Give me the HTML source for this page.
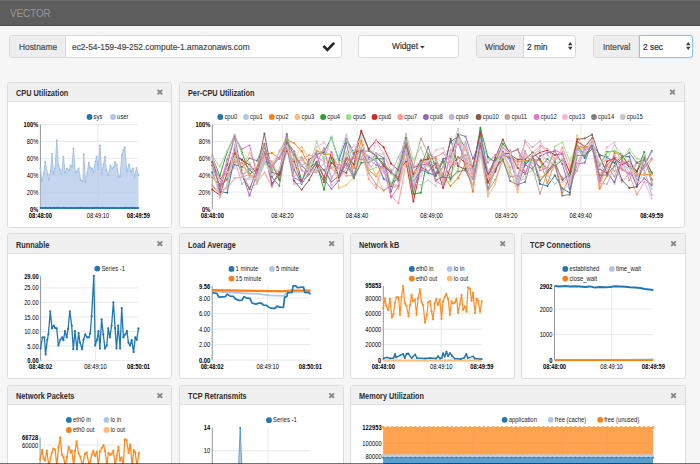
<!DOCTYPE html>
<html><head><meta charset="utf-8">
<style>
*{box-sizing:border-box;margin:0;padding:0}
html,body{width:700px;height:464px;overflow:hidden;background:#f6f6f6;font-family:"Liberation Sans",sans-serif;color:#333}
.abs{position:absolute}
#topbar{position:absolute;left:0;top:0;width:700px;height:26px;background:#5d5d5d;border-top:1px solid #6b6b6b;border-bottom:1px solid #484848}
#brand{position:absolute;left:10px;top:7px;font-size:11.4px;color:#999999;transform:scaleX(0.86);transform-origin:0 0;line-height:1}
.grp{position:absolute;top:35px;height:23px;border:1px solid #d9d9d9;border-radius:3px;background:#fff}
.addon{position:absolute;left:0;top:0;bottom:0;background:#eeeeee;border-right:1px solid #d9d9d9;border-radius:2px 0 0 2px}
.t{position:absolute;white-space:pre;font-size:9.4px;line-height:1;-webkit-text-stroke:0.2px currentColor;transform:scaleX(0.89);transform-origin:0 0}
.panel{position:absolute;border:1px solid #dcdcdc;border-radius:2.5px;background:#fff;overflow:hidden}
.ph{position:absolute;left:0;top:0;right:0;height:19px;background:#f0f0f0;border-bottom:1px solid #e2e2e2}
.pt{position:absolute;left:7.6px;top:5px;font-size:8.7px;font-weight:bold;color:#2b2b2b;white-space:pre;transform-origin:0 0;transform:scaleX(0.84)}
.px{position:absolute;top:4px;width:8px;height:8px}
svg text{font-family:"Liberation Sans",sans-serif}
</style></head><body>
<div id="topbar"><div id="brand">VECTOR</div></div>

<!-- Hostname -->
<div class="grp" style="left:9px;width:333px">
  <div class="addon" style="width:56px"></div>
  <div class="t" style="left:9px;top:5.5px;color:#4a4a4a">Hostname</div>
  <div class="t" style="left:62px;top:5.5px;color:#4a4a4a">ec2-54-159-49-252.compute-1.amazonaws.com</div>
  <svg class="abs" style="left:312px;top:4.3px;overflow:visible" width="14" height="12" viewBox="0 0 14 12"><path d="M1.4 5.9 L5.4 9.9 L12.2 2.9" fill="none" stroke="#262626" stroke-width="2.7"/></svg>
</div>

<!-- Widget -->
<div class="grp" style="left:358px;width:101px;top:34.5px;border-color:#dcdcdc">
  <div class="t" style="left:33px;top:5.5px;color:#333">Widget</div>
  <svg class="abs" style="left:61px;top:10px" width="5" height="3"><path d="M0 0 L4.8 0 L2.4 2.6Z" fill="#333"/></svg>
</div>

<!-- Window -->
<div class="grp" style="left:476px;width:100px">
  <div class="addon" style="width:47px"></div>
  <div class="t" style="left:7.5px;top:5.5px;color:#4a4a4a">Window</div>
  <div class="t" style="left:50px;top:5.5px;color:#333">2 min</div>
  <svg class="abs" style="left:91px;top:5.6px" width="5" height="9"><path d="M0 3.3 L2.25 0 L4.5 3.3Z M0 4.7 L2.25 8 L4.5 4.7Z" fill="#3a3a3a"/></svg>
</div>

<!-- Interval -->
<div class="grp" style="left:593px;width:100px">
  <div class="addon" style="width:46px"></div>
  <div class="t" style="left:8.5px;top:5.5px;color:#4a4a4a">Interval</div>
  <div class="t" style="left:48.5px;top:5.5px;color:#333">2 sec</div>
  <div class="abs" style="left:45px;top:-1px;right:-1px;bottom:-1px;border:1px solid #92c3ee;border-radius:0 3px 3px 0;box-shadow:0 0 1.5px rgba(102,175,233,0.5)"></div>
  <svg class="abs" style="left:91.5px;top:5.6px" width="5" height="9"><path d="M0 3.3 L2.25 0 L4.5 3.3Z M0 4.7 L2.25 8 L4.5 4.7Z" fill="#3a3a3a"/></svg>
</div>

<!-- PANELS -->
<div class="panel" style="left:7px;top:82px;width:165px;height:146px"><div class="ph"></div><div class="pt">CPU Utilization</div></div>
<div class="panel" style="left:179px;top:82px;width:506px;height:146px"><div class="ph"></div><div class="pt">Per-CPU Utilization</div></div>

<div class="panel" style="left:7px;top:233px;width:165px;height:146px"><div class="ph" style="height:20px"></div><div class="pt" style="top:6px">Runnable</div></div>
<div class="panel" style="left:179px;top:233px;width:165px;height:146px"><div class="ph" style="height:20px"></div><div class="pt" style="top:6px">Load Average</div></div>
<div class="panel" style="left:350px;top:233px;width:165px;height:146px"><div class="ph" style="height:20px"></div><div class="pt" style="top:6px">Network kB</div></div>
<div class="panel" style="left:521px;top:233px;width:165px;height:146px"><div class="ph" style="height:20px"></div><div class="pt" style="top:6px">TCP Connections</div></div>

<div class="panel" style="left:7px;top:385px;width:165px;height:100px"><div class="ph"></div><div class="pt">Network Packets</div></div>
<div class="panel" style="left:179px;top:385px;width:165px;height:100px"><div class="ph"></div><div class="pt">TCP Retransmits</div></div>
<div class="panel" style="left:350px;top:385px;width:336px;height:100px"><div class="ph"></div><div class="pt">Memory Utilization</div></div>

<svg style="position:absolute;left:0;top:0" width="700" height="464" viewBox="0 0 700 464">
<line x1="40.4" y1="124.5" x2="138.4" y2="124.5" stroke="#e6e6e6" stroke-width="0.9"/>
<line x1="40.4" y1="141.4" x2="138.4" y2="141.4" stroke="#e6e6e6" stroke-width="0.9"/>
<line x1="40.4" y1="158.3" x2="138.4" y2="158.3" stroke="#e6e6e6" stroke-width="0.9"/>
<line x1="40.4" y1="175.2" x2="138.4" y2="175.2" stroke="#e6e6e6" stroke-width="0.9"/>
<line x1="40.4" y1="192.1" x2="138.4" y2="192.1" stroke="#e6e6e6" stroke-width="0.9"/>
<line x1="40.4" y1="209" x2="138.4" y2="209" stroke="#e6e6e6" stroke-width="0.9"/>
<line x1="98" y1="124.5" x2="98" y2="209" stroke="#e6e6e6" stroke-width="0.9"/>
<line x1="40.4" y1="124.5" x2="40.4" y2="209" stroke="#8a8a8a" stroke-width="0.9"/>
<text transform="translate(38.4 124.5) scale(0.89 1)" text-anchor="end" font-size="6.5" font-weight="bold" fill="#000" dominant-baseline="central">100%</text>
<text transform="translate(38.4 141.4) scale(0.89 1)" text-anchor="end" font-size="6.5" fill="#000" dominant-baseline="central">80%</text>
<text transform="translate(38.4 158.3) scale(0.89 1)" text-anchor="end" font-size="6.5" fill="#000" dominant-baseline="central">60%</text>
<text transform="translate(38.4 175.2) scale(0.89 1)" text-anchor="end" font-size="6.5" fill="#000" dominant-baseline="central">40%</text>
<text transform="translate(38.4 192.1) scale(0.89 1)" text-anchor="end" font-size="6.5" fill="#000" dominant-baseline="central">20%</text>
<text transform="translate(38.4 209) scale(0.89 1)" text-anchor="end" font-size="6.5" font-weight="bold" fill="#000" dominant-baseline="central">0%</text>
<text transform="translate(40.4 215.2) scale(0.89 1)" text-anchor="middle" font-size="6.5" font-weight="bold" fill="#000" dominant-baseline="central">08:48:00</text>
<text transform="translate(98 215.2) scale(0.89 1)" text-anchor="middle" font-size="6.5" fill="#000" dominant-baseline="central">08:49:10</text>
<text transform="translate(138.4 215.2) scale(0.89 1)" text-anchor="middle" font-size="6.5" font-weight="bold" fill="#000" dominant-baseline="central">08:49:59</text>
<polygon points="40.4,168 41.9,181 43.8,173.4 45.2,162 47.7,174 48.7,179.6 50.6,171.4 52,154 53.5,173.4 55,168.5 56.8,140.4 58.3,165.6 59.9,169.5 61.6,174.3 63.4,156.9 65.1,172.4 67,168.5 69,170.4 70.5,165.6 71.9,166.6 73.5,148.6 75.2,172.8 76.8,171.4 78.7,168.5 80.6,180 83,181 83.7,154.4 85.5,182 87.4,172.4 88.8,162.7 89.9,167.5 91.9,168.5 93.4,172.4 95.4,161.7 96.7,156.9 98,169.5 100,145.6 101.6,173.4 103.5,164.6 105,156.9 106.4,170.4 108.3,175.3 110.3,165.6 112.2,168.5 113.6,167 115.1,162.3 116.7,165 118.6,177.2 120,176.3 121.9,154.9 123.5,150.1 124.8,147.2 126.8,171.4 129.1,164.6 131,171.4 133,168.5 134.5,177.2 136.4,168.1 138.4,175.3 138.4,207.9 40.4,207.9" fill="#aec7e8" opacity="0.72"/>
<polyline points="40.4,168 41.9,181 43.8,173.4 45.2,162 47.7,174 48.7,179.6 50.6,171.4 52,154 53.5,173.4 55,168.5 56.8,140.4 58.3,165.6 59.9,169.5 61.6,174.3 63.4,156.9 65.1,172.4 67,168.5 69,170.4 70.5,165.6 71.9,166.6 73.5,148.6 75.2,172.8 76.8,171.4 78.7,168.5 80.6,180 83,181 83.7,154.4 85.5,182 87.4,172.4 88.8,162.7 89.9,167.5 91.9,168.5 93.4,172.4 95.4,161.7 96.7,156.9 98,169.5 100,145.6 101.6,173.4 103.5,164.6 105,156.9 106.4,170.4 108.3,175.3 110.3,165.6 112.2,168.5 113.6,167 115.1,162.3 116.7,165 118.6,177.2 120,176.3 121.9,154.9 123.5,150.1 124.8,147.2 126.8,171.4 129.1,164.6 131,171.4 133,168.5 134.5,177.2 136.4,168.1 138.4,175.3" fill="none" stroke="#a3bfe3" stroke-width="0.9" stroke-linejoin="round" opacity="1"/>
<circle cx="40.4" cy="168" r="1.05" fill="#a3bfe3" opacity="1"/>
<circle cx="41.9" cy="181" r="1.05" fill="#a3bfe3" opacity="1"/>
<circle cx="43.8" cy="173.4" r="1.05" fill="#a3bfe3" opacity="1"/>
<circle cx="45.2" cy="162" r="1.05" fill="#a3bfe3" opacity="1"/>
<circle cx="47.7" cy="174" r="1.05" fill="#a3bfe3" opacity="1"/>
<circle cx="48.7" cy="179.6" r="1.05" fill="#a3bfe3" opacity="1"/>
<circle cx="50.6" cy="171.4" r="1.05" fill="#a3bfe3" opacity="1"/>
<circle cx="52" cy="154" r="1.05" fill="#a3bfe3" opacity="1"/>
<circle cx="53.5" cy="173.4" r="1.05" fill="#a3bfe3" opacity="1"/>
<circle cx="55" cy="168.5" r="1.05" fill="#a3bfe3" opacity="1"/>
<circle cx="56.8" cy="140.4" r="1.05" fill="#a3bfe3" opacity="1"/>
<circle cx="58.3" cy="165.6" r="1.05" fill="#a3bfe3" opacity="1"/>
<circle cx="59.9" cy="169.5" r="1.05" fill="#a3bfe3" opacity="1"/>
<circle cx="61.6" cy="174.3" r="1.05" fill="#a3bfe3" opacity="1"/>
<circle cx="63.4" cy="156.9" r="1.05" fill="#a3bfe3" opacity="1"/>
<circle cx="65.1" cy="172.4" r="1.05" fill="#a3bfe3" opacity="1"/>
<circle cx="67" cy="168.5" r="1.05" fill="#a3bfe3" opacity="1"/>
<circle cx="69" cy="170.4" r="1.05" fill="#a3bfe3" opacity="1"/>
<circle cx="70.5" cy="165.6" r="1.05" fill="#a3bfe3" opacity="1"/>
<circle cx="71.9" cy="166.6" r="1.05" fill="#a3bfe3" opacity="1"/>
<circle cx="73.5" cy="148.6" r="1.05" fill="#a3bfe3" opacity="1"/>
<circle cx="75.2" cy="172.8" r="1.05" fill="#a3bfe3" opacity="1"/>
<circle cx="76.8" cy="171.4" r="1.05" fill="#a3bfe3" opacity="1"/>
<circle cx="78.7" cy="168.5" r="1.05" fill="#a3bfe3" opacity="1"/>
<circle cx="80.6" cy="180" r="1.05" fill="#a3bfe3" opacity="1"/>
<circle cx="83" cy="181" r="1.05" fill="#a3bfe3" opacity="1"/>
<circle cx="83.7" cy="154.4" r="1.05" fill="#a3bfe3" opacity="1"/>
<circle cx="85.5" cy="182" r="1.05" fill="#a3bfe3" opacity="1"/>
<circle cx="87.4" cy="172.4" r="1.05" fill="#a3bfe3" opacity="1"/>
<circle cx="88.8" cy="162.7" r="1.05" fill="#a3bfe3" opacity="1"/>
<circle cx="89.9" cy="167.5" r="1.05" fill="#a3bfe3" opacity="1"/>
<circle cx="91.9" cy="168.5" r="1.05" fill="#a3bfe3" opacity="1"/>
<circle cx="93.4" cy="172.4" r="1.05" fill="#a3bfe3" opacity="1"/>
<circle cx="95.4" cy="161.7" r="1.05" fill="#a3bfe3" opacity="1"/>
<circle cx="96.7" cy="156.9" r="1.05" fill="#a3bfe3" opacity="1"/>
<circle cx="98" cy="169.5" r="1.05" fill="#a3bfe3" opacity="1"/>
<circle cx="100" cy="145.6" r="1.05" fill="#a3bfe3" opacity="1"/>
<circle cx="101.6" cy="173.4" r="1.05" fill="#a3bfe3" opacity="1"/>
<circle cx="103.5" cy="164.6" r="1.05" fill="#a3bfe3" opacity="1"/>
<circle cx="105" cy="156.9" r="1.05" fill="#a3bfe3" opacity="1"/>
<circle cx="106.4" cy="170.4" r="1.05" fill="#a3bfe3" opacity="1"/>
<circle cx="108.3" cy="175.3" r="1.05" fill="#a3bfe3" opacity="1"/>
<circle cx="110.3" cy="165.6" r="1.05" fill="#a3bfe3" opacity="1"/>
<circle cx="112.2" cy="168.5" r="1.05" fill="#a3bfe3" opacity="1"/>
<circle cx="113.6" cy="167" r="1.05" fill="#a3bfe3" opacity="1"/>
<circle cx="115.1" cy="162.3" r="1.05" fill="#a3bfe3" opacity="1"/>
<circle cx="116.7" cy="165" r="1.05" fill="#a3bfe3" opacity="1"/>
<circle cx="118.6" cy="177.2" r="1.05" fill="#a3bfe3" opacity="1"/>
<circle cx="120" cy="176.3" r="1.05" fill="#a3bfe3" opacity="1"/>
<circle cx="121.9" cy="154.9" r="1.05" fill="#a3bfe3" opacity="1"/>
<circle cx="123.5" cy="150.1" r="1.05" fill="#a3bfe3" opacity="1"/>
<circle cx="124.8" cy="147.2" r="1.05" fill="#a3bfe3" opacity="1"/>
<circle cx="126.8" cy="171.4" r="1.05" fill="#a3bfe3" opacity="1"/>
<circle cx="129.1" cy="164.6" r="1.05" fill="#a3bfe3" opacity="1"/>
<circle cx="131" cy="171.4" r="1.05" fill="#a3bfe3" opacity="1"/>
<circle cx="133" cy="168.5" r="1.05" fill="#a3bfe3" opacity="1"/>
<circle cx="134.5" cy="177.2" r="1.05" fill="#a3bfe3" opacity="1"/>
<circle cx="136.4" cy="168.1" r="1.05" fill="#a3bfe3" opacity="1"/>
<circle cx="138.4" cy="175.3" r="1.05" fill="#a3bfe3" opacity="1"/>
<rect x="40.4" y="207.9" width="98" height="1.1" fill="#1f77b4" opacity="0.7"/>
<polyline points="40.4,207.81 42.06,207.73 43.72,207.98 45.38,207.69 47.04,207.92 48.7,207.83 50.37,207.68 52.03,207.9 53.69,207.67 55.35,207.87 57.01,207.68 58.67,207.7 60.33,207.86 61.99,208.06 63.65,207.71 65.31,207.76 66.98,207.96 68.64,208.12 70.3,207.94 71.96,207.85 73.62,208.14 75.28,207.67 76.94,208.08 78.6,207.79 80.26,207.72 81.92,207.71 83.59,207.8 85.25,208.06 86.91,207.74 88.57,207.94 90.23,207.97 91.89,207.84 93.55,207.92 95.21,207.68 96.87,207.68 98.53,207.75 100.2,207.99 101.86,207.86 103.52,207.81 105.18,207.94 106.84,207.88 108.5,207.8 110.16,208.05 111.82,208 113.48,207.77 115.15,207.94 116.81,207.91 118.47,208.09 120.13,208.01 121.79,207.79 123.45,208.14 125.11,207.71 126.77,207.86 128.43,208.03 130.09,207.73 131.75,207.89 133.42,207.67 135.08,207.98 136.74,208.03 138.4,207.94" fill="none" stroke="#1f77b4" stroke-width="1.5" stroke-linejoin="round" opacity="1"/>
<circle cx="40.4" cy="207.81" r="0.85" fill="#1f77b4" opacity="1"/>
<circle cx="42.06" cy="207.73" r="0.85" fill="#1f77b4" opacity="1"/>
<circle cx="43.72" cy="207.98" r="0.85" fill="#1f77b4" opacity="1"/>
<circle cx="45.38" cy="207.69" r="0.85" fill="#1f77b4" opacity="1"/>
<circle cx="47.04" cy="207.92" r="0.85" fill="#1f77b4" opacity="1"/>
<circle cx="48.7" cy="207.83" r="0.85" fill="#1f77b4" opacity="1"/>
<circle cx="50.37" cy="207.68" r="0.85" fill="#1f77b4" opacity="1"/>
<circle cx="52.03" cy="207.9" r="0.85" fill="#1f77b4" opacity="1"/>
<circle cx="53.69" cy="207.67" r="0.85" fill="#1f77b4" opacity="1"/>
<circle cx="55.35" cy="207.87" r="0.85" fill="#1f77b4" opacity="1"/>
<circle cx="57.01" cy="207.68" r="0.85" fill="#1f77b4" opacity="1"/>
<circle cx="58.67" cy="207.7" r="0.85" fill="#1f77b4" opacity="1"/>
<circle cx="60.33" cy="207.86" r="0.85" fill="#1f77b4" opacity="1"/>
<circle cx="61.99" cy="208.06" r="0.85" fill="#1f77b4" opacity="1"/>
<circle cx="63.65" cy="207.71" r="0.85" fill="#1f77b4" opacity="1"/>
<circle cx="65.31" cy="207.76" r="0.85" fill="#1f77b4" opacity="1"/>
<circle cx="66.98" cy="207.96" r="0.85" fill="#1f77b4" opacity="1"/>
<circle cx="68.64" cy="208.12" r="0.85" fill="#1f77b4" opacity="1"/>
<circle cx="70.3" cy="207.94" r="0.85" fill="#1f77b4" opacity="1"/>
<circle cx="71.96" cy="207.85" r="0.85" fill="#1f77b4" opacity="1"/>
<circle cx="73.62" cy="208.14" r="0.85" fill="#1f77b4" opacity="1"/>
<circle cx="75.28" cy="207.67" r="0.85" fill="#1f77b4" opacity="1"/>
<circle cx="76.94" cy="208.08" r="0.85" fill="#1f77b4" opacity="1"/>
<circle cx="78.6" cy="207.79" r="0.85" fill="#1f77b4" opacity="1"/>
<circle cx="80.26" cy="207.72" r="0.85" fill="#1f77b4" opacity="1"/>
<circle cx="81.92" cy="207.71" r="0.85" fill="#1f77b4" opacity="1"/>
<circle cx="83.59" cy="207.8" r="0.85" fill="#1f77b4" opacity="1"/>
<circle cx="85.25" cy="208.06" r="0.85" fill="#1f77b4" opacity="1"/>
<circle cx="86.91" cy="207.74" r="0.85" fill="#1f77b4" opacity="1"/>
<circle cx="88.57" cy="207.94" r="0.85" fill="#1f77b4" opacity="1"/>
<circle cx="90.23" cy="207.97" r="0.85" fill="#1f77b4" opacity="1"/>
<circle cx="91.89" cy="207.84" r="0.85" fill="#1f77b4" opacity="1"/>
<circle cx="93.55" cy="207.92" r="0.85" fill="#1f77b4" opacity="1"/>
<circle cx="95.21" cy="207.68" r="0.85" fill="#1f77b4" opacity="1"/>
<circle cx="96.87" cy="207.68" r="0.85" fill="#1f77b4" opacity="1"/>
<circle cx="98.53" cy="207.75" r="0.85" fill="#1f77b4" opacity="1"/>
<circle cx="100.2" cy="207.99" r="0.85" fill="#1f77b4" opacity="1"/>
<circle cx="101.86" cy="207.86" r="0.85" fill="#1f77b4" opacity="1"/>
<circle cx="103.52" cy="207.81" r="0.85" fill="#1f77b4" opacity="1"/>
<circle cx="105.18" cy="207.94" r="0.85" fill="#1f77b4" opacity="1"/>
<circle cx="106.84" cy="207.88" r="0.85" fill="#1f77b4" opacity="1"/>
<circle cx="108.5" cy="207.8" r="0.85" fill="#1f77b4" opacity="1"/>
<circle cx="110.16" cy="208.05" r="0.85" fill="#1f77b4" opacity="1"/>
<circle cx="111.82" cy="208" r="0.85" fill="#1f77b4" opacity="1"/>
<circle cx="113.48" cy="207.77" r="0.85" fill="#1f77b4" opacity="1"/>
<circle cx="115.15" cy="207.94" r="0.85" fill="#1f77b4" opacity="1"/>
<circle cx="116.81" cy="207.91" r="0.85" fill="#1f77b4" opacity="1"/>
<circle cx="118.47" cy="208.09" r="0.85" fill="#1f77b4" opacity="1"/>
<circle cx="120.13" cy="208.01" r="0.85" fill="#1f77b4" opacity="1"/>
<circle cx="121.79" cy="207.79" r="0.85" fill="#1f77b4" opacity="1"/>
<circle cx="123.45" cy="208.14" r="0.85" fill="#1f77b4" opacity="1"/>
<circle cx="125.11" cy="207.71" r="0.85" fill="#1f77b4" opacity="1"/>
<circle cx="126.77" cy="207.86" r="0.85" fill="#1f77b4" opacity="1"/>
<circle cx="128.43" cy="208.03" r="0.85" fill="#1f77b4" opacity="1"/>
<circle cx="130.09" cy="207.73" r="0.85" fill="#1f77b4" opacity="1"/>
<circle cx="131.75" cy="207.89" r="0.85" fill="#1f77b4" opacity="1"/>
<circle cx="133.42" cy="207.67" r="0.85" fill="#1f77b4" opacity="1"/>
<circle cx="135.08" cy="207.98" r="0.85" fill="#1f77b4" opacity="1"/>
<circle cx="136.74" cy="208.03" r="0.85" fill="#1f77b4" opacity="1"/>
<circle cx="138.4" cy="207.94" r="0.85" fill="#1f77b4" opacity="1"/>
<circle cx="89.5" cy="117" r="2.9" fill="#1f77b4"/>
<text transform="translate(93.6 116.6) scale(0.91 1)" text-anchor="start" font-size="6.5" fill="#222" dominant-baseline="central">sys</text>
<circle cx="113" cy="117" r="2.9" fill="#aec7e8"/>
<text transform="translate(117.1 116.6) scale(0.91 1)" text-anchor="start" font-size="6.5" fill="#222" dominant-baseline="central">user</text>
<line x1="212.3" y1="124.5" x2="651.7" y2="124.5" stroke="#e6e6e6" stroke-width="0.9"/>
<line x1="212.3" y1="141.4" x2="651.7" y2="141.4" stroke="#e6e6e6" stroke-width="0.9"/>
<line x1="212.3" y1="158.3" x2="651.7" y2="158.3" stroke="#e6e6e6" stroke-width="0.9"/>
<line x1="212.3" y1="175.2" x2="651.7" y2="175.2" stroke="#e6e6e6" stroke-width="0.9"/>
<line x1="212.3" y1="192.1" x2="651.7" y2="192.1" stroke="#e6e6e6" stroke-width="0.9"/>
<line x1="212.3" y1="209" x2="651.7" y2="209" stroke="#e6e6e6" stroke-width="0.9"/>
<line x1="282.4" y1="124.5" x2="282.4" y2="209" stroke="#e6e6e6" stroke-width="0.9"/>
<line x1="357" y1="124.5" x2="357" y2="209" stroke="#e6e6e6" stroke-width="0.9"/>
<line x1="431.6" y1="124.5" x2="431.6" y2="209" stroke="#e6e6e6" stroke-width="0.9"/>
<line x1="506.2" y1="124.5" x2="506.2" y2="209" stroke="#e6e6e6" stroke-width="0.9"/>
<line x1="580.8" y1="124.5" x2="580.8" y2="209" stroke="#e6e6e6" stroke-width="0.9"/>
<line x1="212.3" y1="124.5" x2="212.3" y2="209" stroke="#8a8a8a" stroke-width="0.9"/>
<text transform="translate(210.3 124.5) scale(0.89 1)" text-anchor="end" font-size="6.5" font-weight="bold" fill="#000" dominant-baseline="central">100%</text>
<text transform="translate(210.3 141.4) scale(0.89 1)" text-anchor="end" font-size="6.5" fill="#000" dominant-baseline="central">80%</text>
<text transform="translate(210.3 158.3) scale(0.89 1)" text-anchor="end" font-size="6.5" fill="#000" dominant-baseline="central">60%</text>
<text transform="translate(210.3 175.2) scale(0.89 1)" text-anchor="end" font-size="6.5" fill="#000" dominant-baseline="central">40%</text>
<text transform="translate(210.3 192.1) scale(0.89 1)" text-anchor="end" font-size="6.5" fill="#000" dominant-baseline="central">20%</text>
<text transform="translate(210.3 209) scale(0.89 1)" text-anchor="end" font-size="6.5" font-weight="bold" fill="#000" dominant-baseline="central">0%</text>
<text transform="translate(212.3 215.2) scale(0.89 1)" text-anchor="middle" font-size="6.5" font-weight="bold" fill="#000" dominant-baseline="central">08:48:00</text>
<text transform="translate(282.4 215.2) scale(0.89 1)" text-anchor="middle" font-size="6.5" fill="#000" dominant-baseline="central">08:48:20</text>
<text transform="translate(357 215.2) scale(0.89 1)" text-anchor="middle" font-size="6.5" fill="#000" dominant-baseline="central">08:48:40</text>
<text transform="translate(431.6 215.2) scale(0.89 1)" text-anchor="middle" font-size="6.5" fill="#000" dominant-baseline="central">08:49:00</text>
<text transform="translate(506.2 215.2) scale(0.89 1)" text-anchor="middle" font-size="6.5" fill="#000" dominant-baseline="central">08:49:20</text>
<text transform="translate(580.8 215.2) scale(0.89 1)" text-anchor="middle" font-size="6.5" fill="#000" dominant-baseline="central">08:49:40</text>
<text transform="translate(651.7 215.2) scale(0.89 1)" text-anchor="middle" font-size="6.5" font-weight="bold" fill="#000" dominant-baseline="central">08:49:59</text>
<polyline points="212.3,172.3 219.75,191.69 227.19,192.69 234.64,156.96 242.09,159.59 249.54,169.42 256.98,177.72 264.43,161.09 271.88,164.57 279.33,157.52 286.77,145.78 294.22,169.79 301.67,183.83 309.12,172.04 316.56,154.36 324.01,152.29 331.46,137.76 338.91,160.52 346.35,138.69 353.8,152.62 361.25,150.32 368.7,157 376.14,160.92 383.59,178.76 391.04,183.61 398.49,178.56 405.93,140.32 413.38,182.41 420.83,169.57 428.28,172.93 435.72,175.63 443.17,166.96 450.62,141.67 458.07,136.88 465.51,168.48 472.96,168.23 480.41,130.06 487.86,173.52 495.3,171.33 502.75,151.61 510.2,160.73 517.65,181.18 525.09,165.13 532.54,157.62 539.99,183.89 547.44,185.93 554.88,175.33 562.33,188.55 569.78,192.87 577.23,147.35 584.67,157.99 592.12,143.72 599.57,154.92 607.02,157.27 614.46,163.1 621.91,156.28 629.36,156.62 636.81,180.85 644.25,165.39 651.7,151.03" fill="none" stroke="#1f77b4" stroke-width="0.95" stroke-linejoin="round" opacity="1"/>
<circle cx="212.3" cy="172.3" r="1.05" fill="#1f77b4" opacity="1"/>
<circle cx="219.75" cy="191.69" r="1.05" fill="#1f77b4" opacity="1"/>
<circle cx="227.19" cy="192.69" r="1.05" fill="#1f77b4" opacity="1"/>
<circle cx="234.64" cy="156.96" r="1.05" fill="#1f77b4" opacity="1"/>
<circle cx="242.09" cy="159.59" r="1.05" fill="#1f77b4" opacity="1"/>
<circle cx="249.54" cy="169.42" r="1.05" fill="#1f77b4" opacity="1"/>
<circle cx="256.98" cy="177.72" r="1.05" fill="#1f77b4" opacity="1"/>
<circle cx="264.43" cy="161.09" r="1.05" fill="#1f77b4" opacity="1"/>
<circle cx="271.88" cy="164.57" r="1.05" fill="#1f77b4" opacity="1"/>
<circle cx="279.33" cy="157.52" r="1.05" fill="#1f77b4" opacity="1"/>
<circle cx="286.77" cy="145.78" r="1.05" fill="#1f77b4" opacity="1"/>
<circle cx="294.22" cy="169.79" r="1.05" fill="#1f77b4" opacity="1"/>
<circle cx="301.67" cy="183.83" r="1.05" fill="#1f77b4" opacity="1"/>
<circle cx="309.12" cy="172.04" r="1.05" fill="#1f77b4" opacity="1"/>
<circle cx="316.56" cy="154.36" r="1.05" fill="#1f77b4" opacity="1"/>
<circle cx="324.01" cy="152.29" r="1.05" fill="#1f77b4" opacity="1"/>
<circle cx="331.46" cy="137.76" r="1.05" fill="#1f77b4" opacity="1"/>
<circle cx="338.91" cy="160.52" r="1.05" fill="#1f77b4" opacity="1"/>
<circle cx="346.35" cy="138.69" r="1.05" fill="#1f77b4" opacity="1"/>
<circle cx="353.8" cy="152.62" r="1.05" fill="#1f77b4" opacity="1"/>
<circle cx="361.25" cy="150.32" r="1.05" fill="#1f77b4" opacity="1"/>
<circle cx="368.7" cy="157" r="1.05" fill="#1f77b4" opacity="1"/>
<circle cx="376.14" cy="160.92" r="1.05" fill="#1f77b4" opacity="1"/>
<circle cx="383.59" cy="178.76" r="1.05" fill="#1f77b4" opacity="1"/>
<circle cx="391.04" cy="183.61" r="1.05" fill="#1f77b4" opacity="1"/>
<circle cx="398.49" cy="178.56" r="1.05" fill="#1f77b4" opacity="1"/>
<circle cx="405.93" cy="140.32" r="1.05" fill="#1f77b4" opacity="1"/>
<circle cx="413.38" cy="182.41" r="1.05" fill="#1f77b4" opacity="1"/>
<circle cx="420.83" cy="169.57" r="1.05" fill="#1f77b4" opacity="1"/>
<circle cx="428.28" cy="172.93" r="1.05" fill="#1f77b4" opacity="1"/>
<circle cx="435.72" cy="175.63" r="1.05" fill="#1f77b4" opacity="1"/>
<circle cx="443.17" cy="166.96" r="1.05" fill="#1f77b4" opacity="1"/>
<circle cx="450.62" cy="141.67" r="1.05" fill="#1f77b4" opacity="1"/>
<circle cx="458.07" cy="136.88" r="1.05" fill="#1f77b4" opacity="1"/>
<circle cx="465.51" cy="168.48" r="1.05" fill="#1f77b4" opacity="1"/>
<circle cx="472.96" cy="168.23" r="1.05" fill="#1f77b4" opacity="1"/>
<circle cx="480.41" cy="130.06" r="1.05" fill="#1f77b4" opacity="1"/>
<circle cx="487.86" cy="173.52" r="1.05" fill="#1f77b4" opacity="1"/>
<circle cx="495.3" cy="171.33" r="1.05" fill="#1f77b4" opacity="1"/>
<circle cx="502.75" cy="151.61" r="1.05" fill="#1f77b4" opacity="1"/>
<circle cx="510.2" cy="160.73" r="1.05" fill="#1f77b4" opacity="1"/>
<circle cx="517.65" cy="181.18" r="1.05" fill="#1f77b4" opacity="1"/>
<circle cx="525.09" cy="165.13" r="1.05" fill="#1f77b4" opacity="1"/>
<circle cx="532.54" cy="157.62" r="1.05" fill="#1f77b4" opacity="1"/>
<circle cx="539.99" cy="183.89" r="1.05" fill="#1f77b4" opacity="1"/>
<circle cx="547.44" cy="185.93" r="1.05" fill="#1f77b4" opacity="1"/>
<circle cx="554.88" cy="175.33" r="1.05" fill="#1f77b4" opacity="1"/>
<circle cx="562.33" cy="188.55" r="1.05" fill="#1f77b4" opacity="1"/>
<circle cx="569.78" cy="192.87" r="1.05" fill="#1f77b4" opacity="1"/>
<circle cx="577.23" cy="147.35" r="1.05" fill="#1f77b4" opacity="1"/>
<circle cx="584.67" cy="157.99" r="1.05" fill="#1f77b4" opacity="1"/>
<circle cx="592.12" cy="143.72" r="1.05" fill="#1f77b4" opacity="1"/>
<circle cx="599.57" cy="154.92" r="1.05" fill="#1f77b4" opacity="1"/>
<circle cx="607.02" cy="157.27" r="1.05" fill="#1f77b4" opacity="1"/>
<circle cx="614.46" cy="163.1" r="1.05" fill="#1f77b4" opacity="1"/>
<circle cx="621.91" cy="156.28" r="1.05" fill="#1f77b4" opacity="1"/>
<circle cx="629.36" cy="156.62" r="1.05" fill="#1f77b4" opacity="1"/>
<circle cx="636.81" cy="180.85" r="1.05" fill="#1f77b4" opacity="1"/>
<circle cx="644.25" cy="165.39" r="1.05" fill="#1f77b4" opacity="1"/>
<circle cx="651.7" cy="151.03" r="1.05" fill="#1f77b4" opacity="1"/>
<polyline points="212.3,177.15 219.75,184.09 227.19,178.49 234.64,157.55 242.09,172.96 249.54,187.17 256.98,183.99 264.43,161.86 271.88,169.76 279.33,170.2 286.77,144.83 294.22,168.14 301.67,164.95 309.12,162.23 316.56,164.9 324.01,157.16 331.46,163.26 338.91,156.86 346.35,134.64 353.8,167.81 361.25,147.35 368.7,170.2 376.14,160.37 383.59,172.38 391.04,185.8 398.49,187.01 405.93,152.92 413.38,184.58 420.83,171.69 428.28,155.08 435.72,172.76 443.17,159.5 450.62,164.76 458.07,138.19 465.51,166.21 472.96,172.32 480.41,137.22 487.86,158.9 495.3,161.96 502.75,146.55 510.2,160.12 517.65,182.09 525.09,153.85 532.54,163.55 539.99,158.73 547.44,175.78 554.88,183.99 562.33,176.75 569.78,190.1 577.23,149.8 584.67,151.96 592.12,144.48 599.57,163.22 607.02,168.23 614.46,183.99 621.91,161.09 629.36,172.29 636.81,184.35 644.25,172.51 651.7,189.06" fill="none" stroke="#aec7e8" stroke-width="0.95" stroke-linejoin="round" opacity="1"/>
<circle cx="212.3" cy="177.15" r="1.05" fill="#aec7e8" opacity="1"/>
<circle cx="219.75" cy="184.09" r="1.05" fill="#aec7e8" opacity="1"/>
<circle cx="227.19" cy="178.49" r="1.05" fill="#aec7e8" opacity="1"/>
<circle cx="234.64" cy="157.55" r="1.05" fill="#aec7e8" opacity="1"/>
<circle cx="242.09" cy="172.96" r="1.05" fill="#aec7e8" opacity="1"/>
<circle cx="249.54" cy="187.17" r="1.05" fill="#aec7e8" opacity="1"/>
<circle cx="256.98" cy="183.99" r="1.05" fill="#aec7e8" opacity="1"/>
<circle cx="264.43" cy="161.86" r="1.05" fill="#aec7e8" opacity="1"/>
<circle cx="271.88" cy="169.76" r="1.05" fill="#aec7e8" opacity="1"/>
<circle cx="279.33" cy="170.2" r="1.05" fill="#aec7e8" opacity="1"/>
<circle cx="286.77" cy="144.83" r="1.05" fill="#aec7e8" opacity="1"/>
<circle cx="294.22" cy="168.14" r="1.05" fill="#aec7e8" opacity="1"/>
<circle cx="301.67" cy="164.95" r="1.05" fill="#aec7e8" opacity="1"/>
<circle cx="309.12" cy="162.23" r="1.05" fill="#aec7e8" opacity="1"/>
<circle cx="316.56" cy="164.9" r="1.05" fill="#aec7e8" opacity="1"/>
<circle cx="324.01" cy="157.16" r="1.05" fill="#aec7e8" opacity="1"/>
<circle cx="331.46" cy="163.26" r="1.05" fill="#aec7e8" opacity="1"/>
<circle cx="338.91" cy="156.86" r="1.05" fill="#aec7e8" opacity="1"/>
<circle cx="346.35" cy="134.64" r="1.05" fill="#aec7e8" opacity="1"/>
<circle cx="353.8" cy="167.81" r="1.05" fill="#aec7e8" opacity="1"/>
<circle cx="361.25" cy="147.35" r="1.05" fill="#aec7e8" opacity="1"/>
<circle cx="368.7" cy="170.2" r="1.05" fill="#aec7e8" opacity="1"/>
<circle cx="376.14" cy="160.37" r="1.05" fill="#aec7e8" opacity="1"/>
<circle cx="383.59" cy="172.38" r="1.05" fill="#aec7e8" opacity="1"/>
<circle cx="391.04" cy="185.8" r="1.05" fill="#aec7e8" opacity="1"/>
<circle cx="398.49" cy="187.01" r="1.05" fill="#aec7e8" opacity="1"/>
<circle cx="405.93" cy="152.92" r="1.05" fill="#aec7e8" opacity="1"/>
<circle cx="413.38" cy="184.58" r="1.05" fill="#aec7e8" opacity="1"/>
<circle cx="420.83" cy="171.69" r="1.05" fill="#aec7e8" opacity="1"/>
<circle cx="428.28" cy="155.08" r="1.05" fill="#aec7e8" opacity="1"/>
<circle cx="435.72" cy="172.76" r="1.05" fill="#aec7e8" opacity="1"/>
<circle cx="443.17" cy="159.5" r="1.05" fill="#aec7e8" opacity="1"/>
<circle cx="450.62" cy="164.76" r="1.05" fill="#aec7e8" opacity="1"/>
<circle cx="458.07" cy="138.19" r="1.05" fill="#aec7e8" opacity="1"/>
<circle cx="465.51" cy="166.21" r="1.05" fill="#aec7e8" opacity="1"/>
<circle cx="472.96" cy="172.32" r="1.05" fill="#aec7e8" opacity="1"/>
<circle cx="480.41" cy="137.22" r="1.05" fill="#aec7e8" opacity="1"/>
<circle cx="487.86" cy="158.9" r="1.05" fill="#aec7e8" opacity="1"/>
<circle cx="495.3" cy="161.96" r="1.05" fill="#aec7e8" opacity="1"/>
<circle cx="502.75" cy="146.55" r="1.05" fill="#aec7e8" opacity="1"/>
<circle cx="510.2" cy="160.12" r="1.05" fill="#aec7e8" opacity="1"/>
<circle cx="517.65" cy="182.09" r="1.05" fill="#aec7e8" opacity="1"/>
<circle cx="525.09" cy="153.85" r="1.05" fill="#aec7e8" opacity="1"/>
<circle cx="532.54" cy="163.55" r="1.05" fill="#aec7e8" opacity="1"/>
<circle cx="539.99" cy="158.73" r="1.05" fill="#aec7e8" opacity="1"/>
<circle cx="547.44" cy="175.78" r="1.05" fill="#aec7e8" opacity="1"/>
<circle cx="554.88" cy="183.99" r="1.05" fill="#aec7e8" opacity="1"/>
<circle cx="562.33" cy="176.75" r="1.05" fill="#aec7e8" opacity="1"/>
<circle cx="569.78" cy="190.1" r="1.05" fill="#aec7e8" opacity="1"/>
<circle cx="577.23" cy="149.8" r="1.05" fill="#aec7e8" opacity="1"/>
<circle cx="584.67" cy="151.96" r="1.05" fill="#aec7e8" opacity="1"/>
<circle cx="592.12" cy="144.48" r="1.05" fill="#aec7e8" opacity="1"/>
<circle cx="599.57" cy="163.22" r="1.05" fill="#aec7e8" opacity="1"/>
<circle cx="607.02" cy="168.23" r="1.05" fill="#aec7e8" opacity="1"/>
<circle cx="614.46" cy="183.99" r="1.05" fill="#aec7e8" opacity="1"/>
<circle cx="621.91" cy="161.09" r="1.05" fill="#aec7e8" opacity="1"/>
<circle cx="629.36" cy="172.29" r="1.05" fill="#aec7e8" opacity="1"/>
<circle cx="636.81" cy="184.35" r="1.05" fill="#aec7e8" opacity="1"/>
<circle cx="644.25" cy="172.51" r="1.05" fill="#aec7e8" opacity="1"/>
<circle cx="651.7" cy="189.06" r="1.05" fill="#aec7e8" opacity="1"/>
<polyline points="212.3,177.57 219.75,184.67 227.19,164.55 234.64,161.58 242.09,163.18 249.54,175.51 256.98,176.88 264.43,154.39 271.88,152.98 279.33,158.91 286.77,139.59 294.22,143.34 301.67,151.13 309.12,164.88 316.56,150.69 324.01,154.28 331.46,154.38 338.91,168.23 346.35,157.36 353.8,168.36 361.25,140.44 368.7,170.02 376.14,176.33 383.59,162.49 391.04,173.18 398.49,177.14 405.93,140.96 413.38,176.87 420.83,162.79 428.28,158.36 435.72,158.75 443.17,175.7 450.62,185.93 458.07,178.16 465.51,163.52 472.96,191.76 480.41,144.13 487.86,183.23 495.3,158.64 502.75,156.51 510.2,156.49 517.65,162.03 525.09,160.84 532.54,159.7 539.99,160.14 547.44,183.43 554.88,162 562.33,192.87 569.78,176.13 577.23,148.48 584.67,147.13 592.12,145.56 599.57,188.8 607.02,176.04 614.46,152.9 621.91,155.69 629.36,165.15 636.81,174.31 644.25,174.65 651.7,174.44" fill="none" stroke="#ff7f0e" stroke-width="0.95" stroke-linejoin="round" opacity="1"/>
<circle cx="212.3" cy="177.57" r="1.05" fill="#ff7f0e" opacity="1"/>
<circle cx="219.75" cy="184.67" r="1.05" fill="#ff7f0e" opacity="1"/>
<circle cx="227.19" cy="164.55" r="1.05" fill="#ff7f0e" opacity="1"/>
<circle cx="234.64" cy="161.58" r="1.05" fill="#ff7f0e" opacity="1"/>
<circle cx="242.09" cy="163.18" r="1.05" fill="#ff7f0e" opacity="1"/>
<circle cx="249.54" cy="175.51" r="1.05" fill="#ff7f0e" opacity="1"/>
<circle cx="256.98" cy="176.88" r="1.05" fill="#ff7f0e" opacity="1"/>
<circle cx="264.43" cy="154.39" r="1.05" fill="#ff7f0e" opacity="1"/>
<circle cx="271.88" cy="152.98" r="1.05" fill="#ff7f0e" opacity="1"/>
<circle cx="279.33" cy="158.91" r="1.05" fill="#ff7f0e" opacity="1"/>
<circle cx="286.77" cy="139.59" r="1.05" fill="#ff7f0e" opacity="1"/>
<circle cx="294.22" cy="143.34" r="1.05" fill="#ff7f0e" opacity="1"/>
<circle cx="301.67" cy="151.13" r="1.05" fill="#ff7f0e" opacity="1"/>
<circle cx="309.12" cy="164.88" r="1.05" fill="#ff7f0e" opacity="1"/>
<circle cx="316.56" cy="150.69" r="1.05" fill="#ff7f0e" opacity="1"/>
<circle cx="324.01" cy="154.28" r="1.05" fill="#ff7f0e" opacity="1"/>
<circle cx="331.46" cy="154.38" r="1.05" fill="#ff7f0e" opacity="1"/>
<circle cx="338.91" cy="168.23" r="1.05" fill="#ff7f0e" opacity="1"/>
<circle cx="346.35" cy="157.36" r="1.05" fill="#ff7f0e" opacity="1"/>
<circle cx="353.8" cy="168.36" r="1.05" fill="#ff7f0e" opacity="1"/>
<circle cx="361.25" cy="140.44" r="1.05" fill="#ff7f0e" opacity="1"/>
<circle cx="368.7" cy="170.02" r="1.05" fill="#ff7f0e" opacity="1"/>
<circle cx="376.14" cy="176.33" r="1.05" fill="#ff7f0e" opacity="1"/>
<circle cx="383.59" cy="162.49" r="1.05" fill="#ff7f0e" opacity="1"/>
<circle cx="391.04" cy="173.18" r="1.05" fill="#ff7f0e" opacity="1"/>
<circle cx="398.49" cy="177.14" r="1.05" fill="#ff7f0e" opacity="1"/>
<circle cx="405.93" cy="140.96" r="1.05" fill="#ff7f0e" opacity="1"/>
<circle cx="413.38" cy="176.87" r="1.05" fill="#ff7f0e" opacity="1"/>
<circle cx="420.83" cy="162.79" r="1.05" fill="#ff7f0e" opacity="1"/>
<circle cx="428.28" cy="158.36" r="1.05" fill="#ff7f0e" opacity="1"/>
<circle cx="435.72" cy="158.75" r="1.05" fill="#ff7f0e" opacity="1"/>
<circle cx="443.17" cy="175.7" r="1.05" fill="#ff7f0e" opacity="1"/>
<circle cx="450.62" cy="185.93" r="1.05" fill="#ff7f0e" opacity="1"/>
<circle cx="458.07" cy="178.16" r="1.05" fill="#ff7f0e" opacity="1"/>
<circle cx="465.51" cy="163.52" r="1.05" fill="#ff7f0e" opacity="1"/>
<circle cx="472.96" cy="191.76" r="1.05" fill="#ff7f0e" opacity="1"/>
<circle cx="480.41" cy="144.13" r="1.05" fill="#ff7f0e" opacity="1"/>
<circle cx="487.86" cy="183.23" r="1.05" fill="#ff7f0e" opacity="1"/>
<circle cx="495.3" cy="158.64" r="1.05" fill="#ff7f0e" opacity="1"/>
<circle cx="502.75" cy="156.51" r="1.05" fill="#ff7f0e" opacity="1"/>
<circle cx="510.2" cy="156.49" r="1.05" fill="#ff7f0e" opacity="1"/>
<circle cx="517.65" cy="162.03" r="1.05" fill="#ff7f0e" opacity="1"/>
<circle cx="525.09" cy="160.84" r="1.05" fill="#ff7f0e" opacity="1"/>
<circle cx="532.54" cy="159.7" r="1.05" fill="#ff7f0e" opacity="1"/>
<circle cx="539.99" cy="160.14" r="1.05" fill="#ff7f0e" opacity="1"/>
<circle cx="547.44" cy="183.43" r="1.05" fill="#ff7f0e" opacity="1"/>
<circle cx="554.88" cy="162" r="1.05" fill="#ff7f0e" opacity="1"/>
<circle cx="562.33" cy="192.87" r="1.05" fill="#ff7f0e" opacity="1"/>
<circle cx="569.78" cy="176.13" r="1.05" fill="#ff7f0e" opacity="1"/>
<circle cx="577.23" cy="148.48" r="1.05" fill="#ff7f0e" opacity="1"/>
<circle cx="584.67" cy="147.13" r="1.05" fill="#ff7f0e" opacity="1"/>
<circle cx="592.12" cy="145.56" r="1.05" fill="#ff7f0e" opacity="1"/>
<circle cx="599.57" cy="188.8" r="1.05" fill="#ff7f0e" opacity="1"/>
<circle cx="607.02" cy="176.04" r="1.05" fill="#ff7f0e" opacity="1"/>
<circle cx="614.46" cy="152.9" r="1.05" fill="#ff7f0e" opacity="1"/>
<circle cx="621.91" cy="155.69" r="1.05" fill="#ff7f0e" opacity="1"/>
<circle cx="629.36" cy="165.15" r="1.05" fill="#ff7f0e" opacity="1"/>
<circle cx="636.81" cy="174.31" r="1.05" fill="#ff7f0e" opacity="1"/>
<circle cx="644.25" cy="174.65" r="1.05" fill="#ff7f0e" opacity="1"/>
<circle cx="651.7" cy="174.44" r="1.05" fill="#ff7f0e" opacity="1"/>
<polyline points="212.3,175.31 219.75,189.3 227.19,175.98 234.64,156.17 242.09,170.16 249.54,152.48 256.98,167.31 264.43,157.48 271.88,161 279.33,177.82 286.77,140.34 294.22,159.16 301.67,147.15 309.12,158.85 316.56,153.93 324.01,150.11 331.46,156.27 338.91,187.88 346.35,185 353.8,177.83 361.25,159.35 368.7,162.48 376.14,174.83 383.59,190.75 391.04,186.05 398.49,188.71 405.93,158.72 413.38,194.69 420.83,165.25 428.28,153.85 435.72,157.99 443.17,163.12 450.62,161.01 458.07,134.68 465.51,159.75 472.96,174.19 480.41,152.01 487.86,196.58 495.3,183.99 502.75,154.6 510.2,170.01 517.65,192.69 525.09,156.34 532.54,159.87 539.99,177.28 547.44,174.4 554.88,157.76 562.33,160.49 569.78,170.49 577.23,135.57 584.67,151.15 592.12,145.22 599.57,175.53 607.02,165.21 614.46,156.97 621.91,158.67 629.36,165.69 636.81,175.67 644.25,174.5 651.7,159.58" fill="none" stroke="#ffbb78" stroke-width="0.95" stroke-linejoin="round" opacity="1"/>
<circle cx="212.3" cy="175.31" r="1.05" fill="#ffbb78" opacity="1"/>
<circle cx="219.75" cy="189.3" r="1.05" fill="#ffbb78" opacity="1"/>
<circle cx="227.19" cy="175.98" r="1.05" fill="#ffbb78" opacity="1"/>
<circle cx="234.64" cy="156.17" r="1.05" fill="#ffbb78" opacity="1"/>
<circle cx="242.09" cy="170.16" r="1.05" fill="#ffbb78" opacity="1"/>
<circle cx="249.54" cy="152.48" r="1.05" fill="#ffbb78" opacity="1"/>
<circle cx="256.98" cy="167.31" r="1.05" fill="#ffbb78" opacity="1"/>
<circle cx="264.43" cy="157.48" r="1.05" fill="#ffbb78" opacity="1"/>
<circle cx="271.88" cy="161" r="1.05" fill="#ffbb78" opacity="1"/>
<circle cx="279.33" cy="177.82" r="1.05" fill="#ffbb78" opacity="1"/>
<circle cx="286.77" cy="140.34" r="1.05" fill="#ffbb78" opacity="1"/>
<circle cx="294.22" cy="159.16" r="1.05" fill="#ffbb78" opacity="1"/>
<circle cx="301.67" cy="147.15" r="1.05" fill="#ffbb78" opacity="1"/>
<circle cx="309.12" cy="158.85" r="1.05" fill="#ffbb78" opacity="1"/>
<circle cx="316.56" cy="153.93" r="1.05" fill="#ffbb78" opacity="1"/>
<circle cx="324.01" cy="150.11" r="1.05" fill="#ffbb78" opacity="1"/>
<circle cx="331.46" cy="156.27" r="1.05" fill="#ffbb78" opacity="1"/>
<circle cx="338.91" cy="187.88" r="1.05" fill="#ffbb78" opacity="1"/>
<circle cx="346.35" cy="185" r="1.05" fill="#ffbb78" opacity="1"/>
<circle cx="353.8" cy="177.83" r="1.05" fill="#ffbb78" opacity="1"/>
<circle cx="361.25" cy="159.35" r="1.05" fill="#ffbb78" opacity="1"/>
<circle cx="368.7" cy="162.48" r="1.05" fill="#ffbb78" opacity="1"/>
<circle cx="376.14" cy="174.83" r="1.05" fill="#ffbb78" opacity="1"/>
<circle cx="383.59" cy="190.75" r="1.05" fill="#ffbb78" opacity="1"/>
<circle cx="391.04" cy="186.05" r="1.05" fill="#ffbb78" opacity="1"/>
<circle cx="398.49" cy="188.71" r="1.05" fill="#ffbb78" opacity="1"/>
<circle cx="405.93" cy="158.72" r="1.05" fill="#ffbb78" opacity="1"/>
<circle cx="413.38" cy="194.69" r="1.05" fill="#ffbb78" opacity="1"/>
<circle cx="420.83" cy="165.25" r="1.05" fill="#ffbb78" opacity="1"/>
<circle cx="428.28" cy="153.85" r="1.05" fill="#ffbb78" opacity="1"/>
<circle cx="435.72" cy="157.99" r="1.05" fill="#ffbb78" opacity="1"/>
<circle cx="443.17" cy="163.12" r="1.05" fill="#ffbb78" opacity="1"/>
<circle cx="450.62" cy="161.01" r="1.05" fill="#ffbb78" opacity="1"/>
<circle cx="458.07" cy="134.68" r="1.05" fill="#ffbb78" opacity="1"/>
<circle cx="465.51" cy="159.75" r="1.05" fill="#ffbb78" opacity="1"/>
<circle cx="472.96" cy="174.19" r="1.05" fill="#ffbb78" opacity="1"/>
<circle cx="480.41" cy="152.01" r="1.05" fill="#ffbb78" opacity="1"/>
<circle cx="487.86" cy="196.58" r="1.05" fill="#ffbb78" opacity="1"/>
<circle cx="495.3" cy="183.99" r="1.05" fill="#ffbb78" opacity="1"/>
<circle cx="502.75" cy="154.6" r="1.05" fill="#ffbb78" opacity="1"/>
<circle cx="510.2" cy="170.01" r="1.05" fill="#ffbb78" opacity="1"/>
<circle cx="517.65" cy="192.69" r="1.05" fill="#ffbb78" opacity="1"/>
<circle cx="525.09" cy="156.34" r="1.05" fill="#ffbb78" opacity="1"/>
<circle cx="532.54" cy="159.87" r="1.05" fill="#ffbb78" opacity="1"/>
<circle cx="539.99" cy="177.28" r="1.05" fill="#ffbb78" opacity="1"/>
<circle cx="547.44" cy="174.4" r="1.05" fill="#ffbb78" opacity="1"/>
<circle cx="554.88" cy="157.76" r="1.05" fill="#ffbb78" opacity="1"/>
<circle cx="562.33" cy="160.49" r="1.05" fill="#ffbb78" opacity="1"/>
<circle cx="569.78" cy="170.49" r="1.05" fill="#ffbb78" opacity="1"/>
<circle cx="577.23" cy="135.57" r="1.05" fill="#ffbb78" opacity="1"/>
<circle cx="584.67" cy="151.15" r="1.05" fill="#ffbb78" opacity="1"/>
<circle cx="592.12" cy="145.22" r="1.05" fill="#ffbb78" opacity="1"/>
<circle cx="599.57" cy="175.53" r="1.05" fill="#ffbb78" opacity="1"/>
<circle cx="607.02" cy="165.21" r="1.05" fill="#ffbb78" opacity="1"/>
<circle cx="614.46" cy="156.97" r="1.05" fill="#ffbb78" opacity="1"/>
<circle cx="621.91" cy="158.67" r="1.05" fill="#ffbb78" opacity="1"/>
<circle cx="629.36" cy="165.69" r="1.05" fill="#ffbb78" opacity="1"/>
<circle cx="636.81" cy="175.67" r="1.05" fill="#ffbb78" opacity="1"/>
<circle cx="644.25" cy="174.5" r="1.05" fill="#ffbb78" opacity="1"/>
<circle cx="651.7" cy="159.58" r="1.05" fill="#ffbb78" opacity="1"/>
<polyline points="212.3,156.99 219.75,175.95 227.19,151.68 234.64,135.62 242.09,152.63 249.54,174.05 256.98,169.52 264.43,148.74 271.88,163.97 279.33,180.17 286.77,141.39 294.22,151.55 301.67,180.91 309.12,167.08 316.56,163.07 324.01,189.82 331.46,157.68 338.91,177.4 346.35,163.51 353.8,178.16 361.25,162.69 368.7,162.55 376.14,158.23 383.59,159.21 391.04,186.56 398.49,167.67 405.93,149.32 413.38,194.22 420.83,192.69 428.28,153.87 435.72,176.12 443.17,160.98 450.62,179.87 458.07,134.6 465.51,148.92 472.96,169.47 480.41,127.88 487.86,156.86 495.3,162.09 502.75,143.68 510.2,152.53 517.65,149.51 525.09,163.01 532.54,157.73 539.99,167.57 547.44,158.98 554.88,166.4 562.33,159.67 569.78,178.02 577.23,145.07 584.67,155.64 592.12,149.09 599.57,165.66 607.02,151.99 614.46,151.18 621.91,154.44 629.36,167.41 636.81,170.9 644.25,152.05 651.7,183.47" fill="none" stroke="#2ca02c" stroke-width="0.95" stroke-linejoin="round" opacity="1"/>
<circle cx="212.3" cy="156.99" r="1.05" fill="#2ca02c" opacity="1"/>
<circle cx="219.75" cy="175.95" r="1.05" fill="#2ca02c" opacity="1"/>
<circle cx="227.19" cy="151.68" r="1.05" fill="#2ca02c" opacity="1"/>
<circle cx="234.64" cy="135.62" r="1.05" fill="#2ca02c" opacity="1"/>
<circle cx="242.09" cy="152.63" r="1.05" fill="#2ca02c" opacity="1"/>
<circle cx="249.54" cy="174.05" r="1.05" fill="#2ca02c" opacity="1"/>
<circle cx="256.98" cy="169.52" r="1.05" fill="#2ca02c" opacity="1"/>
<circle cx="264.43" cy="148.74" r="1.05" fill="#2ca02c" opacity="1"/>
<circle cx="271.88" cy="163.97" r="1.05" fill="#2ca02c" opacity="1"/>
<circle cx="279.33" cy="180.17" r="1.05" fill="#2ca02c" opacity="1"/>
<circle cx="286.77" cy="141.39" r="1.05" fill="#2ca02c" opacity="1"/>
<circle cx="294.22" cy="151.55" r="1.05" fill="#2ca02c" opacity="1"/>
<circle cx="301.67" cy="180.91" r="1.05" fill="#2ca02c" opacity="1"/>
<circle cx="309.12" cy="167.08" r="1.05" fill="#2ca02c" opacity="1"/>
<circle cx="316.56" cy="163.07" r="1.05" fill="#2ca02c" opacity="1"/>
<circle cx="324.01" cy="189.82" r="1.05" fill="#2ca02c" opacity="1"/>
<circle cx="331.46" cy="157.68" r="1.05" fill="#2ca02c" opacity="1"/>
<circle cx="338.91" cy="177.4" r="1.05" fill="#2ca02c" opacity="1"/>
<circle cx="346.35" cy="163.51" r="1.05" fill="#2ca02c" opacity="1"/>
<circle cx="353.8" cy="178.16" r="1.05" fill="#2ca02c" opacity="1"/>
<circle cx="361.25" cy="162.69" r="1.05" fill="#2ca02c" opacity="1"/>
<circle cx="368.7" cy="162.55" r="1.05" fill="#2ca02c" opacity="1"/>
<circle cx="376.14" cy="158.23" r="1.05" fill="#2ca02c" opacity="1"/>
<circle cx="383.59" cy="159.21" r="1.05" fill="#2ca02c" opacity="1"/>
<circle cx="391.04" cy="186.56" r="1.05" fill="#2ca02c" opacity="1"/>
<circle cx="398.49" cy="167.67" r="1.05" fill="#2ca02c" opacity="1"/>
<circle cx="405.93" cy="149.32" r="1.05" fill="#2ca02c" opacity="1"/>
<circle cx="413.38" cy="194.22" r="1.05" fill="#2ca02c" opacity="1"/>
<circle cx="420.83" cy="192.69" r="1.05" fill="#2ca02c" opacity="1"/>
<circle cx="428.28" cy="153.87" r="1.05" fill="#2ca02c" opacity="1"/>
<circle cx="435.72" cy="176.12" r="1.05" fill="#2ca02c" opacity="1"/>
<circle cx="443.17" cy="160.98" r="1.05" fill="#2ca02c" opacity="1"/>
<circle cx="450.62" cy="179.87" r="1.05" fill="#2ca02c" opacity="1"/>
<circle cx="458.07" cy="134.6" r="1.05" fill="#2ca02c" opacity="1"/>
<circle cx="465.51" cy="148.92" r="1.05" fill="#2ca02c" opacity="1"/>
<circle cx="472.96" cy="169.47" r="1.05" fill="#2ca02c" opacity="1"/>
<circle cx="480.41" cy="127.88" r="1.05" fill="#2ca02c" opacity="1"/>
<circle cx="487.86" cy="156.86" r="1.05" fill="#2ca02c" opacity="1"/>
<circle cx="495.3" cy="162.09" r="1.05" fill="#2ca02c" opacity="1"/>
<circle cx="502.75" cy="143.68" r="1.05" fill="#2ca02c" opacity="1"/>
<circle cx="510.2" cy="152.53" r="1.05" fill="#2ca02c" opacity="1"/>
<circle cx="517.65" cy="149.51" r="1.05" fill="#2ca02c" opacity="1"/>
<circle cx="525.09" cy="163.01" r="1.05" fill="#2ca02c" opacity="1"/>
<circle cx="532.54" cy="157.73" r="1.05" fill="#2ca02c" opacity="1"/>
<circle cx="539.99" cy="167.57" r="1.05" fill="#2ca02c" opacity="1"/>
<circle cx="547.44" cy="158.98" r="1.05" fill="#2ca02c" opacity="1"/>
<circle cx="554.88" cy="166.4" r="1.05" fill="#2ca02c" opacity="1"/>
<circle cx="562.33" cy="159.67" r="1.05" fill="#2ca02c" opacity="1"/>
<circle cx="569.78" cy="178.02" r="1.05" fill="#2ca02c" opacity="1"/>
<circle cx="577.23" cy="145.07" r="1.05" fill="#2ca02c" opacity="1"/>
<circle cx="584.67" cy="155.64" r="1.05" fill="#2ca02c" opacity="1"/>
<circle cx="592.12" cy="149.09" r="1.05" fill="#2ca02c" opacity="1"/>
<circle cx="599.57" cy="165.66" r="1.05" fill="#2ca02c" opacity="1"/>
<circle cx="607.02" cy="151.99" r="1.05" fill="#2ca02c" opacity="1"/>
<circle cx="614.46" cy="151.18" r="1.05" fill="#2ca02c" opacity="1"/>
<circle cx="621.91" cy="154.44" r="1.05" fill="#2ca02c" opacity="1"/>
<circle cx="629.36" cy="167.41" r="1.05" fill="#2ca02c" opacity="1"/>
<circle cx="636.81" cy="170.9" r="1.05" fill="#2ca02c" opacity="1"/>
<circle cx="644.25" cy="152.05" r="1.05" fill="#2ca02c" opacity="1"/>
<circle cx="651.7" cy="183.47" r="1.05" fill="#2ca02c" opacity="1"/>
<polyline points="212.3,155.93 219.75,166.58 227.19,151.03 234.64,134.64 242.09,154.22 249.54,162.98 256.98,182.23 264.43,163.96 271.88,166.35 279.33,157.54 286.77,133.63 294.22,159.05 301.67,157.08 309.12,167.73 316.56,141.4 324.01,160.08 331.46,136.5 338.91,162.87 346.35,152.09 353.8,165.09 361.25,156.84 368.7,170.21 376.14,167.48 383.59,159.7 391.04,184.68 398.49,163.56 405.93,133.63 413.38,159.82 420.83,147.27 428.28,166.49 435.72,160.26 443.17,182.51 450.62,180.99 458.07,169.11 465.51,143.5 472.96,166.44 480.41,143.26 487.86,193.19 495.3,166.71 502.75,159.14 510.2,172.71 517.65,184.85 525.09,174.04 532.54,170.47 539.99,180.23 547.44,170.93 554.88,146.22 562.33,142.33 569.78,160.75 577.23,144.4 584.67,150.65 592.12,142.02 599.57,178.03 607.02,152.68 614.46,150.58 621.91,159.33 629.36,149.09 636.81,158.81 644.25,160.35 651.7,174.18" fill="none" stroke="#98df8a" stroke-width="0.95" stroke-linejoin="round" opacity="1"/>
<circle cx="212.3" cy="155.93" r="1.05" fill="#98df8a" opacity="1"/>
<circle cx="219.75" cy="166.58" r="1.05" fill="#98df8a" opacity="1"/>
<circle cx="227.19" cy="151.03" r="1.05" fill="#98df8a" opacity="1"/>
<circle cx="234.64" cy="134.64" r="1.05" fill="#98df8a" opacity="1"/>
<circle cx="242.09" cy="154.22" r="1.05" fill="#98df8a" opacity="1"/>
<circle cx="249.54" cy="162.98" r="1.05" fill="#98df8a" opacity="1"/>
<circle cx="256.98" cy="182.23" r="1.05" fill="#98df8a" opacity="1"/>
<circle cx="264.43" cy="163.96" r="1.05" fill="#98df8a" opacity="1"/>
<circle cx="271.88" cy="166.35" r="1.05" fill="#98df8a" opacity="1"/>
<circle cx="279.33" cy="157.54" r="1.05" fill="#98df8a" opacity="1"/>
<circle cx="286.77" cy="133.63" r="1.05" fill="#98df8a" opacity="1"/>
<circle cx="294.22" cy="159.05" r="1.05" fill="#98df8a" opacity="1"/>
<circle cx="301.67" cy="157.08" r="1.05" fill="#98df8a" opacity="1"/>
<circle cx="309.12" cy="167.73" r="1.05" fill="#98df8a" opacity="1"/>
<circle cx="316.56" cy="141.4" r="1.05" fill="#98df8a" opacity="1"/>
<circle cx="324.01" cy="160.08" r="1.05" fill="#98df8a" opacity="1"/>
<circle cx="331.46" cy="136.5" r="1.05" fill="#98df8a" opacity="1"/>
<circle cx="338.91" cy="162.87" r="1.05" fill="#98df8a" opacity="1"/>
<circle cx="346.35" cy="152.09" r="1.05" fill="#98df8a" opacity="1"/>
<circle cx="353.8" cy="165.09" r="1.05" fill="#98df8a" opacity="1"/>
<circle cx="361.25" cy="156.84" r="1.05" fill="#98df8a" opacity="1"/>
<circle cx="368.7" cy="170.21" r="1.05" fill="#98df8a" opacity="1"/>
<circle cx="376.14" cy="167.48" r="1.05" fill="#98df8a" opacity="1"/>
<circle cx="383.59" cy="159.7" r="1.05" fill="#98df8a" opacity="1"/>
<circle cx="391.04" cy="184.68" r="1.05" fill="#98df8a" opacity="1"/>
<circle cx="398.49" cy="163.56" r="1.05" fill="#98df8a" opacity="1"/>
<circle cx="405.93" cy="133.63" r="1.05" fill="#98df8a" opacity="1"/>
<circle cx="413.38" cy="159.82" r="1.05" fill="#98df8a" opacity="1"/>
<circle cx="420.83" cy="147.27" r="1.05" fill="#98df8a" opacity="1"/>
<circle cx="428.28" cy="166.49" r="1.05" fill="#98df8a" opacity="1"/>
<circle cx="435.72" cy="160.26" r="1.05" fill="#98df8a" opacity="1"/>
<circle cx="443.17" cy="182.51" r="1.05" fill="#98df8a" opacity="1"/>
<circle cx="450.62" cy="180.99" r="1.05" fill="#98df8a" opacity="1"/>
<circle cx="458.07" cy="169.11" r="1.05" fill="#98df8a" opacity="1"/>
<circle cx="465.51" cy="143.5" r="1.05" fill="#98df8a" opacity="1"/>
<circle cx="472.96" cy="166.44" r="1.05" fill="#98df8a" opacity="1"/>
<circle cx="480.41" cy="143.26" r="1.05" fill="#98df8a" opacity="1"/>
<circle cx="487.86" cy="193.19" r="1.05" fill="#98df8a" opacity="1"/>
<circle cx="495.3" cy="166.71" r="1.05" fill="#98df8a" opacity="1"/>
<circle cx="502.75" cy="159.14" r="1.05" fill="#98df8a" opacity="1"/>
<circle cx="510.2" cy="172.71" r="1.05" fill="#98df8a" opacity="1"/>
<circle cx="517.65" cy="184.85" r="1.05" fill="#98df8a" opacity="1"/>
<circle cx="525.09" cy="174.04" r="1.05" fill="#98df8a" opacity="1"/>
<circle cx="532.54" cy="170.47" r="1.05" fill="#98df8a" opacity="1"/>
<circle cx="539.99" cy="180.23" r="1.05" fill="#98df8a" opacity="1"/>
<circle cx="547.44" cy="170.93" r="1.05" fill="#98df8a" opacity="1"/>
<circle cx="554.88" cy="146.22" r="1.05" fill="#98df8a" opacity="1"/>
<circle cx="562.33" cy="142.33" r="1.05" fill="#98df8a" opacity="1"/>
<circle cx="569.78" cy="160.75" r="1.05" fill="#98df8a" opacity="1"/>
<circle cx="577.23" cy="144.4" r="1.05" fill="#98df8a" opacity="1"/>
<circle cx="584.67" cy="150.65" r="1.05" fill="#98df8a" opacity="1"/>
<circle cx="592.12" cy="142.02" r="1.05" fill="#98df8a" opacity="1"/>
<circle cx="599.57" cy="178.03" r="1.05" fill="#98df8a" opacity="1"/>
<circle cx="607.02" cy="152.68" r="1.05" fill="#98df8a" opacity="1"/>
<circle cx="614.46" cy="150.58" r="1.05" fill="#98df8a" opacity="1"/>
<circle cx="621.91" cy="159.33" r="1.05" fill="#98df8a" opacity="1"/>
<circle cx="629.36" cy="149.09" r="1.05" fill="#98df8a" opacity="1"/>
<circle cx="636.81" cy="158.81" r="1.05" fill="#98df8a" opacity="1"/>
<circle cx="644.25" cy="160.35" r="1.05" fill="#98df8a" opacity="1"/>
<circle cx="651.7" cy="174.18" r="1.05" fill="#98df8a" opacity="1"/>
<polyline points="212.3,189.82 219.75,195.08 227.19,172.88 234.64,153.53 242.09,160.25 249.54,164.96 256.98,173.7 264.43,151.29 271.88,183.36 279.33,174.75 286.77,150.58 294.22,161.54 301.67,182.81 309.12,174.29 316.56,161.91 324.01,177.71 331.46,152.21 338.91,178.61 346.35,156.71 353.8,164.59 361.25,130.75 368.7,149.09 376.14,140.39 383.59,147.15 391.04,163.62 398.49,170.48 405.93,161.69 413.38,201.48 420.83,167.25 428.28,171.21 435.72,163.36 443.17,187.88 450.62,166.61 458.07,157.35 465.51,162.63 472.96,166.72 480.41,133.19 487.86,182.3 495.3,171.35 502.75,153.4 510.2,153.46 517.65,167.89 525.09,173.64 532.54,156.98 539.99,152.47 547.44,150.34 554.88,154.93 562.33,153.91 569.78,172.87 577.23,141.53 584.67,146.42 592.12,138.22 599.57,181.38 607.02,161.36 614.46,158.31 621.91,164.62 629.36,161.15 636.81,171.73 644.25,157.49 651.7,179.66" fill="none" stroke="#d62728" stroke-width="0.95" stroke-linejoin="round" opacity="1"/>
<circle cx="212.3" cy="189.82" r="1.05" fill="#d62728" opacity="1"/>
<circle cx="219.75" cy="195.08" r="1.05" fill="#d62728" opacity="1"/>
<circle cx="227.19" cy="172.88" r="1.05" fill="#d62728" opacity="1"/>
<circle cx="234.64" cy="153.53" r="1.05" fill="#d62728" opacity="1"/>
<circle cx="242.09" cy="160.25" r="1.05" fill="#d62728" opacity="1"/>
<circle cx="249.54" cy="164.96" r="1.05" fill="#d62728" opacity="1"/>
<circle cx="256.98" cy="173.7" r="1.05" fill="#d62728" opacity="1"/>
<circle cx="264.43" cy="151.29" r="1.05" fill="#d62728" opacity="1"/>
<circle cx="271.88" cy="183.36" r="1.05" fill="#d62728" opacity="1"/>
<circle cx="279.33" cy="174.75" r="1.05" fill="#d62728" opacity="1"/>
<circle cx="286.77" cy="150.58" r="1.05" fill="#d62728" opacity="1"/>
<circle cx="294.22" cy="161.54" r="1.05" fill="#d62728" opacity="1"/>
<circle cx="301.67" cy="182.81" r="1.05" fill="#d62728" opacity="1"/>
<circle cx="309.12" cy="174.29" r="1.05" fill="#d62728" opacity="1"/>
<circle cx="316.56" cy="161.91" r="1.05" fill="#d62728" opacity="1"/>
<circle cx="324.01" cy="177.71" r="1.05" fill="#d62728" opacity="1"/>
<circle cx="331.46" cy="152.21" r="1.05" fill="#d62728" opacity="1"/>
<circle cx="338.91" cy="178.61" r="1.05" fill="#d62728" opacity="1"/>
<circle cx="346.35" cy="156.71" r="1.05" fill="#d62728" opacity="1"/>
<circle cx="353.8" cy="164.59" r="1.05" fill="#d62728" opacity="1"/>
<circle cx="361.25" cy="130.75" r="1.05" fill="#d62728" opacity="1"/>
<circle cx="368.7" cy="149.09" r="1.05" fill="#d62728" opacity="1"/>
<circle cx="376.14" cy="140.39" r="1.05" fill="#d62728" opacity="1"/>
<circle cx="383.59" cy="147.15" r="1.05" fill="#d62728" opacity="1"/>
<circle cx="391.04" cy="163.62" r="1.05" fill="#d62728" opacity="1"/>
<circle cx="398.49" cy="170.48" r="1.05" fill="#d62728" opacity="1"/>
<circle cx="405.93" cy="161.69" r="1.05" fill="#d62728" opacity="1"/>
<circle cx="413.38" cy="201.48" r="1.05" fill="#d62728" opacity="1"/>
<circle cx="420.83" cy="167.25" r="1.05" fill="#d62728" opacity="1"/>
<circle cx="428.28" cy="171.21" r="1.05" fill="#d62728" opacity="1"/>
<circle cx="435.72" cy="163.36" r="1.05" fill="#d62728" opacity="1"/>
<circle cx="443.17" cy="187.88" r="1.05" fill="#d62728" opacity="1"/>
<circle cx="450.62" cy="166.61" r="1.05" fill="#d62728" opacity="1"/>
<circle cx="458.07" cy="157.35" r="1.05" fill="#d62728" opacity="1"/>
<circle cx="465.51" cy="162.63" r="1.05" fill="#d62728" opacity="1"/>
<circle cx="472.96" cy="166.72" r="1.05" fill="#d62728" opacity="1"/>
<circle cx="480.41" cy="133.19" r="1.05" fill="#d62728" opacity="1"/>
<circle cx="487.86" cy="182.3" r="1.05" fill="#d62728" opacity="1"/>
<circle cx="495.3" cy="171.35" r="1.05" fill="#d62728" opacity="1"/>
<circle cx="502.75" cy="153.4" r="1.05" fill="#d62728" opacity="1"/>
<circle cx="510.2" cy="153.46" r="1.05" fill="#d62728" opacity="1"/>
<circle cx="517.65" cy="167.89" r="1.05" fill="#d62728" opacity="1"/>
<circle cx="525.09" cy="173.64" r="1.05" fill="#d62728" opacity="1"/>
<circle cx="532.54" cy="156.98" r="1.05" fill="#d62728" opacity="1"/>
<circle cx="539.99" cy="152.47" r="1.05" fill="#d62728" opacity="1"/>
<circle cx="547.44" cy="150.34" r="1.05" fill="#d62728" opacity="1"/>
<circle cx="554.88" cy="154.93" r="1.05" fill="#d62728" opacity="1"/>
<circle cx="562.33" cy="153.91" r="1.05" fill="#d62728" opacity="1"/>
<circle cx="569.78" cy="172.87" r="1.05" fill="#d62728" opacity="1"/>
<circle cx="577.23" cy="141.53" r="1.05" fill="#d62728" opacity="1"/>
<circle cx="584.67" cy="146.42" r="1.05" fill="#d62728" opacity="1"/>
<circle cx="592.12" cy="138.22" r="1.05" fill="#d62728" opacity="1"/>
<circle cx="599.57" cy="181.38" r="1.05" fill="#d62728" opacity="1"/>
<circle cx="607.02" cy="161.36" r="1.05" fill="#d62728" opacity="1"/>
<circle cx="614.46" cy="158.31" r="1.05" fill="#d62728" opacity="1"/>
<circle cx="621.91" cy="164.62" r="1.05" fill="#d62728" opacity="1"/>
<circle cx="629.36" cy="161.15" r="1.05" fill="#d62728" opacity="1"/>
<circle cx="636.81" cy="171.73" r="1.05" fill="#d62728" opacity="1"/>
<circle cx="644.25" cy="157.49" r="1.05" fill="#d62728" opacity="1"/>
<circle cx="651.7" cy="179.66" r="1.05" fill="#d62728" opacity="1"/>
<polyline points="212.3,186.66 219.75,190.51 227.19,188.69 234.64,178.16 242.09,177.15 249.54,174.37 256.98,182.5 264.43,172.41 271.88,186.95 279.33,171.37 286.77,152.98 294.22,160.31 301.67,160.16 309.12,154.92 316.56,157.04 324.01,161.54 331.46,166.95 338.91,168.35 346.35,175.85 353.8,175.58 361.25,149.33 368.7,179.17 376.14,187.88 383.59,161.74 391.04,195.77 398.49,203.34 405.93,163.62 413.38,167.14 420.83,162.15 428.28,162.65 435.72,156.71 443.17,153.08 450.62,162.12 458.07,165.1 465.51,146.96 472.96,173.74 480.41,152.79 487.86,190.69 495.3,160.85 502.75,152.63 510.2,167.48 517.65,164.7 525.09,141.78 532.54,153.07 539.99,145.65 547.44,149.09 554.88,159.83 562.33,147.66 569.78,166.9 577.23,147.34 584.67,145.68 592.12,141.83 599.57,186.45 607.02,164.12 614.46,170.92 621.91,167.88 629.36,174.59 636.81,194.63 644.25,182.04 651.7,183.68" fill="none" stroke="#ff9896" stroke-width="0.95" stroke-linejoin="round" opacity="1"/>
<circle cx="212.3" cy="186.66" r="1.05" fill="#ff9896" opacity="1"/>
<circle cx="219.75" cy="190.51" r="1.05" fill="#ff9896" opacity="1"/>
<circle cx="227.19" cy="188.69" r="1.05" fill="#ff9896" opacity="1"/>
<circle cx="234.64" cy="178.16" r="1.05" fill="#ff9896" opacity="1"/>
<circle cx="242.09" cy="177.15" r="1.05" fill="#ff9896" opacity="1"/>
<circle cx="249.54" cy="174.37" r="1.05" fill="#ff9896" opacity="1"/>
<circle cx="256.98" cy="182.5" r="1.05" fill="#ff9896" opacity="1"/>
<circle cx="264.43" cy="172.41" r="1.05" fill="#ff9896" opacity="1"/>
<circle cx="271.88" cy="186.95" r="1.05" fill="#ff9896" opacity="1"/>
<circle cx="279.33" cy="171.37" r="1.05" fill="#ff9896" opacity="1"/>
<circle cx="286.77" cy="152.98" r="1.05" fill="#ff9896" opacity="1"/>
<circle cx="294.22" cy="160.31" r="1.05" fill="#ff9896" opacity="1"/>
<circle cx="301.67" cy="160.16" r="1.05" fill="#ff9896" opacity="1"/>
<circle cx="309.12" cy="154.92" r="1.05" fill="#ff9896" opacity="1"/>
<circle cx="316.56" cy="157.04" r="1.05" fill="#ff9896" opacity="1"/>
<circle cx="324.01" cy="161.54" r="1.05" fill="#ff9896" opacity="1"/>
<circle cx="331.46" cy="166.95" r="1.05" fill="#ff9896" opacity="1"/>
<circle cx="338.91" cy="168.35" r="1.05" fill="#ff9896" opacity="1"/>
<circle cx="346.35" cy="175.85" r="1.05" fill="#ff9896" opacity="1"/>
<circle cx="353.8" cy="175.58" r="1.05" fill="#ff9896" opacity="1"/>
<circle cx="361.25" cy="149.33" r="1.05" fill="#ff9896" opacity="1"/>
<circle cx="368.7" cy="179.17" r="1.05" fill="#ff9896" opacity="1"/>
<circle cx="376.14" cy="187.88" r="1.05" fill="#ff9896" opacity="1"/>
<circle cx="383.59" cy="161.74" r="1.05" fill="#ff9896" opacity="1"/>
<circle cx="391.04" cy="195.77" r="1.05" fill="#ff9896" opacity="1"/>
<circle cx="398.49" cy="203.34" r="1.05" fill="#ff9896" opacity="1"/>
<circle cx="405.93" cy="163.62" r="1.05" fill="#ff9896" opacity="1"/>
<circle cx="413.38" cy="167.14" r="1.05" fill="#ff9896" opacity="1"/>
<circle cx="420.83" cy="162.15" r="1.05" fill="#ff9896" opacity="1"/>
<circle cx="428.28" cy="162.65" r="1.05" fill="#ff9896" opacity="1"/>
<circle cx="435.72" cy="156.71" r="1.05" fill="#ff9896" opacity="1"/>
<circle cx="443.17" cy="153.08" r="1.05" fill="#ff9896" opacity="1"/>
<circle cx="450.62" cy="162.12" r="1.05" fill="#ff9896" opacity="1"/>
<circle cx="458.07" cy="165.1" r="1.05" fill="#ff9896" opacity="1"/>
<circle cx="465.51" cy="146.96" r="1.05" fill="#ff9896" opacity="1"/>
<circle cx="472.96" cy="173.74" r="1.05" fill="#ff9896" opacity="1"/>
<circle cx="480.41" cy="152.79" r="1.05" fill="#ff9896" opacity="1"/>
<circle cx="487.86" cy="190.69" r="1.05" fill="#ff9896" opacity="1"/>
<circle cx="495.3" cy="160.85" r="1.05" fill="#ff9896" opacity="1"/>
<circle cx="502.75" cy="152.63" r="1.05" fill="#ff9896" opacity="1"/>
<circle cx="510.2" cy="167.48" r="1.05" fill="#ff9896" opacity="1"/>
<circle cx="517.65" cy="164.7" r="1.05" fill="#ff9896" opacity="1"/>
<circle cx="525.09" cy="141.78" r="1.05" fill="#ff9896" opacity="1"/>
<circle cx="532.54" cy="153.07" r="1.05" fill="#ff9896" opacity="1"/>
<circle cx="539.99" cy="145.65" r="1.05" fill="#ff9896" opacity="1"/>
<circle cx="547.44" cy="149.09" r="1.05" fill="#ff9896" opacity="1"/>
<circle cx="554.88" cy="159.83" r="1.05" fill="#ff9896" opacity="1"/>
<circle cx="562.33" cy="147.66" r="1.05" fill="#ff9896" opacity="1"/>
<circle cx="569.78" cy="166.9" r="1.05" fill="#ff9896" opacity="1"/>
<circle cx="577.23" cy="147.34" r="1.05" fill="#ff9896" opacity="1"/>
<circle cx="584.67" cy="145.68" r="1.05" fill="#ff9896" opacity="1"/>
<circle cx="592.12" cy="141.83" r="1.05" fill="#ff9896" opacity="1"/>
<circle cx="599.57" cy="186.45" r="1.05" fill="#ff9896" opacity="1"/>
<circle cx="607.02" cy="164.12" r="1.05" fill="#ff9896" opacity="1"/>
<circle cx="614.46" cy="170.92" r="1.05" fill="#ff9896" opacity="1"/>
<circle cx="621.91" cy="167.88" r="1.05" fill="#ff9896" opacity="1"/>
<circle cx="629.36" cy="174.59" r="1.05" fill="#ff9896" opacity="1"/>
<circle cx="636.81" cy="194.63" r="1.05" fill="#ff9896" opacity="1"/>
<circle cx="644.25" cy="182.04" r="1.05" fill="#ff9896" opacity="1"/>
<circle cx="651.7" cy="183.68" r="1.05" fill="#ff9896" opacity="1"/>
<polyline points="212.3,156.27 219.75,189.97 227.19,164.86 234.64,136.84 242.09,174.16 249.54,195.65 256.98,174.41 264.43,150.65 271.88,185.22 279.33,171.26 286.77,134.39 294.22,177.71 301.67,181.97 309.12,159.74 316.56,153.41 324.01,179.32 331.46,188.8 338.91,180.74 346.35,158.96 353.8,176.71 361.25,151.17 368.7,164.06 376.14,153.21 383.59,158.11 391.04,191.64 398.49,170.1 405.93,137.75 413.38,167.8 420.83,164.66 428.28,164.23 435.72,173.61 443.17,158.9 450.62,156.51 458.07,133.95 465.51,136.5 472.96,158.81 480.41,140.13 487.86,177.42 495.3,160.34 502.75,155.07 510.2,157.94 517.65,186.25 525.09,164.64 532.54,169.01 539.99,156.04 547.44,152.77 554.88,151.05 562.33,164.16 569.78,189.02 577.23,164.08 584.67,162.69 592.12,142.54 599.57,169.25 607.02,173.12 614.46,182.17 621.91,160.41 629.36,167.23 636.81,186.33 644.25,178.33 651.7,185.37" fill="none" stroke="#9467bd" stroke-width="0.95" stroke-linejoin="round" opacity="1"/>
<circle cx="212.3" cy="156.27" r="1.05" fill="#9467bd" opacity="1"/>
<circle cx="219.75" cy="189.97" r="1.05" fill="#9467bd" opacity="1"/>
<circle cx="227.19" cy="164.86" r="1.05" fill="#9467bd" opacity="1"/>
<circle cx="234.64" cy="136.84" r="1.05" fill="#9467bd" opacity="1"/>
<circle cx="242.09" cy="174.16" r="1.05" fill="#9467bd" opacity="1"/>
<circle cx="249.54" cy="195.65" r="1.05" fill="#9467bd" opacity="1"/>
<circle cx="256.98" cy="174.41" r="1.05" fill="#9467bd" opacity="1"/>
<circle cx="264.43" cy="150.65" r="1.05" fill="#9467bd" opacity="1"/>
<circle cx="271.88" cy="185.22" r="1.05" fill="#9467bd" opacity="1"/>
<circle cx="279.33" cy="171.26" r="1.05" fill="#9467bd" opacity="1"/>
<circle cx="286.77" cy="134.39" r="1.05" fill="#9467bd" opacity="1"/>
<circle cx="294.22" cy="177.71" r="1.05" fill="#9467bd" opacity="1"/>
<circle cx="301.67" cy="181.97" r="1.05" fill="#9467bd" opacity="1"/>
<circle cx="309.12" cy="159.74" r="1.05" fill="#9467bd" opacity="1"/>
<circle cx="316.56" cy="153.41" r="1.05" fill="#9467bd" opacity="1"/>
<circle cx="324.01" cy="179.32" r="1.05" fill="#9467bd" opacity="1"/>
<circle cx="331.46" cy="188.8" r="1.05" fill="#9467bd" opacity="1"/>
<circle cx="338.91" cy="180.74" r="1.05" fill="#9467bd" opacity="1"/>
<circle cx="346.35" cy="158.96" r="1.05" fill="#9467bd" opacity="1"/>
<circle cx="353.8" cy="176.71" r="1.05" fill="#9467bd" opacity="1"/>
<circle cx="361.25" cy="151.17" r="1.05" fill="#9467bd" opacity="1"/>
<circle cx="368.7" cy="164.06" r="1.05" fill="#9467bd" opacity="1"/>
<circle cx="376.14" cy="153.21" r="1.05" fill="#9467bd" opacity="1"/>
<circle cx="383.59" cy="158.11" r="1.05" fill="#9467bd" opacity="1"/>
<circle cx="391.04" cy="191.64" r="1.05" fill="#9467bd" opacity="1"/>
<circle cx="398.49" cy="170.1" r="1.05" fill="#9467bd" opacity="1"/>
<circle cx="405.93" cy="137.75" r="1.05" fill="#9467bd" opacity="1"/>
<circle cx="413.38" cy="167.8" r="1.05" fill="#9467bd" opacity="1"/>
<circle cx="420.83" cy="164.66" r="1.05" fill="#9467bd" opacity="1"/>
<circle cx="428.28" cy="164.23" r="1.05" fill="#9467bd" opacity="1"/>
<circle cx="435.72" cy="173.61" r="1.05" fill="#9467bd" opacity="1"/>
<circle cx="443.17" cy="158.9" r="1.05" fill="#9467bd" opacity="1"/>
<circle cx="450.62" cy="156.51" r="1.05" fill="#9467bd" opacity="1"/>
<circle cx="458.07" cy="133.95" r="1.05" fill="#9467bd" opacity="1"/>
<circle cx="465.51" cy="136.5" r="1.05" fill="#9467bd" opacity="1"/>
<circle cx="472.96" cy="158.81" r="1.05" fill="#9467bd" opacity="1"/>
<circle cx="480.41" cy="140.13" r="1.05" fill="#9467bd" opacity="1"/>
<circle cx="487.86" cy="177.42" r="1.05" fill="#9467bd" opacity="1"/>
<circle cx="495.3" cy="160.34" r="1.05" fill="#9467bd" opacity="1"/>
<circle cx="502.75" cy="155.07" r="1.05" fill="#9467bd" opacity="1"/>
<circle cx="510.2" cy="157.94" r="1.05" fill="#9467bd" opacity="1"/>
<circle cx="517.65" cy="186.25" r="1.05" fill="#9467bd" opacity="1"/>
<circle cx="525.09" cy="164.64" r="1.05" fill="#9467bd" opacity="1"/>
<circle cx="532.54" cy="169.01" r="1.05" fill="#9467bd" opacity="1"/>
<circle cx="539.99" cy="156.04" r="1.05" fill="#9467bd" opacity="1"/>
<circle cx="547.44" cy="152.77" r="1.05" fill="#9467bd" opacity="1"/>
<circle cx="554.88" cy="151.05" r="1.05" fill="#9467bd" opacity="1"/>
<circle cx="562.33" cy="164.16" r="1.05" fill="#9467bd" opacity="1"/>
<circle cx="569.78" cy="189.02" r="1.05" fill="#9467bd" opacity="1"/>
<circle cx="577.23" cy="164.08" r="1.05" fill="#9467bd" opacity="1"/>
<circle cx="584.67" cy="162.69" r="1.05" fill="#9467bd" opacity="1"/>
<circle cx="592.12" cy="142.54" r="1.05" fill="#9467bd" opacity="1"/>
<circle cx="599.57" cy="169.25" r="1.05" fill="#9467bd" opacity="1"/>
<circle cx="607.02" cy="173.12" r="1.05" fill="#9467bd" opacity="1"/>
<circle cx="614.46" cy="182.17" r="1.05" fill="#9467bd" opacity="1"/>
<circle cx="621.91" cy="160.41" r="1.05" fill="#9467bd" opacity="1"/>
<circle cx="629.36" cy="167.23" r="1.05" fill="#9467bd" opacity="1"/>
<circle cx="636.81" cy="186.33" r="1.05" fill="#9467bd" opacity="1"/>
<circle cx="644.25" cy="178.33" r="1.05" fill="#9467bd" opacity="1"/>
<circle cx="651.7" cy="185.37" r="1.05" fill="#9467bd" opacity="1"/>
<polyline points="212.3,157.36 219.75,179.65 227.19,167.84 234.64,160.02 242.09,183.99 249.54,177.1 256.98,179.43 264.43,159.48 271.88,177.24 279.33,169.5 286.77,147.81 294.22,183.99 301.67,183.05 309.12,172.92 316.56,172.41 324.01,163.53 331.46,185.42 338.91,179.25 346.35,167.9 353.8,174.7 361.25,149.8 368.7,156.08 376.14,160.65 383.59,171.41 391.04,173.38 398.49,156.86 405.93,141.58 413.38,183.38 420.83,161.81 428.28,171.43 435.72,159.94 443.17,180.75 450.62,157.87 458.07,165.57 465.51,141.44 472.96,171.8 480.41,140.01 487.86,170.95 495.3,162.39 502.75,154.19 510.2,150.1 517.65,180.05 525.09,140.39 532.54,147.15 539.99,141.4 547.44,155.1 554.88,161.28 562.33,151.49 569.78,184.7 577.23,150.49 584.67,148.71 592.12,147.18 599.57,183.41 607.02,183.99 614.46,166.19 621.91,182.04 629.36,173.07 636.81,161.72 644.25,169.94 651.7,194.89" fill="none" stroke="#c5b0d5" stroke-width="0.95" stroke-linejoin="round" opacity="1"/>
<circle cx="212.3" cy="157.36" r="1.05" fill="#c5b0d5" opacity="1"/>
<circle cx="219.75" cy="179.65" r="1.05" fill="#c5b0d5" opacity="1"/>
<circle cx="227.19" cy="167.84" r="1.05" fill="#c5b0d5" opacity="1"/>
<circle cx="234.64" cy="160.02" r="1.05" fill="#c5b0d5" opacity="1"/>
<circle cx="242.09" cy="183.99" r="1.05" fill="#c5b0d5" opacity="1"/>
<circle cx="249.54" cy="177.1" r="1.05" fill="#c5b0d5" opacity="1"/>
<circle cx="256.98" cy="179.43" r="1.05" fill="#c5b0d5" opacity="1"/>
<circle cx="264.43" cy="159.48" r="1.05" fill="#c5b0d5" opacity="1"/>
<circle cx="271.88" cy="177.24" r="1.05" fill="#c5b0d5" opacity="1"/>
<circle cx="279.33" cy="169.5" r="1.05" fill="#c5b0d5" opacity="1"/>
<circle cx="286.77" cy="147.81" r="1.05" fill="#c5b0d5" opacity="1"/>
<circle cx="294.22" cy="183.99" r="1.05" fill="#c5b0d5" opacity="1"/>
<circle cx="301.67" cy="183.05" r="1.05" fill="#c5b0d5" opacity="1"/>
<circle cx="309.12" cy="172.92" r="1.05" fill="#c5b0d5" opacity="1"/>
<circle cx="316.56" cy="172.41" r="1.05" fill="#c5b0d5" opacity="1"/>
<circle cx="324.01" cy="163.53" r="1.05" fill="#c5b0d5" opacity="1"/>
<circle cx="331.46" cy="185.42" r="1.05" fill="#c5b0d5" opacity="1"/>
<circle cx="338.91" cy="179.25" r="1.05" fill="#c5b0d5" opacity="1"/>
<circle cx="346.35" cy="167.9" r="1.05" fill="#c5b0d5" opacity="1"/>
<circle cx="353.8" cy="174.7" r="1.05" fill="#c5b0d5" opacity="1"/>
<circle cx="361.25" cy="149.8" r="1.05" fill="#c5b0d5" opacity="1"/>
<circle cx="368.7" cy="156.08" r="1.05" fill="#c5b0d5" opacity="1"/>
<circle cx="376.14" cy="160.65" r="1.05" fill="#c5b0d5" opacity="1"/>
<circle cx="383.59" cy="171.41" r="1.05" fill="#c5b0d5" opacity="1"/>
<circle cx="391.04" cy="173.38" r="1.05" fill="#c5b0d5" opacity="1"/>
<circle cx="398.49" cy="156.86" r="1.05" fill="#c5b0d5" opacity="1"/>
<circle cx="405.93" cy="141.58" r="1.05" fill="#c5b0d5" opacity="1"/>
<circle cx="413.38" cy="183.38" r="1.05" fill="#c5b0d5" opacity="1"/>
<circle cx="420.83" cy="161.81" r="1.05" fill="#c5b0d5" opacity="1"/>
<circle cx="428.28" cy="171.43" r="1.05" fill="#c5b0d5" opacity="1"/>
<circle cx="435.72" cy="159.94" r="1.05" fill="#c5b0d5" opacity="1"/>
<circle cx="443.17" cy="180.75" r="1.05" fill="#c5b0d5" opacity="1"/>
<circle cx="450.62" cy="157.87" r="1.05" fill="#c5b0d5" opacity="1"/>
<circle cx="458.07" cy="165.57" r="1.05" fill="#c5b0d5" opacity="1"/>
<circle cx="465.51" cy="141.44" r="1.05" fill="#c5b0d5" opacity="1"/>
<circle cx="472.96" cy="171.8" r="1.05" fill="#c5b0d5" opacity="1"/>
<circle cx="480.41" cy="140.01" r="1.05" fill="#c5b0d5" opacity="1"/>
<circle cx="487.86" cy="170.95" r="1.05" fill="#c5b0d5" opacity="1"/>
<circle cx="495.3" cy="162.39" r="1.05" fill="#c5b0d5" opacity="1"/>
<circle cx="502.75" cy="154.19" r="1.05" fill="#c5b0d5" opacity="1"/>
<circle cx="510.2" cy="150.1" r="1.05" fill="#c5b0d5" opacity="1"/>
<circle cx="517.65" cy="180.05" r="1.05" fill="#c5b0d5" opacity="1"/>
<circle cx="525.09" cy="140.39" r="1.05" fill="#c5b0d5" opacity="1"/>
<circle cx="532.54" cy="147.15" r="1.05" fill="#c5b0d5" opacity="1"/>
<circle cx="539.99" cy="141.4" r="1.05" fill="#c5b0d5" opacity="1"/>
<circle cx="547.44" cy="155.1" r="1.05" fill="#c5b0d5" opacity="1"/>
<circle cx="554.88" cy="161.28" r="1.05" fill="#c5b0d5" opacity="1"/>
<circle cx="562.33" cy="151.49" r="1.05" fill="#c5b0d5" opacity="1"/>
<circle cx="569.78" cy="184.7" r="1.05" fill="#c5b0d5" opacity="1"/>
<circle cx="577.23" cy="150.49" r="1.05" fill="#c5b0d5" opacity="1"/>
<circle cx="584.67" cy="148.71" r="1.05" fill="#c5b0d5" opacity="1"/>
<circle cx="592.12" cy="147.18" r="1.05" fill="#c5b0d5" opacity="1"/>
<circle cx="599.57" cy="183.41" r="1.05" fill="#c5b0d5" opacity="1"/>
<circle cx="607.02" cy="183.99" r="1.05" fill="#c5b0d5" opacity="1"/>
<circle cx="614.46" cy="166.19" r="1.05" fill="#c5b0d5" opacity="1"/>
<circle cx="621.91" cy="182.04" r="1.05" fill="#c5b0d5" opacity="1"/>
<circle cx="629.36" cy="173.07" r="1.05" fill="#c5b0d5" opacity="1"/>
<circle cx="636.81" cy="161.72" r="1.05" fill="#c5b0d5" opacity="1"/>
<circle cx="644.25" cy="169.94" r="1.05" fill="#c5b0d5" opacity="1"/>
<circle cx="651.7" cy="194.89" r="1.05" fill="#c5b0d5" opacity="1"/>
<polyline points="212.3,162.17 219.75,179.21 227.19,172.26 234.64,149.19 242.09,175.78 249.54,189.28 256.98,169.18 264.43,133.63 271.88,172.34 279.33,174.38 286.77,145.89 294.22,180.96 301.67,189.82 309.12,180.1 316.56,165.83 324.01,182.23 331.46,162.8 338.91,168.99 346.35,172.83 353.8,154.63 361.25,131.78 368.7,149.36 376.14,155.49 383.59,166.19 391.04,172.4 398.49,179.3 405.93,142.71 413.38,174.06 420.83,160.39 428.28,159.02 435.72,180.35 443.17,176.06 450.62,138.44 458.07,166.28 465.51,169.4 472.96,178.81 480.41,146 487.86,175.85 495.3,157.51 502.75,139.46 510.2,154.69 517.65,159.66 525.09,159.32 532.54,152.51 539.99,159.37 547.44,170.74 554.88,162.38 562.33,180.31 569.78,173.01 577.23,139.35 584.67,138.44 592.12,134.64 599.57,156.45 607.02,173.28 614.46,158.6 621.91,180.02 629.36,187.88 636.81,186.77 644.25,157.36 651.7,172.44" fill="none" stroke="#8c564b" stroke-width="0.95" stroke-linejoin="round" opacity="1"/>
<circle cx="212.3" cy="162.17" r="1.05" fill="#8c564b" opacity="1"/>
<circle cx="219.75" cy="179.21" r="1.05" fill="#8c564b" opacity="1"/>
<circle cx="227.19" cy="172.26" r="1.05" fill="#8c564b" opacity="1"/>
<circle cx="234.64" cy="149.19" r="1.05" fill="#8c564b" opacity="1"/>
<circle cx="242.09" cy="175.78" r="1.05" fill="#8c564b" opacity="1"/>
<circle cx="249.54" cy="189.28" r="1.05" fill="#8c564b" opacity="1"/>
<circle cx="256.98" cy="169.18" r="1.05" fill="#8c564b" opacity="1"/>
<circle cx="264.43" cy="133.63" r="1.05" fill="#8c564b" opacity="1"/>
<circle cx="271.88" cy="172.34" r="1.05" fill="#8c564b" opacity="1"/>
<circle cx="279.33" cy="174.38" r="1.05" fill="#8c564b" opacity="1"/>
<circle cx="286.77" cy="145.89" r="1.05" fill="#8c564b" opacity="1"/>
<circle cx="294.22" cy="180.96" r="1.05" fill="#8c564b" opacity="1"/>
<circle cx="301.67" cy="189.82" r="1.05" fill="#8c564b" opacity="1"/>
<circle cx="309.12" cy="180.1" r="1.05" fill="#8c564b" opacity="1"/>
<circle cx="316.56" cy="165.83" r="1.05" fill="#8c564b" opacity="1"/>
<circle cx="324.01" cy="182.23" r="1.05" fill="#8c564b" opacity="1"/>
<circle cx="331.46" cy="162.8" r="1.05" fill="#8c564b" opacity="1"/>
<circle cx="338.91" cy="168.99" r="1.05" fill="#8c564b" opacity="1"/>
<circle cx="346.35" cy="172.83" r="1.05" fill="#8c564b" opacity="1"/>
<circle cx="353.8" cy="154.63" r="1.05" fill="#8c564b" opacity="1"/>
<circle cx="361.25" cy="131.78" r="1.05" fill="#8c564b" opacity="1"/>
<circle cx="368.7" cy="149.36" r="1.05" fill="#8c564b" opacity="1"/>
<circle cx="376.14" cy="155.49" r="1.05" fill="#8c564b" opacity="1"/>
<circle cx="383.59" cy="166.19" r="1.05" fill="#8c564b" opacity="1"/>
<circle cx="391.04" cy="172.4" r="1.05" fill="#8c564b" opacity="1"/>
<circle cx="398.49" cy="179.3" r="1.05" fill="#8c564b" opacity="1"/>
<circle cx="405.93" cy="142.71" r="1.05" fill="#8c564b" opacity="1"/>
<circle cx="413.38" cy="174.06" r="1.05" fill="#8c564b" opacity="1"/>
<circle cx="420.83" cy="160.39" r="1.05" fill="#8c564b" opacity="1"/>
<circle cx="428.28" cy="159.02" r="1.05" fill="#8c564b" opacity="1"/>
<circle cx="435.72" cy="180.35" r="1.05" fill="#8c564b" opacity="1"/>
<circle cx="443.17" cy="176.06" r="1.05" fill="#8c564b" opacity="1"/>
<circle cx="450.62" cy="138.44" r="1.05" fill="#8c564b" opacity="1"/>
<circle cx="458.07" cy="166.28" r="1.05" fill="#8c564b" opacity="1"/>
<circle cx="465.51" cy="169.4" r="1.05" fill="#8c564b" opacity="1"/>
<circle cx="472.96" cy="178.81" r="1.05" fill="#8c564b" opacity="1"/>
<circle cx="480.41" cy="146" r="1.05" fill="#8c564b" opacity="1"/>
<circle cx="487.86" cy="175.85" r="1.05" fill="#8c564b" opacity="1"/>
<circle cx="495.3" cy="157.51" r="1.05" fill="#8c564b" opacity="1"/>
<circle cx="502.75" cy="139.46" r="1.05" fill="#8c564b" opacity="1"/>
<circle cx="510.2" cy="154.69" r="1.05" fill="#8c564b" opacity="1"/>
<circle cx="517.65" cy="159.66" r="1.05" fill="#8c564b" opacity="1"/>
<circle cx="525.09" cy="159.32" r="1.05" fill="#8c564b" opacity="1"/>
<circle cx="532.54" cy="152.51" r="1.05" fill="#8c564b" opacity="1"/>
<circle cx="539.99" cy="159.37" r="1.05" fill="#8c564b" opacity="1"/>
<circle cx="547.44" cy="170.74" r="1.05" fill="#8c564b" opacity="1"/>
<circle cx="554.88" cy="162.38" r="1.05" fill="#8c564b" opacity="1"/>
<circle cx="562.33" cy="180.31" r="1.05" fill="#8c564b" opacity="1"/>
<circle cx="569.78" cy="173.01" r="1.05" fill="#8c564b" opacity="1"/>
<circle cx="577.23" cy="139.35" r="1.05" fill="#8c564b" opacity="1"/>
<circle cx="584.67" cy="138.44" r="1.05" fill="#8c564b" opacity="1"/>
<circle cx="592.12" cy="134.64" r="1.05" fill="#8c564b" opacity="1"/>
<circle cx="599.57" cy="156.45" r="1.05" fill="#8c564b" opacity="1"/>
<circle cx="607.02" cy="173.28" r="1.05" fill="#8c564b" opacity="1"/>
<circle cx="614.46" cy="158.6" r="1.05" fill="#8c564b" opacity="1"/>
<circle cx="621.91" cy="180.02" r="1.05" fill="#8c564b" opacity="1"/>
<circle cx="629.36" cy="187.88" r="1.05" fill="#8c564b" opacity="1"/>
<circle cx="636.81" cy="186.77" r="1.05" fill="#8c564b" opacity="1"/>
<circle cx="644.25" cy="157.36" r="1.05" fill="#8c564b" opacity="1"/>
<circle cx="651.7" cy="172.44" r="1.05" fill="#8c564b" opacity="1"/>
<polyline points="212.3,185.23 219.75,194.66 227.19,186.47 234.64,144.95 242.09,175.82 249.54,169.43 256.98,167.83 264.43,144.37 271.88,170.69 279.33,151.03 286.77,138.6 294.22,168.68 301.67,157.52 309.12,170.07 316.56,170.34 324.01,169.56 331.46,168.26 338.91,175.82 346.35,139.56 353.8,156.21 361.25,151.06 368.7,173.21 376.14,184.54 383.59,190.45 391.04,184.5 398.49,185.47 405.93,140.08 413.38,166.49 420.83,138.44 428.28,154.01 435.72,158.27 443.17,175.56 450.62,174.23 458.07,158.36 465.51,155.16 472.96,178.21 480.41,148.14 487.86,191.27 495.3,179.77 502.75,160.75 510.2,176.62 517.65,176.18 525.09,151.08 532.54,167.59 539.99,193.71 547.44,172.23 554.88,165.44 562.33,177.92 569.78,180.61 577.23,170.47 584.67,147.53 592.12,147.25 599.57,176 607.02,165.15 614.46,176.59 621.91,159.94 629.36,180.24 636.81,162.54 644.25,165.85 651.7,151.97" fill="none" stroke="#c49c94" stroke-width="0.95" stroke-linejoin="round" opacity="1"/>
<circle cx="212.3" cy="185.23" r="1.05" fill="#c49c94" opacity="1"/>
<circle cx="219.75" cy="194.66" r="1.05" fill="#c49c94" opacity="1"/>
<circle cx="227.19" cy="186.47" r="1.05" fill="#c49c94" opacity="1"/>
<circle cx="234.64" cy="144.95" r="1.05" fill="#c49c94" opacity="1"/>
<circle cx="242.09" cy="175.82" r="1.05" fill="#c49c94" opacity="1"/>
<circle cx="249.54" cy="169.43" r="1.05" fill="#c49c94" opacity="1"/>
<circle cx="256.98" cy="167.83" r="1.05" fill="#c49c94" opacity="1"/>
<circle cx="264.43" cy="144.37" r="1.05" fill="#c49c94" opacity="1"/>
<circle cx="271.88" cy="170.69" r="1.05" fill="#c49c94" opacity="1"/>
<circle cx="279.33" cy="151.03" r="1.05" fill="#c49c94" opacity="1"/>
<circle cx="286.77" cy="138.6" r="1.05" fill="#c49c94" opacity="1"/>
<circle cx="294.22" cy="168.68" r="1.05" fill="#c49c94" opacity="1"/>
<circle cx="301.67" cy="157.52" r="1.05" fill="#c49c94" opacity="1"/>
<circle cx="309.12" cy="170.07" r="1.05" fill="#c49c94" opacity="1"/>
<circle cx="316.56" cy="170.34" r="1.05" fill="#c49c94" opacity="1"/>
<circle cx="324.01" cy="169.56" r="1.05" fill="#c49c94" opacity="1"/>
<circle cx="331.46" cy="168.26" r="1.05" fill="#c49c94" opacity="1"/>
<circle cx="338.91" cy="175.82" r="1.05" fill="#c49c94" opacity="1"/>
<circle cx="346.35" cy="139.56" r="1.05" fill="#c49c94" opacity="1"/>
<circle cx="353.8" cy="156.21" r="1.05" fill="#c49c94" opacity="1"/>
<circle cx="361.25" cy="151.06" r="1.05" fill="#c49c94" opacity="1"/>
<circle cx="368.7" cy="173.21" r="1.05" fill="#c49c94" opacity="1"/>
<circle cx="376.14" cy="184.54" r="1.05" fill="#c49c94" opacity="1"/>
<circle cx="383.59" cy="190.45" r="1.05" fill="#c49c94" opacity="1"/>
<circle cx="391.04" cy="184.5" r="1.05" fill="#c49c94" opacity="1"/>
<circle cx="398.49" cy="185.47" r="1.05" fill="#c49c94" opacity="1"/>
<circle cx="405.93" cy="140.08" r="1.05" fill="#c49c94" opacity="1"/>
<circle cx="413.38" cy="166.49" r="1.05" fill="#c49c94" opacity="1"/>
<circle cx="420.83" cy="138.44" r="1.05" fill="#c49c94" opacity="1"/>
<circle cx="428.28" cy="154.01" r="1.05" fill="#c49c94" opacity="1"/>
<circle cx="435.72" cy="158.27" r="1.05" fill="#c49c94" opacity="1"/>
<circle cx="443.17" cy="175.56" r="1.05" fill="#c49c94" opacity="1"/>
<circle cx="450.62" cy="174.23" r="1.05" fill="#c49c94" opacity="1"/>
<circle cx="458.07" cy="158.36" r="1.05" fill="#c49c94" opacity="1"/>
<circle cx="465.51" cy="155.16" r="1.05" fill="#c49c94" opacity="1"/>
<circle cx="472.96" cy="178.21" r="1.05" fill="#c49c94" opacity="1"/>
<circle cx="480.41" cy="148.14" r="1.05" fill="#c49c94" opacity="1"/>
<circle cx="487.86" cy="191.27" r="1.05" fill="#c49c94" opacity="1"/>
<circle cx="495.3" cy="179.77" r="1.05" fill="#c49c94" opacity="1"/>
<circle cx="502.75" cy="160.75" r="1.05" fill="#c49c94" opacity="1"/>
<circle cx="510.2" cy="176.62" r="1.05" fill="#c49c94" opacity="1"/>
<circle cx="517.65" cy="176.18" r="1.05" fill="#c49c94" opacity="1"/>
<circle cx="525.09" cy="151.08" r="1.05" fill="#c49c94" opacity="1"/>
<circle cx="532.54" cy="167.59" r="1.05" fill="#c49c94" opacity="1"/>
<circle cx="539.99" cy="193.71" r="1.05" fill="#c49c94" opacity="1"/>
<circle cx="547.44" cy="172.23" r="1.05" fill="#c49c94" opacity="1"/>
<circle cx="554.88" cy="165.44" r="1.05" fill="#c49c94" opacity="1"/>
<circle cx="562.33" cy="177.92" r="1.05" fill="#c49c94" opacity="1"/>
<circle cx="569.78" cy="180.61" r="1.05" fill="#c49c94" opacity="1"/>
<circle cx="577.23" cy="170.47" r="1.05" fill="#c49c94" opacity="1"/>
<circle cx="584.67" cy="147.53" r="1.05" fill="#c49c94" opacity="1"/>
<circle cx="592.12" cy="147.25" r="1.05" fill="#c49c94" opacity="1"/>
<circle cx="599.57" cy="176" r="1.05" fill="#c49c94" opacity="1"/>
<circle cx="607.02" cy="165.15" r="1.05" fill="#c49c94" opacity="1"/>
<circle cx="614.46" cy="176.59" r="1.05" fill="#c49c94" opacity="1"/>
<circle cx="621.91" cy="159.94" r="1.05" fill="#c49c94" opacity="1"/>
<circle cx="629.36" cy="180.24" r="1.05" fill="#c49c94" opacity="1"/>
<circle cx="636.81" cy="162.54" r="1.05" fill="#c49c94" opacity="1"/>
<circle cx="644.25" cy="165.85" r="1.05" fill="#c49c94" opacity="1"/>
<circle cx="651.7" cy="151.97" r="1.05" fill="#c49c94" opacity="1"/>
<polyline points="212.3,164.91 219.75,185.96 227.19,159.6 234.64,137.33 242.09,149.09 249.54,145.2 256.98,175.69 264.43,154.7 271.88,166.56 279.33,158.16 286.77,143.29 294.22,151.42 301.67,170.61 309.12,173.62 316.56,163.32 324.01,147.95 331.46,178.41 338.91,164.66 346.35,165.62 353.8,158.26 361.25,159.57 368.7,159.26 376.14,164.93 383.59,168.07 391.04,197.59 398.49,186.48 405.93,147.65 413.38,187.53 420.83,171.08 428.28,162.92 435.72,180.61 443.17,185.76 450.62,150.41 458.07,144.14 465.51,159.76 472.96,186.78 480.41,148.72 487.86,162.49 495.3,154.92 502.75,148.13 510.2,153 517.65,149.09 525.09,173.29 532.54,155.82 539.99,170.52 547.44,167.62 554.88,150.3 562.33,153.76 569.78,182.78 577.23,163.02 584.67,150.19 592.12,146.58 599.57,179.37 607.02,165.68 614.46,155.98 621.91,169.84 629.36,173.6 636.81,175.9 644.25,167.67 651.7,158.56" fill="none" stroke="#e377c2" stroke-width="0.95" stroke-linejoin="round" opacity="1"/>
<circle cx="212.3" cy="164.91" r="1.05" fill="#e377c2" opacity="1"/>
<circle cx="219.75" cy="185.96" r="1.05" fill="#e377c2" opacity="1"/>
<circle cx="227.19" cy="159.6" r="1.05" fill="#e377c2" opacity="1"/>
<circle cx="234.64" cy="137.33" r="1.05" fill="#e377c2" opacity="1"/>
<circle cx="242.09" cy="149.09" r="1.05" fill="#e377c2" opacity="1"/>
<circle cx="249.54" cy="145.2" r="1.05" fill="#e377c2" opacity="1"/>
<circle cx="256.98" cy="175.69" r="1.05" fill="#e377c2" opacity="1"/>
<circle cx="264.43" cy="154.7" r="1.05" fill="#e377c2" opacity="1"/>
<circle cx="271.88" cy="166.56" r="1.05" fill="#e377c2" opacity="1"/>
<circle cx="279.33" cy="158.16" r="1.05" fill="#e377c2" opacity="1"/>
<circle cx="286.77" cy="143.29" r="1.05" fill="#e377c2" opacity="1"/>
<circle cx="294.22" cy="151.42" r="1.05" fill="#e377c2" opacity="1"/>
<circle cx="301.67" cy="170.61" r="1.05" fill="#e377c2" opacity="1"/>
<circle cx="309.12" cy="173.62" r="1.05" fill="#e377c2" opacity="1"/>
<circle cx="316.56" cy="163.32" r="1.05" fill="#e377c2" opacity="1"/>
<circle cx="324.01" cy="147.95" r="1.05" fill="#e377c2" opacity="1"/>
<circle cx="331.46" cy="178.41" r="1.05" fill="#e377c2" opacity="1"/>
<circle cx="338.91" cy="164.66" r="1.05" fill="#e377c2" opacity="1"/>
<circle cx="346.35" cy="165.62" r="1.05" fill="#e377c2" opacity="1"/>
<circle cx="353.8" cy="158.26" r="1.05" fill="#e377c2" opacity="1"/>
<circle cx="361.25" cy="159.57" r="1.05" fill="#e377c2" opacity="1"/>
<circle cx="368.7" cy="159.26" r="1.05" fill="#e377c2" opacity="1"/>
<circle cx="376.14" cy="164.93" r="1.05" fill="#e377c2" opacity="1"/>
<circle cx="383.59" cy="168.07" r="1.05" fill="#e377c2" opacity="1"/>
<circle cx="391.04" cy="197.59" r="1.05" fill="#e377c2" opacity="1"/>
<circle cx="398.49" cy="186.48" r="1.05" fill="#e377c2" opacity="1"/>
<circle cx="405.93" cy="147.65" r="1.05" fill="#e377c2" opacity="1"/>
<circle cx="413.38" cy="187.53" r="1.05" fill="#e377c2" opacity="1"/>
<circle cx="420.83" cy="171.08" r="1.05" fill="#e377c2" opacity="1"/>
<circle cx="428.28" cy="162.92" r="1.05" fill="#e377c2" opacity="1"/>
<circle cx="435.72" cy="180.61" r="1.05" fill="#e377c2" opacity="1"/>
<circle cx="443.17" cy="185.76" r="1.05" fill="#e377c2" opacity="1"/>
<circle cx="450.62" cy="150.41" r="1.05" fill="#e377c2" opacity="1"/>
<circle cx="458.07" cy="144.14" r="1.05" fill="#e377c2" opacity="1"/>
<circle cx="465.51" cy="159.76" r="1.05" fill="#e377c2" opacity="1"/>
<circle cx="472.96" cy="186.78" r="1.05" fill="#e377c2" opacity="1"/>
<circle cx="480.41" cy="148.72" r="1.05" fill="#e377c2" opacity="1"/>
<circle cx="487.86" cy="162.49" r="1.05" fill="#e377c2" opacity="1"/>
<circle cx="495.3" cy="154.92" r="1.05" fill="#e377c2" opacity="1"/>
<circle cx="502.75" cy="148.13" r="1.05" fill="#e377c2" opacity="1"/>
<circle cx="510.2" cy="153" r="1.05" fill="#e377c2" opacity="1"/>
<circle cx="517.65" cy="149.09" r="1.05" fill="#e377c2" opacity="1"/>
<circle cx="525.09" cy="173.29" r="1.05" fill="#e377c2" opacity="1"/>
<circle cx="532.54" cy="155.82" r="1.05" fill="#e377c2" opacity="1"/>
<circle cx="539.99" cy="170.52" r="1.05" fill="#e377c2" opacity="1"/>
<circle cx="547.44" cy="167.62" r="1.05" fill="#e377c2" opacity="1"/>
<circle cx="554.88" cy="150.3" r="1.05" fill="#e377c2" opacity="1"/>
<circle cx="562.33" cy="153.76" r="1.05" fill="#e377c2" opacity="1"/>
<circle cx="569.78" cy="182.78" r="1.05" fill="#e377c2" opacity="1"/>
<circle cx="577.23" cy="163.02" r="1.05" fill="#e377c2" opacity="1"/>
<circle cx="584.67" cy="150.19" r="1.05" fill="#e377c2" opacity="1"/>
<circle cx="592.12" cy="146.58" r="1.05" fill="#e377c2" opacity="1"/>
<circle cx="599.57" cy="179.37" r="1.05" fill="#e377c2" opacity="1"/>
<circle cx="607.02" cy="165.68" r="1.05" fill="#e377c2" opacity="1"/>
<circle cx="614.46" cy="155.98" r="1.05" fill="#e377c2" opacity="1"/>
<circle cx="621.91" cy="169.84" r="1.05" fill="#e377c2" opacity="1"/>
<circle cx="629.36" cy="173.6" r="1.05" fill="#e377c2" opacity="1"/>
<circle cx="636.81" cy="175.9" r="1.05" fill="#e377c2" opacity="1"/>
<circle cx="644.25" cy="167.67" r="1.05" fill="#e377c2" opacity="1"/>
<circle cx="651.7" cy="158.56" r="1.05" fill="#e377c2" opacity="1"/>
<polyline points="212.3,157.18 219.75,180.49 227.19,172.23 234.64,167.91 242.09,175.32 249.54,165.68 256.98,177.58 264.43,149.88 271.88,163.93 279.33,152 286.77,143.68 294.22,178.03 301.67,159.48 309.12,171.8 316.56,147.14 324.01,142.33 331.46,153.63 338.91,167.7 346.35,156.49 353.8,145.2 361.25,151.52 368.7,167.1 376.14,140.76 383.59,153.49 391.04,171.18 398.49,183.33 405.93,150.59 413.38,169.03 420.83,176.37 428.28,161.15 435.72,150.1 443.17,148.16 450.62,165.81 458.07,139.39 465.51,148.34 472.96,187.82 480.41,156.86 487.86,176.89 495.3,166.24 502.75,147.07 510.2,152.91 517.65,188.68 525.09,154.79 532.54,157.34 539.99,147.81 547.44,172.45 554.88,167.12 562.33,182.25 569.78,177.71 577.23,163.84 584.67,151.47 592.12,143.31 599.57,168.27 607.02,147.15 614.46,142.33 621.91,166.72 629.36,167.68 636.81,181.35 644.25,181.29 651.7,198.52" fill="none" stroke="#f7b6d2" stroke-width="0.95" stroke-linejoin="round" opacity="1"/>
<circle cx="212.3" cy="157.18" r="1.05" fill="#f7b6d2" opacity="1"/>
<circle cx="219.75" cy="180.49" r="1.05" fill="#f7b6d2" opacity="1"/>
<circle cx="227.19" cy="172.23" r="1.05" fill="#f7b6d2" opacity="1"/>
<circle cx="234.64" cy="167.91" r="1.05" fill="#f7b6d2" opacity="1"/>
<circle cx="242.09" cy="175.32" r="1.05" fill="#f7b6d2" opacity="1"/>
<circle cx="249.54" cy="165.68" r="1.05" fill="#f7b6d2" opacity="1"/>
<circle cx="256.98" cy="177.58" r="1.05" fill="#f7b6d2" opacity="1"/>
<circle cx="264.43" cy="149.88" r="1.05" fill="#f7b6d2" opacity="1"/>
<circle cx="271.88" cy="163.93" r="1.05" fill="#f7b6d2" opacity="1"/>
<circle cx="279.33" cy="152" r="1.05" fill="#f7b6d2" opacity="1"/>
<circle cx="286.77" cy="143.68" r="1.05" fill="#f7b6d2" opacity="1"/>
<circle cx="294.22" cy="178.03" r="1.05" fill="#f7b6d2" opacity="1"/>
<circle cx="301.67" cy="159.48" r="1.05" fill="#f7b6d2" opacity="1"/>
<circle cx="309.12" cy="171.8" r="1.05" fill="#f7b6d2" opacity="1"/>
<circle cx="316.56" cy="147.14" r="1.05" fill="#f7b6d2" opacity="1"/>
<circle cx="324.01" cy="142.33" r="1.05" fill="#f7b6d2" opacity="1"/>
<circle cx="331.46" cy="153.63" r="1.05" fill="#f7b6d2" opacity="1"/>
<circle cx="338.91" cy="167.7" r="1.05" fill="#f7b6d2" opacity="1"/>
<circle cx="346.35" cy="156.49" r="1.05" fill="#f7b6d2" opacity="1"/>
<circle cx="353.8" cy="145.2" r="1.05" fill="#f7b6d2" opacity="1"/>
<circle cx="361.25" cy="151.52" r="1.05" fill="#f7b6d2" opacity="1"/>
<circle cx="368.7" cy="167.1" r="1.05" fill="#f7b6d2" opacity="1"/>
<circle cx="376.14" cy="140.76" r="1.05" fill="#f7b6d2" opacity="1"/>
<circle cx="383.59" cy="153.49" r="1.05" fill="#f7b6d2" opacity="1"/>
<circle cx="391.04" cy="171.18" r="1.05" fill="#f7b6d2" opacity="1"/>
<circle cx="398.49" cy="183.33" r="1.05" fill="#f7b6d2" opacity="1"/>
<circle cx="405.93" cy="150.59" r="1.05" fill="#f7b6d2" opacity="1"/>
<circle cx="413.38" cy="169.03" r="1.05" fill="#f7b6d2" opacity="1"/>
<circle cx="420.83" cy="176.37" r="1.05" fill="#f7b6d2" opacity="1"/>
<circle cx="428.28" cy="161.15" r="1.05" fill="#f7b6d2" opacity="1"/>
<circle cx="435.72" cy="150.1" r="1.05" fill="#f7b6d2" opacity="1"/>
<circle cx="443.17" cy="148.16" r="1.05" fill="#f7b6d2" opacity="1"/>
<circle cx="450.62" cy="165.81" r="1.05" fill="#f7b6d2" opacity="1"/>
<circle cx="458.07" cy="139.39" r="1.05" fill="#f7b6d2" opacity="1"/>
<circle cx="465.51" cy="148.34" r="1.05" fill="#f7b6d2" opacity="1"/>
<circle cx="472.96" cy="187.82" r="1.05" fill="#f7b6d2" opacity="1"/>
<circle cx="480.41" cy="156.86" r="1.05" fill="#f7b6d2" opacity="1"/>
<circle cx="487.86" cy="176.89" r="1.05" fill="#f7b6d2" opacity="1"/>
<circle cx="495.3" cy="166.24" r="1.05" fill="#f7b6d2" opacity="1"/>
<circle cx="502.75" cy="147.07" r="1.05" fill="#f7b6d2" opacity="1"/>
<circle cx="510.2" cy="152.91" r="1.05" fill="#f7b6d2" opacity="1"/>
<circle cx="517.65" cy="188.68" r="1.05" fill="#f7b6d2" opacity="1"/>
<circle cx="525.09" cy="154.79" r="1.05" fill="#f7b6d2" opacity="1"/>
<circle cx="532.54" cy="157.34" r="1.05" fill="#f7b6d2" opacity="1"/>
<circle cx="539.99" cy="147.81" r="1.05" fill="#f7b6d2" opacity="1"/>
<circle cx="547.44" cy="172.45" r="1.05" fill="#f7b6d2" opacity="1"/>
<circle cx="554.88" cy="167.12" r="1.05" fill="#f7b6d2" opacity="1"/>
<circle cx="562.33" cy="182.25" r="1.05" fill="#f7b6d2" opacity="1"/>
<circle cx="569.78" cy="177.71" r="1.05" fill="#f7b6d2" opacity="1"/>
<circle cx="577.23" cy="163.84" r="1.05" fill="#f7b6d2" opacity="1"/>
<circle cx="584.67" cy="151.47" r="1.05" fill="#f7b6d2" opacity="1"/>
<circle cx="592.12" cy="143.31" r="1.05" fill="#f7b6d2" opacity="1"/>
<circle cx="599.57" cy="168.27" r="1.05" fill="#f7b6d2" opacity="1"/>
<circle cx="607.02" cy="147.15" r="1.05" fill="#f7b6d2" opacity="1"/>
<circle cx="614.46" cy="142.33" r="1.05" fill="#f7b6d2" opacity="1"/>
<circle cx="621.91" cy="166.72" r="1.05" fill="#f7b6d2" opacity="1"/>
<circle cx="629.36" cy="167.68" r="1.05" fill="#f7b6d2" opacity="1"/>
<circle cx="636.81" cy="181.35" r="1.05" fill="#f7b6d2" opacity="1"/>
<circle cx="644.25" cy="181.29" r="1.05" fill="#f7b6d2" opacity="1"/>
<circle cx="651.7" cy="198.52" r="1.05" fill="#f7b6d2" opacity="1"/>
<polyline points="212.3,165.55 219.75,186.29 227.19,179.6 234.64,164.61 242.09,166.97 249.54,158.26 256.98,160.75 264.43,143.81 271.88,177.05 279.33,185.93 286.77,142 294.22,155.19 301.67,165.61 309.12,172.88 316.56,162.59 324.01,170.25 331.46,181.72 338.91,176.07 346.35,143.17 353.8,177 361.25,150.91 368.7,150.97 376.14,155.73 383.59,163.98 391.04,171.36 398.49,180.5 405.93,146.9 413.38,192.38 420.83,166.63 428.28,147.15 435.72,167.59 443.17,177.23 450.62,178.14 458.07,171.46 465.51,170.47 472.96,186.33 480.41,143.37 487.86,189.45 495.3,169.42 502.75,159.37 510.2,181.12 517.65,184.68 525.09,182.04 532.54,155.92 539.99,180.86 547.44,172.33 554.88,164.12 562.33,195.65 569.78,194.63 577.23,155.45 584.67,155.07 592.12,145.74 599.57,175.56 607.02,174.84 614.46,165.9 621.91,157.86 629.36,152.63 636.81,163.07 644.25,158.81 651.7,173" fill="none" stroke="#7f7f7f" stroke-width="0.95" stroke-linejoin="round" opacity="1"/>
<circle cx="212.3" cy="165.55" r="1.05" fill="#7f7f7f" opacity="1"/>
<circle cx="219.75" cy="186.29" r="1.05" fill="#7f7f7f" opacity="1"/>
<circle cx="227.19" cy="179.6" r="1.05" fill="#7f7f7f" opacity="1"/>
<circle cx="234.64" cy="164.61" r="1.05" fill="#7f7f7f" opacity="1"/>
<circle cx="242.09" cy="166.97" r="1.05" fill="#7f7f7f" opacity="1"/>
<circle cx="249.54" cy="158.26" r="1.05" fill="#7f7f7f" opacity="1"/>
<circle cx="256.98" cy="160.75" r="1.05" fill="#7f7f7f" opacity="1"/>
<circle cx="264.43" cy="143.81" r="1.05" fill="#7f7f7f" opacity="1"/>
<circle cx="271.88" cy="177.05" r="1.05" fill="#7f7f7f" opacity="1"/>
<circle cx="279.33" cy="185.93" r="1.05" fill="#7f7f7f" opacity="1"/>
<circle cx="286.77" cy="142" r="1.05" fill="#7f7f7f" opacity="1"/>
<circle cx="294.22" cy="155.19" r="1.05" fill="#7f7f7f" opacity="1"/>
<circle cx="301.67" cy="165.61" r="1.05" fill="#7f7f7f" opacity="1"/>
<circle cx="309.12" cy="172.88" r="1.05" fill="#7f7f7f" opacity="1"/>
<circle cx="316.56" cy="162.59" r="1.05" fill="#7f7f7f" opacity="1"/>
<circle cx="324.01" cy="170.25" r="1.05" fill="#7f7f7f" opacity="1"/>
<circle cx="331.46" cy="181.72" r="1.05" fill="#7f7f7f" opacity="1"/>
<circle cx="338.91" cy="176.07" r="1.05" fill="#7f7f7f" opacity="1"/>
<circle cx="346.35" cy="143.17" r="1.05" fill="#7f7f7f" opacity="1"/>
<circle cx="353.8" cy="177" r="1.05" fill="#7f7f7f" opacity="1"/>
<circle cx="361.25" cy="150.91" r="1.05" fill="#7f7f7f" opacity="1"/>
<circle cx="368.7" cy="150.97" r="1.05" fill="#7f7f7f" opacity="1"/>
<circle cx="376.14" cy="155.73" r="1.05" fill="#7f7f7f" opacity="1"/>
<circle cx="383.59" cy="163.98" r="1.05" fill="#7f7f7f" opacity="1"/>
<circle cx="391.04" cy="171.36" r="1.05" fill="#7f7f7f" opacity="1"/>
<circle cx="398.49" cy="180.5" r="1.05" fill="#7f7f7f" opacity="1"/>
<circle cx="405.93" cy="146.9" r="1.05" fill="#7f7f7f" opacity="1"/>
<circle cx="413.38" cy="192.38" r="1.05" fill="#7f7f7f" opacity="1"/>
<circle cx="420.83" cy="166.63" r="1.05" fill="#7f7f7f" opacity="1"/>
<circle cx="428.28" cy="147.15" r="1.05" fill="#7f7f7f" opacity="1"/>
<circle cx="435.72" cy="167.59" r="1.05" fill="#7f7f7f" opacity="1"/>
<circle cx="443.17" cy="177.23" r="1.05" fill="#7f7f7f" opacity="1"/>
<circle cx="450.62" cy="178.14" r="1.05" fill="#7f7f7f" opacity="1"/>
<circle cx="458.07" cy="171.46" r="1.05" fill="#7f7f7f" opacity="1"/>
<circle cx="465.51" cy="170.47" r="1.05" fill="#7f7f7f" opacity="1"/>
<circle cx="472.96" cy="186.33" r="1.05" fill="#7f7f7f" opacity="1"/>
<circle cx="480.41" cy="143.37" r="1.05" fill="#7f7f7f" opacity="1"/>
<circle cx="487.86" cy="189.45" r="1.05" fill="#7f7f7f" opacity="1"/>
<circle cx="495.3" cy="169.42" r="1.05" fill="#7f7f7f" opacity="1"/>
<circle cx="502.75" cy="159.37" r="1.05" fill="#7f7f7f" opacity="1"/>
<circle cx="510.2" cy="181.12" r="1.05" fill="#7f7f7f" opacity="1"/>
<circle cx="517.65" cy="184.68" r="1.05" fill="#7f7f7f" opacity="1"/>
<circle cx="525.09" cy="182.04" r="1.05" fill="#7f7f7f" opacity="1"/>
<circle cx="532.54" cy="155.92" r="1.05" fill="#7f7f7f" opacity="1"/>
<circle cx="539.99" cy="180.86" r="1.05" fill="#7f7f7f" opacity="1"/>
<circle cx="547.44" cy="172.33" r="1.05" fill="#7f7f7f" opacity="1"/>
<circle cx="554.88" cy="164.12" r="1.05" fill="#7f7f7f" opacity="1"/>
<circle cx="562.33" cy="195.65" r="1.05" fill="#7f7f7f" opacity="1"/>
<circle cx="569.78" cy="194.63" r="1.05" fill="#7f7f7f" opacity="1"/>
<circle cx="577.23" cy="155.45" r="1.05" fill="#7f7f7f" opacity="1"/>
<circle cx="584.67" cy="155.07" r="1.05" fill="#7f7f7f" opacity="1"/>
<circle cx="592.12" cy="145.74" r="1.05" fill="#7f7f7f" opacity="1"/>
<circle cx="599.57" cy="175.56" r="1.05" fill="#7f7f7f" opacity="1"/>
<circle cx="607.02" cy="174.84" r="1.05" fill="#7f7f7f" opacity="1"/>
<circle cx="614.46" cy="165.9" r="1.05" fill="#7f7f7f" opacity="1"/>
<circle cx="621.91" cy="157.86" r="1.05" fill="#7f7f7f" opacity="1"/>
<circle cx="629.36" cy="152.63" r="1.05" fill="#7f7f7f" opacity="1"/>
<circle cx="636.81" cy="163.07" r="1.05" fill="#7f7f7f" opacity="1"/>
<circle cx="644.25" cy="158.81" r="1.05" fill="#7f7f7f" opacity="1"/>
<circle cx="651.7" cy="173" r="1.05" fill="#7f7f7f" opacity="1"/>
<polyline points="212.3,167.57 219.75,197.59 227.19,184.53 234.64,144.69 242.09,177.02 249.54,179.54 256.98,178.15 264.43,160.52 271.88,174.89 279.33,169.86 286.77,146.05 294.22,167.24 301.67,164.64 309.12,172.59 316.56,171.29 324.01,163.83 331.46,176.71 338.91,169.26 346.35,154.04 353.8,151.49 361.25,136.42 368.7,164.72 376.14,153.75 383.59,153.97 391.04,169.43 398.49,173.14 405.93,149.84 413.38,182.43 420.83,185.13 428.28,180.1 435.72,185.93 443.17,166.83 450.62,152.13 458.07,128.72 465.51,162.31 472.96,187.04 480.41,150.45 487.86,193.45 495.3,165.48 502.75,156.53 510.2,155.44 517.65,181.25 525.09,178.76 532.54,153.89 539.99,150.57 547.44,162.29 554.88,163.85 562.33,159.05 569.78,182.95 577.23,152.53 584.67,153.98 592.12,139.43 599.57,163.35 607.02,159.29 614.46,144.94 621.91,153.99 629.36,160.59 636.81,181.23 644.25,154.1 651.7,181.71" fill="none" stroke="#c7c7c7" stroke-width="0.95" stroke-linejoin="round" opacity="1"/>
<circle cx="212.3" cy="167.57" r="1.05" fill="#c7c7c7" opacity="1"/>
<circle cx="219.75" cy="197.59" r="1.05" fill="#c7c7c7" opacity="1"/>
<circle cx="227.19" cy="184.53" r="1.05" fill="#c7c7c7" opacity="1"/>
<circle cx="234.64" cy="144.69" r="1.05" fill="#c7c7c7" opacity="1"/>
<circle cx="242.09" cy="177.02" r="1.05" fill="#c7c7c7" opacity="1"/>
<circle cx="249.54" cy="179.54" r="1.05" fill="#c7c7c7" opacity="1"/>
<circle cx="256.98" cy="178.15" r="1.05" fill="#c7c7c7" opacity="1"/>
<circle cx="264.43" cy="160.52" r="1.05" fill="#c7c7c7" opacity="1"/>
<circle cx="271.88" cy="174.89" r="1.05" fill="#c7c7c7" opacity="1"/>
<circle cx="279.33" cy="169.86" r="1.05" fill="#c7c7c7" opacity="1"/>
<circle cx="286.77" cy="146.05" r="1.05" fill="#c7c7c7" opacity="1"/>
<circle cx="294.22" cy="167.24" r="1.05" fill="#c7c7c7" opacity="1"/>
<circle cx="301.67" cy="164.64" r="1.05" fill="#c7c7c7" opacity="1"/>
<circle cx="309.12" cy="172.59" r="1.05" fill="#c7c7c7" opacity="1"/>
<circle cx="316.56" cy="171.29" r="1.05" fill="#c7c7c7" opacity="1"/>
<circle cx="324.01" cy="163.83" r="1.05" fill="#c7c7c7" opacity="1"/>
<circle cx="331.46" cy="176.71" r="1.05" fill="#c7c7c7" opacity="1"/>
<circle cx="338.91" cy="169.26" r="1.05" fill="#c7c7c7" opacity="1"/>
<circle cx="346.35" cy="154.04" r="1.05" fill="#c7c7c7" opacity="1"/>
<circle cx="353.8" cy="151.49" r="1.05" fill="#c7c7c7" opacity="1"/>
<circle cx="361.25" cy="136.42" r="1.05" fill="#c7c7c7" opacity="1"/>
<circle cx="368.7" cy="164.72" r="1.05" fill="#c7c7c7" opacity="1"/>
<circle cx="376.14" cy="153.75" r="1.05" fill="#c7c7c7" opacity="1"/>
<circle cx="383.59" cy="153.97" r="1.05" fill="#c7c7c7" opacity="1"/>
<circle cx="391.04" cy="169.43" r="1.05" fill="#c7c7c7" opacity="1"/>
<circle cx="398.49" cy="173.14" r="1.05" fill="#c7c7c7" opacity="1"/>
<circle cx="405.93" cy="149.84" r="1.05" fill="#c7c7c7" opacity="1"/>
<circle cx="413.38" cy="182.43" r="1.05" fill="#c7c7c7" opacity="1"/>
<circle cx="420.83" cy="185.13" r="1.05" fill="#c7c7c7" opacity="1"/>
<circle cx="428.28" cy="180.1" r="1.05" fill="#c7c7c7" opacity="1"/>
<circle cx="435.72" cy="185.93" r="1.05" fill="#c7c7c7" opacity="1"/>
<circle cx="443.17" cy="166.83" r="1.05" fill="#c7c7c7" opacity="1"/>
<circle cx="450.62" cy="152.13" r="1.05" fill="#c7c7c7" opacity="1"/>
<circle cx="458.07" cy="128.72" r="1.05" fill="#c7c7c7" opacity="1"/>
<circle cx="465.51" cy="162.31" r="1.05" fill="#c7c7c7" opacity="1"/>
<circle cx="472.96" cy="187.04" r="1.05" fill="#c7c7c7" opacity="1"/>
<circle cx="480.41" cy="150.45" r="1.05" fill="#c7c7c7" opacity="1"/>
<circle cx="487.86" cy="193.45" r="1.05" fill="#c7c7c7" opacity="1"/>
<circle cx="495.3" cy="165.48" r="1.05" fill="#c7c7c7" opacity="1"/>
<circle cx="502.75" cy="156.53" r="1.05" fill="#c7c7c7" opacity="1"/>
<circle cx="510.2" cy="155.44" r="1.05" fill="#c7c7c7" opacity="1"/>
<circle cx="517.65" cy="181.25" r="1.05" fill="#c7c7c7" opacity="1"/>
<circle cx="525.09" cy="178.76" r="1.05" fill="#c7c7c7" opacity="1"/>
<circle cx="532.54" cy="153.89" r="1.05" fill="#c7c7c7" opacity="1"/>
<circle cx="539.99" cy="150.57" r="1.05" fill="#c7c7c7" opacity="1"/>
<circle cx="547.44" cy="162.29" r="1.05" fill="#c7c7c7" opacity="1"/>
<circle cx="554.88" cy="163.85" r="1.05" fill="#c7c7c7" opacity="1"/>
<circle cx="562.33" cy="159.05" r="1.05" fill="#c7c7c7" opacity="1"/>
<circle cx="569.78" cy="182.95" r="1.05" fill="#c7c7c7" opacity="1"/>
<circle cx="577.23" cy="152.53" r="1.05" fill="#c7c7c7" opacity="1"/>
<circle cx="584.67" cy="153.98" r="1.05" fill="#c7c7c7" opacity="1"/>
<circle cx="592.12" cy="139.43" r="1.05" fill="#c7c7c7" opacity="1"/>
<circle cx="599.57" cy="163.35" r="1.05" fill="#c7c7c7" opacity="1"/>
<circle cx="607.02" cy="159.29" r="1.05" fill="#c7c7c7" opacity="1"/>
<circle cx="614.46" cy="144.94" r="1.05" fill="#c7c7c7" opacity="1"/>
<circle cx="621.91" cy="153.99" r="1.05" fill="#c7c7c7" opacity="1"/>
<circle cx="629.36" cy="160.59" r="1.05" fill="#c7c7c7" opacity="1"/>
<circle cx="636.81" cy="181.23" r="1.05" fill="#c7c7c7" opacity="1"/>
<circle cx="644.25" cy="154.1" r="1.05" fill="#c7c7c7" opacity="1"/>
<circle cx="651.7" cy="181.71" r="1.05" fill="#c7c7c7" opacity="1"/>
<circle cx="220.3" cy="117" r="2.9" fill="#1f77b4"/>
<text transform="translate(224.4 116.6) scale(0.91 1)" text-anchor="start" font-size="6.5" fill="#222" dominant-baseline="central">cpu0</text>
<circle cx="246" cy="117" r="2.9" fill="#aec7e8"/>
<text transform="translate(250.1 116.6) scale(0.91 1)" text-anchor="start" font-size="6.5" fill="#222" dominant-baseline="central">cpu1</text>
<circle cx="271.7" cy="117" r="2.9" fill="#ff7f0e"/>
<text transform="translate(275.8 116.6) scale(0.91 1)" text-anchor="start" font-size="6.5" fill="#222" dominant-baseline="central">cpu2</text>
<circle cx="297.4" cy="117" r="2.9" fill="#ffbb78"/>
<text transform="translate(301.5 116.6) scale(0.91 1)" text-anchor="start" font-size="6.5" fill="#222" dominant-baseline="central">cpu3</text>
<circle cx="323.1" cy="117" r="2.9" fill="#2ca02c"/>
<text transform="translate(327.2 116.6) scale(0.91 1)" text-anchor="start" font-size="6.5" fill="#222" dominant-baseline="central">cpu4</text>
<circle cx="348.8" cy="117" r="2.9" fill="#98df8a"/>
<text transform="translate(352.9 116.6) scale(0.91 1)" text-anchor="start" font-size="6.5" fill="#222" dominant-baseline="central">cpu5</text>
<circle cx="374.5" cy="117" r="2.9" fill="#d62728"/>
<text transform="translate(378.6 116.6) scale(0.91 1)" text-anchor="start" font-size="6.5" fill="#222" dominant-baseline="central">cpu6</text>
<circle cx="400.2" cy="117" r="2.9" fill="#ff9896"/>
<text transform="translate(404.3 116.6) scale(0.91 1)" text-anchor="start" font-size="6.5" fill="#222" dominant-baseline="central">cpu7</text>
<circle cx="425.9" cy="117" r="2.9" fill="#9467bd"/>
<text transform="translate(430 116.6) scale(0.91 1)" text-anchor="start" font-size="6.5" fill="#222" dominant-baseline="central">cpu8</text>
<circle cx="451.6" cy="117" r="2.9" fill="#c5b0d5"/>
<text transform="translate(455.7 116.6) scale(0.91 1)" text-anchor="start" font-size="6.5" fill="#222" dominant-baseline="central">cpu9</text>
<circle cx="478.6" cy="117" r="2.9" fill="#8c564b"/>
<text transform="translate(482.7 116.6) scale(0.91 1)" text-anchor="start" font-size="6.5" fill="#222" dominant-baseline="central">cpu10</text>
<circle cx="507.4" cy="117" r="2.9" fill="#c49c94"/>
<text transform="translate(511.5 116.6) scale(0.91 1)" text-anchor="start" font-size="6.5" fill="#222" dominant-baseline="central">cpu11</text>
<circle cx="536.6" cy="117" r="2.9" fill="#e377c2"/>
<text transform="translate(540.7 116.6) scale(0.91 1)" text-anchor="start" font-size="6.5" fill="#222" dominant-baseline="central">cpu12</text>
<circle cx="564.9" cy="117" r="2.9" fill="#f7b6d2"/>
<text transform="translate(569 116.6) scale(0.91 1)" text-anchor="start" font-size="6.5" fill="#222" dominant-baseline="central">cpu13</text>
<circle cx="594" cy="117" r="2.9" fill="#7f7f7f"/>
<text transform="translate(598.1 116.6) scale(0.91 1)" text-anchor="start" font-size="6.5" fill="#222" dominant-baseline="central">cpu14</text>
<circle cx="622.7" cy="117" r="2.9" fill="#c7c7c7"/>
<text transform="translate(626.8 116.6) scale(0.91 1)" text-anchor="start" font-size="6.5" fill="#222" dominant-baseline="central">cpu15</text>
<line x1="40.6" y1="287.84" x2="138.5" y2="287.84" stroke="#e6e6e6" stroke-width="0.9"/>
<line x1="40.6" y1="302.39" x2="138.5" y2="302.39" stroke="#e6e6e6" stroke-width="0.9"/>
<line x1="40.6" y1="316.94" x2="138.5" y2="316.94" stroke="#e6e6e6" stroke-width="0.9"/>
<line x1="40.6" y1="331.5" x2="138.5" y2="331.5" stroke="#e6e6e6" stroke-width="0.9"/>
<line x1="40.6" y1="346.05" x2="138.5" y2="346.05" stroke="#e6e6e6" stroke-width="0.9"/>
<line x1="40.6" y1="360.6" x2="138.5" y2="360.6" stroke="#e6e6e6" stroke-width="0.9"/>
<line x1="95.4" y1="276.2" x2="95.4" y2="360.6" stroke="#e6e6e6" stroke-width="0.9"/>
<line x1="40.6" y1="276.2" x2="40.6" y2="360.6" stroke="#8a8a8a" stroke-width="0.9"/>
<text transform="translate(38.6 276.2) scale(0.89 1)" text-anchor="end" font-size="6.5" font-weight="bold" fill="#000" dominant-baseline="central">29.00</text>
<text transform="translate(38.6 287.84) scale(0.89 1)" text-anchor="end" font-size="6.5" fill="#000" dominant-baseline="central">25.00</text>
<text transform="translate(38.6 302.39) scale(0.89 1)" text-anchor="end" font-size="6.5" fill="#000" dominant-baseline="central">20.00</text>
<text transform="translate(38.6 316.94) scale(0.89 1)" text-anchor="end" font-size="6.5" fill="#000" dominant-baseline="central">15.00</text>
<text transform="translate(38.6 331.5) scale(0.89 1)" text-anchor="end" font-size="6.5" fill="#000" dominant-baseline="central">10.00</text>
<text transform="translate(38.6 346.05) scale(0.89 1)" text-anchor="end" font-size="6.5" fill="#000" dominant-baseline="central">5.00</text>
<text transform="translate(38.6 360.6) scale(0.89 1)" text-anchor="end" font-size="6.5" font-weight="bold" fill="#000" dominant-baseline="central">0.00</text>
<text transform="translate(40.6 366.8) scale(0.89 1)" text-anchor="middle" font-size="6.5" font-weight="bold" fill="#000" dominant-baseline="central">08:48:02</text>
<text transform="translate(95.4 366.8) scale(0.89 1)" text-anchor="middle" font-size="6.5" fill="#000" dominant-baseline="central">08:49:10</text>
<text transform="translate(138.5 366.8) scale(0.89 1)" text-anchor="middle" font-size="6.5" font-weight="bold" fill="#000" dominant-baseline="central">08:50:01</text>
<polyline points="40.6,348.5 42.5,337.4 44.4,337.4 45.6,354.5 47.3,339.8 48.4,334.3 50.3,311.3 52,328.4 53.7,325.5 55.1,327.9 56.7,328.4 58.4,345.5 60.3,339.8 62,337.4 63.4,340.2 65,331.2 66.7,337.4 68.1,328.9 69.8,311.3 71.7,325.5 73.3,349.2 75,331.2 76.9,349.2 78.6,333.1 80,342.6 82.1,349.2 83.5,339.8 85.2,334.3 87.1,337.4 88.8,337.4 90.2,333.6 91.6,316.5 93.8,275.8 95.2,345.5 96.9,339.8 98.5,331.2 99.9,348.5 101.6,319.4 103.3,334.3 104.9,348.5 106.8,345.5 108.2,328.4 109.9,337.4 111.6,325.5 113.4,302.3 115.1,328.4 116.5,348.5 118.2,325.5 120.1,348.5 121.7,308.2 123.4,337.4 125.3,334.3 127,331.2 128.4,342.6 130,345.5 131.7,340.2 133.6,352.1 135.3,337.4 136.7,339.8 138.5,328.4" fill="none" stroke="#1f77b4" stroke-width="1.3" stroke-linejoin="round" opacity="1"/>
<circle cx="40.6" cy="348.5" r="1.1" fill="#1f77b4" opacity="1"/>
<circle cx="42.5" cy="337.4" r="1.1" fill="#1f77b4" opacity="1"/>
<circle cx="44.4" cy="337.4" r="1.1" fill="#1f77b4" opacity="1"/>
<circle cx="45.6" cy="354.5" r="1.1" fill="#1f77b4" opacity="1"/>
<circle cx="47.3" cy="339.8" r="1.1" fill="#1f77b4" opacity="1"/>
<circle cx="48.4" cy="334.3" r="1.1" fill="#1f77b4" opacity="1"/>
<circle cx="50.3" cy="311.3" r="1.1" fill="#1f77b4" opacity="1"/>
<circle cx="52" cy="328.4" r="1.1" fill="#1f77b4" opacity="1"/>
<circle cx="53.7" cy="325.5" r="1.1" fill="#1f77b4" opacity="1"/>
<circle cx="55.1" cy="327.9" r="1.1" fill="#1f77b4" opacity="1"/>
<circle cx="56.7" cy="328.4" r="1.1" fill="#1f77b4" opacity="1"/>
<circle cx="58.4" cy="345.5" r="1.1" fill="#1f77b4" opacity="1"/>
<circle cx="60.3" cy="339.8" r="1.1" fill="#1f77b4" opacity="1"/>
<circle cx="62" cy="337.4" r="1.1" fill="#1f77b4" opacity="1"/>
<circle cx="63.4" cy="340.2" r="1.1" fill="#1f77b4" opacity="1"/>
<circle cx="65" cy="331.2" r="1.1" fill="#1f77b4" opacity="1"/>
<circle cx="66.7" cy="337.4" r="1.1" fill="#1f77b4" opacity="1"/>
<circle cx="68.1" cy="328.9" r="1.1" fill="#1f77b4" opacity="1"/>
<circle cx="69.8" cy="311.3" r="1.1" fill="#1f77b4" opacity="1"/>
<circle cx="71.7" cy="325.5" r="1.1" fill="#1f77b4" opacity="1"/>
<circle cx="73.3" cy="349.2" r="1.1" fill="#1f77b4" opacity="1"/>
<circle cx="75" cy="331.2" r="1.1" fill="#1f77b4" opacity="1"/>
<circle cx="76.9" cy="349.2" r="1.1" fill="#1f77b4" opacity="1"/>
<circle cx="78.6" cy="333.1" r="1.1" fill="#1f77b4" opacity="1"/>
<circle cx="80" cy="342.6" r="1.1" fill="#1f77b4" opacity="1"/>
<circle cx="82.1" cy="349.2" r="1.1" fill="#1f77b4" opacity="1"/>
<circle cx="83.5" cy="339.8" r="1.1" fill="#1f77b4" opacity="1"/>
<circle cx="85.2" cy="334.3" r="1.1" fill="#1f77b4" opacity="1"/>
<circle cx="87.1" cy="337.4" r="1.1" fill="#1f77b4" opacity="1"/>
<circle cx="88.8" cy="337.4" r="1.1" fill="#1f77b4" opacity="1"/>
<circle cx="90.2" cy="333.6" r="1.1" fill="#1f77b4" opacity="1"/>
<circle cx="91.6" cy="316.5" r="1.1" fill="#1f77b4" opacity="1"/>
<circle cx="93.8" cy="275.8" r="1.1" fill="#1f77b4" opacity="1"/>
<circle cx="95.2" cy="345.5" r="1.1" fill="#1f77b4" opacity="1"/>
<circle cx="96.9" cy="339.8" r="1.1" fill="#1f77b4" opacity="1"/>
<circle cx="98.5" cy="331.2" r="1.1" fill="#1f77b4" opacity="1"/>
<circle cx="99.9" cy="348.5" r="1.1" fill="#1f77b4" opacity="1"/>
<circle cx="101.6" cy="319.4" r="1.1" fill="#1f77b4" opacity="1"/>
<circle cx="103.3" cy="334.3" r="1.1" fill="#1f77b4" opacity="1"/>
<circle cx="104.9" cy="348.5" r="1.1" fill="#1f77b4" opacity="1"/>
<circle cx="106.8" cy="345.5" r="1.1" fill="#1f77b4" opacity="1"/>
<circle cx="108.2" cy="328.4" r="1.1" fill="#1f77b4" opacity="1"/>
<circle cx="109.9" cy="337.4" r="1.1" fill="#1f77b4" opacity="1"/>
<circle cx="111.6" cy="325.5" r="1.1" fill="#1f77b4" opacity="1"/>
<circle cx="113.4" cy="302.3" r="1.1" fill="#1f77b4" opacity="1"/>
<circle cx="115.1" cy="328.4" r="1.1" fill="#1f77b4" opacity="1"/>
<circle cx="116.5" cy="348.5" r="1.1" fill="#1f77b4" opacity="1"/>
<circle cx="118.2" cy="325.5" r="1.1" fill="#1f77b4" opacity="1"/>
<circle cx="120.1" cy="348.5" r="1.1" fill="#1f77b4" opacity="1"/>
<circle cx="121.7" cy="308.2" r="1.1" fill="#1f77b4" opacity="1"/>
<circle cx="123.4" cy="337.4" r="1.1" fill="#1f77b4" opacity="1"/>
<circle cx="125.3" cy="334.3" r="1.1" fill="#1f77b4" opacity="1"/>
<circle cx="127" cy="331.2" r="1.1" fill="#1f77b4" opacity="1"/>
<circle cx="128.4" cy="342.6" r="1.1" fill="#1f77b4" opacity="1"/>
<circle cx="130" cy="345.5" r="1.1" fill="#1f77b4" opacity="1"/>
<circle cx="131.7" cy="340.2" r="1.1" fill="#1f77b4" opacity="1"/>
<circle cx="133.6" cy="352.1" r="1.1" fill="#1f77b4" opacity="1"/>
<circle cx="135.3" cy="337.4" r="1.1" fill="#1f77b4" opacity="1"/>
<circle cx="136.7" cy="339.8" r="1.1" fill="#1f77b4" opacity="1"/>
<circle cx="138.5" cy="328.4" r="1.1" fill="#1f77b4" opacity="1"/>
<circle cx="97.3" cy="268.6" r="2.9" fill="#1f77b4"/>
<text transform="translate(101.4 268.2) scale(0.91 1)" text-anchor="start" font-size="6.5" fill="#222" dominant-baseline="central">Series -1</text>
<line x1="212.2" y1="298.09" x2="310.3" y2="298.09" stroke="#e6e6e6" stroke-width="0.9"/>
<line x1="212.2" y1="313.59" x2="310.3" y2="313.59" stroke="#e6e6e6" stroke-width="0.9"/>
<line x1="212.2" y1="329.1" x2="310.3" y2="329.1" stroke="#e6e6e6" stroke-width="0.9"/>
<line x1="212.2" y1="344.6" x2="310.3" y2="344.6" stroke="#e6e6e6" stroke-width="0.9"/>
<line x1="212.2" y1="360.1" x2="310.3" y2="360.1" stroke="#e6e6e6" stroke-width="0.9"/>
<line x1="267.7" y1="286" x2="267.7" y2="360.1" stroke="#e6e6e6" stroke-width="0.9"/>
<line x1="212.2" y1="286" x2="212.2" y2="360.1" stroke="#8a8a8a" stroke-width="0.9"/>
<text transform="translate(210.2 286) scale(0.89 1)" text-anchor="end" font-size="6.5" font-weight="bold" fill="#000" dominant-baseline="central">9.56</text>
<text transform="translate(210.2 298.09) scale(0.89 1)" text-anchor="end" font-size="6.5" fill="#000" dominant-baseline="central">8.00</text>
<text transform="translate(210.2 313.59) scale(0.89 1)" text-anchor="end" font-size="6.5" fill="#000" dominant-baseline="central">6.00</text>
<text transform="translate(210.2 329.1) scale(0.89 1)" text-anchor="end" font-size="6.5" fill="#000" dominant-baseline="central">4.00</text>
<text transform="translate(210.2 344.6) scale(0.89 1)" text-anchor="end" font-size="6.5" fill="#000" dominant-baseline="central">2.00</text>
<text transform="translate(210.2 360.1) scale(0.89 1)" text-anchor="end" font-size="6.5" font-weight="bold" fill="#000" dominant-baseline="central">0.00</text>
<text transform="translate(212.2 366.3) scale(0.89 1)" text-anchor="middle" font-size="6.5" font-weight="bold" fill="#000" dominant-baseline="central">08:48:02</text>
<text transform="translate(267.7 366.3) scale(0.89 1)" text-anchor="middle" font-size="6.5" fill="#000" dominant-baseline="central">08:49:10</text>
<text transform="translate(310.3 366.3) scale(0.89 1)" text-anchor="middle" font-size="6.5" font-weight="bold" fill="#000" dominant-baseline="central">08:50:01</text>
<polyline points="212.2,291.4 240,293 258,293.9 270,295.4 283.5,295.8 287,293 292,291.8 310.5,291.6" fill="none" stroke="#aec7e8" stroke-width="1.8" stroke-linejoin="round" opacity="1"/>
<polyline points="212.2,290.1 240,290.6 270,291.2 283.5,291.3 290,290.5 310.5,290.5" fill="none" stroke="#ff7f0e" stroke-width="2.2" stroke-linejoin="round" opacity="1"/>
<polyline points="212.2,292.7 216.9,293.5 218.8,297.2 225.4,296.6 227.3,294.1 230.4,296.2 233.5,296.4 235.4,298.9 238.9,300.4 242,300.2 243.9,296.6 246.6,297.9 250,298.4 252,303 255.8,304.1 258.9,303.1 261.1,303 263.4,305 266.5,305.3 268.4,306.9 271.1,308.2 275,308.4 276.9,306.1 279.6,307.2 283.5,307.4 284.6,297.4 286.9,296.4 287.7,292.7 292,292.3 293.1,285.8 295.8,285.8 297.4,287.7 303.5,287 304.7,292.3 308.9,292.7 310.5,294.3" fill="none" stroke="#1f77b4" stroke-width="1.7" stroke-linejoin="round" opacity="1"/>
<circle cx="231.5" cy="268.9" r="2.9" fill="#1f77b4"/>
<text transform="translate(235.6 268.5) scale(0.91 1)" text-anchor="start" font-size="6.5" fill="#222" dominant-baseline="central">1 minute</text>
<circle cx="272" cy="268.9" r="2.9" fill="#aec7e8"/>
<text transform="translate(276.1 268.5) scale(0.91 1)" text-anchor="start" font-size="6.5" fill="#222" dominant-baseline="central">5 minute</text>
<circle cx="231.5" cy="278.6" r="2.9" fill="#ff7f0e"/>
<text transform="translate(235.6 278.2) scale(0.91 1)" text-anchor="start" font-size="6.5" fill="#222" dominant-baseline="central">15 minute</text>
<line x1="383.3" y1="298.1" x2="481.8" y2="298.1" stroke="#e6e6e6" stroke-width="0.9"/>
<line x1="383.3" y1="313.63" x2="481.8" y2="313.63" stroke="#e6e6e6" stroke-width="0.9"/>
<line x1="383.3" y1="329.15" x2="481.8" y2="329.15" stroke="#e6e6e6" stroke-width="0.9"/>
<line x1="383.3" y1="344.68" x2="481.8" y2="344.68" stroke="#e6e6e6" stroke-width="0.9"/>
<line x1="383.3" y1="360.2" x2="481.8" y2="360.2" stroke="#e6e6e6" stroke-width="0.9"/>
<line x1="441.2" y1="285.8" x2="441.2" y2="360.2" stroke="#e6e6e6" stroke-width="0.9"/>
<line x1="383.3" y1="285.8" x2="383.3" y2="360.2" stroke="#8a8a8a" stroke-width="0.9"/>
<text transform="translate(381.3 285.8) scale(0.89 1)" text-anchor="end" font-size="6.5" font-weight="bold" fill="#000" dominant-baseline="central">95853</text>
<text transform="translate(381.3 298.1) scale(0.89 1)" text-anchor="end" font-size="6.5" fill="#000" dominant-baseline="central">80000</text>
<text transform="translate(381.3 313.63) scale(0.89 1)" text-anchor="end" font-size="6.5" fill="#000" dominant-baseline="central">60000</text>
<text transform="translate(381.3 329.15) scale(0.89 1)" text-anchor="end" font-size="6.5" fill="#000" dominant-baseline="central">40000</text>
<text transform="translate(381.3 344.68) scale(0.89 1)" text-anchor="end" font-size="6.5" fill="#000" dominant-baseline="central">20000</text>
<text transform="translate(381.3 360.2) scale(0.89 1)" text-anchor="end" font-size="6.5" font-weight="bold" fill="#000" dominant-baseline="central">0</text>
<text transform="translate(383.3 366.4) scale(0.89 1)" text-anchor="middle" font-size="6.5" font-weight="bold" fill="#000" dominant-baseline="central">08:48:00</text>
<text transform="translate(441.2 366.4) scale(0.89 1)" text-anchor="middle" font-size="6.5" fill="#000" dominant-baseline="central">08:49:10</text>
<text transform="translate(481.8 366.4) scale(0.89 1)" text-anchor="middle" font-size="6.5" font-weight="bold" fill="#000" dominant-baseline="central">08:49:59</text>
<polyline points="383.3,360.5 481.8,360.5" fill="none" stroke="#ffbb78" stroke-width="2.2" stroke-linejoin="round" opacity="1"/>
<polyline points="383.3,308 385,298.3 386.3,305.8 388.1,310.1 390,298.9 391.9,317.6 393.5,313.9 395,302.6 396.6,297 398.5,297.6 400,315.1 401.5,296.8 403.1,286 404.8,303.3 406.5,305.8 408.5,316.4 410,305.1 411.6,294.9 413.1,301.4 415,299.5 416.5,314.8 418.1,298.3 420,289.3 421.5,302 423.1,305.1 425,322.6 426.9,315.1 428.1,302.3 430,301 431.5,311.4 433.1,319.3 434.8,303 436.3,298.9 437.8,305.1 439.8,299.5 441.5,318.9 443.1,301.4 444.8,296.8 446.3,293.9 448.1,298.9 449.8,314.8 451.5,301.4 453.1,303.5 454.8,302.6 456.5,298.5 458.1,312.6 459.8,304.3 461.5,294.8 463.1,309.8 464.8,306.4 466.5,311.8 468.1,287.3 470,288.5 471.6,300.8 473.1,292.6 475,313 476.6,298.5 478.1,300.8 480,311.8 481.8,301.4" fill="none" stroke="#ff8c26" stroke-width="1.2" stroke-linejoin="round" opacity="1"/>
<circle cx="383.3" cy="308" r="1.1" fill="#ff8c26" opacity="1"/>
<circle cx="385" cy="298.3" r="1.1" fill="#ff8c26" opacity="1"/>
<circle cx="386.3" cy="305.8" r="1.1" fill="#ff8c26" opacity="1"/>
<circle cx="388.1" cy="310.1" r="1.1" fill="#ff8c26" opacity="1"/>
<circle cx="390" cy="298.9" r="1.1" fill="#ff8c26" opacity="1"/>
<circle cx="391.9" cy="317.6" r="1.1" fill="#ff8c26" opacity="1"/>
<circle cx="393.5" cy="313.9" r="1.1" fill="#ff8c26" opacity="1"/>
<circle cx="395" cy="302.6" r="1.1" fill="#ff8c26" opacity="1"/>
<circle cx="396.6" cy="297" r="1.1" fill="#ff8c26" opacity="1"/>
<circle cx="398.5" cy="297.6" r="1.1" fill="#ff8c26" opacity="1"/>
<circle cx="400" cy="315.1" r="1.1" fill="#ff8c26" opacity="1"/>
<circle cx="401.5" cy="296.8" r="1.1" fill="#ff8c26" opacity="1"/>
<circle cx="403.1" cy="286" r="1.1" fill="#ff8c26" opacity="1"/>
<circle cx="404.8" cy="303.3" r="1.1" fill="#ff8c26" opacity="1"/>
<circle cx="406.5" cy="305.8" r="1.1" fill="#ff8c26" opacity="1"/>
<circle cx="408.5" cy="316.4" r="1.1" fill="#ff8c26" opacity="1"/>
<circle cx="410" cy="305.1" r="1.1" fill="#ff8c26" opacity="1"/>
<circle cx="411.6" cy="294.9" r="1.1" fill="#ff8c26" opacity="1"/>
<circle cx="413.1" cy="301.4" r="1.1" fill="#ff8c26" opacity="1"/>
<circle cx="415" cy="299.5" r="1.1" fill="#ff8c26" opacity="1"/>
<circle cx="416.5" cy="314.8" r="1.1" fill="#ff8c26" opacity="1"/>
<circle cx="418.1" cy="298.3" r="1.1" fill="#ff8c26" opacity="1"/>
<circle cx="420" cy="289.3" r="1.1" fill="#ff8c26" opacity="1"/>
<circle cx="421.5" cy="302" r="1.1" fill="#ff8c26" opacity="1"/>
<circle cx="423.1" cy="305.1" r="1.1" fill="#ff8c26" opacity="1"/>
<circle cx="425" cy="322.6" r="1.1" fill="#ff8c26" opacity="1"/>
<circle cx="426.9" cy="315.1" r="1.1" fill="#ff8c26" opacity="1"/>
<circle cx="428.1" cy="302.3" r="1.1" fill="#ff8c26" opacity="1"/>
<circle cx="430" cy="301" r="1.1" fill="#ff8c26" opacity="1"/>
<circle cx="431.5" cy="311.4" r="1.1" fill="#ff8c26" opacity="1"/>
<circle cx="433.1" cy="319.3" r="1.1" fill="#ff8c26" opacity="1"/>
<circle cx="434.8" cy="303" r="1.1" fill="#ff8c26" opacity="1"/>
<circle cx="436.3" cy="298.9" r="1.1" fill="#ff8c26" opacity="1"/>
<circle cx="437.8" cy="305.1" r="1.1" fill="#ff8c26" opacity="1"/>
<circle cx="439.8" cy="299.5" r="1.1" fill="#ff8c26" opacity="1"/>
<circle cx="441.5" cy="318.9" r="1.1" fill="#ff8c26" opacity="1"/>
<circle cx="443.1" cy="301.4" r="1.1" fill="#ff8c26" opacity="1"/>
<circle cx="444.8" cy="296.8" r="1.1" fill="#ff8c26" opacity="1"/>
<circle cx="446.3" cy="293.9" r="1.1" fill="#ff8c26" opacity="1"/>
<circle cx="448.1" cy="298.9" r="1.1" fill="#ff8c26" opacity="1"/>
<circle cx="449.8" cy="314.8" r="1.1" fill="#ff8c26" opacity="1"/>
<circle cx="451.5" cy="301.4" r="1.1" fill="#ff8c26" opacity="1"/>
<circle cx="453.1" cy="303.5" r="1.1" fill="#ff8c26" opacity="1"/>
<circle cx="454.8" cy="302.6" r="1.1" fill="#ff8c26" opacity="1"/>
<circle cx="456.5" cy="298.5" r="1.1" fill="#ff8c26" opacity="1"/>
<circle cx="458.1" cy="312.6" r="1.1" fill="#ff8c26" opacity="1"/>
<circle cx="459.8" cy="304.3" r="1.1" fill="#ff8c26" opacity="1"/>
<circle cx="461.5" cy="294.8" r="1.1" fill="#ff8c26" opacity="1"/>
<circle cx="463.1" cy="309.8" r="1.1" fill="#ff8c26" opacity="1"/>
<circle cx="464.8" cy="306.4" r="1.1" fill="#ff8c26" opacity="1"/>
<circle cx="466.5" cy="311.8" r="1.1" fill="#ff8c26" opacity="1"/>
<circle cx="468.1" cy="287.3" r="1.1" fill="#ff8c26" opacity="1"/>
<circle cx="470" cy="288.5" r="1.1" fill="#ff8c26" opacity="1"/>
<circle cx="471.6" cy="300.8" r="1.1" fill="#ff8c26" opacity="1"/>
<circle cx="473.1" cy="292.6" r="1.1" fill="#ff8c26" opacity="1"/>
<circle cx="475" cy="313" r="1.1" fill="#ff8c26" opacity="1"/>
<circle cx="476.6" cy="298.5" r="1.1" fill="#ff8c26" opacity="1"/>
<circle cx="478.1" cy="300.8" r="1.1" fill="#ff8c26" opacity="1"/>
<circle cx="480" cy="311.8" r="1.1" fill="#ff8c26" opacity="1"/>
<circle cx="481.8" cy="301.4" r="1.1" fill="#ff8c26" opacity="1"/>
<polyline points="383.5,358.5 386.9,357.4 390,358.4 393.5,358.1 395,353.9 396.2,357.4 400.1,355.4 403.1,354 404.7,358.1 406.6,353.7 408.2,353.5 411.6,358.1 415.1,354.5 417,358.1 425,358.4 430,358.1 436.2,358.4 438.1,356.2 440,358.5 441.6,358.1 443.1,353.3 444.7,356.6 446.4,351.6 448.1,356.2 449.9,353.1 452,355.8 454.7,358.5 460.9,358.9 464.3,357.7 466.3,353.9 467.8,358.1 473.2,356.4 474.8,358.5 481.7,358.9" fill="none" stroke="#1f77b4" stroke-width="1.5" stroke-linejoin="round" opacity="1"/>
<circle cx="383.5" cy="358.5" r="0.95" fill="#1f77b4" opacity="1"/>
<circle cx="386.9" cy="357.4" r="0.95" fill="#1f77b4" opacity="1"/>
<circle cx="390" cy="358.4" r="0.95" fill="#1f77b4" opacity="1"/>
<circle cx="393.5" cy="358.1" r="0.95" fill="#1f77b4" opacity="1"/>
<circle cx="395" cy="353.9" r="0.95" fill="#1f77b4" opacity="1"/>
<circle cx="396.2" cy="357.4" r="0.95" fill="#1f77b4" opacity="1"/>
<circle cx="400.1" cy="355.4" r="0.95" fill="#1f77b4" opacity="1"/>
<circle cx="403.1" cy="354" r="0.95" fill="#1f77b4" opacity="1"/>
<circle cx="404.7" cy="358.1" r="0.95" fill="#1f77b4" opacity="1"/>
<circle cx="406.6" cy="353.7" r="0.95" fill="#1f77b4" opacity="1"/>
<circle cx="408.2" cy="353.5" r="0.95" fill="#1f77b4" opacity="1"/>
<circle cx="411.6" cy="358.1" r="0.95" fill="#1f77b4" opacity="1"/>
<circle cx="415.1" cy="354.5" r="0.95" fill="#1f77b4" opacity="1"/>
<circle cx="417" cy="358.1" r="0.95" fill="#1f77b4" opacity="1"/>
<circle cx="425" cy="358.4" r="0.95" fill="#1f77b4" opacity="1"/>
<circle cx="430" cy="358.1" r="0.95" fill="#1f77b4" opacity="1"/>
<circle cx="436.2" cy="358.4" r="0.95" fill="#1f77b4" opacity="1"/>
<circle cx="438.1" cy="356.2" r="0.95" fill="#1f77b4" opacity="1"/>
<circle cx="440" cy="358.5" r="0.95" fill="#1f77b4" opacity="1"/>
<circle cx="441.6" cy="358.1" r="0.95" fill="#1f77b4" opacity="1"/>
<circle cx="443.1" cy="353.3" r="0.95" fill="#1f77b4" opacity="1"/>
<circle cx="444.7" cy="356.6" r="0.95" fill="#1f77b4" opacity="1"/>
<circle cx="446.4" cy="351.6" r="0.95" fill="#1f77b4" opacity="1"/>
<circle cx="448.1" cy="356.2" r="0.95" fill="#1f77b4" opacity="1"/>
<circle cx="449.9" cy="353.1" r="0.95" fill="#1f77b4" opacity="1"/>
<circle cx="452" cy="355.8" r="0.95" fill="#1f77b4" opacity="1"/>
<circle cx="454.7" cy="358.5" r="0.95" fill="#1f77b4" opacity="1"/>
<circle cx="460.9" cy="358.9" r="0.95" fill="#1f77b4" opacity="1"/>
<circle cx="464.3" cy="357.7" r="0.95" fill="#1f77b4" opacity="1"/>
<circle cx="466.3" cy="353.9" r="0.95" fill="#1f77b4" opacity="1"/>
<circle cx="467.8" cy="358.1" r="0.95" fill="#1f77b4" opacity="1"/>
<circle cx="473.2" cy="356.4" r="0.95" fill="#1f77b4" opacity="1"/>
<circle cx="474.8" cy="358.5" r="0.95" fill="#1f77b4" opacity="1"/>
<circle cx="481.7" cy="358.9" r="0.95" fill="#1f77b4" opacity="1"/>
<circle cx="411.8" cy="268.9" r="2.9" fill="#1f77b4"/>
<text transform="translate(415.9 268.5) scale(0.91 1)" text-anchor="start" font-size="6.5" fill="#222" dominant-baseline="central">eth0 in</text>
<circle cx="449.7" cy="268.9" r="2.9" fill="#aec7e8"/>
<text transform="translate(453.8 268.5) scale(0.91 1)" text-anchor="start" font-size="6.5" fill="#222" dominant-baseline="central">lo in</text>
<circle cx="411.8" cy="278.6" r="2.9" fill="#ff7f0e"/>
<text transform="translate(415.9 278.2) scale(0.91 1)" text-anchor="start" font-size="6.5" fill="#222" dominant-baseline="central">eth0 out</text>
<circle cx="449.7" cy="278.6" r="2.9" fill="#ffbb78"/>
<text transform="translate(453.8 278.2) scale(0.91 1)" text-anchor="start" font-size="6.5" fill="#222" dominant-baseline="central">lo out</text>
<line x1="554.5" y1="309.03" x2="653.4" y2="309.03" stroke="#e6e6e6" stroke-width="0.9"/>
<line x1="554.5" y1="334.57" x2="653.4" y2="334.57" stroke="#e6e6e6" stroke-width="0.9"/>
<line x1="554.5" y1="360.1" x2="653.4" y2="360.1" stroke="#e6e6e6" stroke-width="0.9"/>
<line x1="611.6" y1="286" x2="611.6" y2="360.1" stroke="#e6e6e6" stroke-width="0.9"/>
<line x1="554.5" y1="286" x2="554.5" y2="360.1" stroke="#8a8a8a" stroke-width="0.9"/>
<text transform="translate(552.5 286) scale(0.89 1)" text-anchor="end" font-size="6.5" font-weight="bold" fill="#000" dominant-baseline="central">2902</text>
<text transform="translate(552.5 309.03) scale(0.89 1)" text-anchor="end" font-size="6.5" fill="#000" dominant-baseline="central">2000</text>
<text transform="translate(552.5 334.57) scale(0.89 1)" text-anchor="end" font-size="6.5" fill="#000" dominant-baseline="central">1000</text>
<text transform="translate(552.5 360.1) scale(0.89 1)" text-anchor="end" font-size="6.5" font-weight="bold" fill="#000" dominant-baseline="central">0</text>
<text transform="translate(554.5 366.3) scale(0.89 1)" text-anchor="middle" font-size="6.5" font-weight="bold" fill="#000" dominant-baseline="central">08:48:00</text>
<text transform="translate(611.6 366.3) scale(0.89 1)" text-anchor="middle" font-size="6.5" fill="#000" dominant-baseline="central">08:49:10</text>
<text transform="translate(653.4 366.3) scale(0.89 1)" text-anchor="middle" font-size="6.5" font-weight="bold" fill="#000" dominant-baseline="central">08:49:59</text>
<polyline points="554.5,359.9 620,359.8 653.4,359.3" fill="none" stroke="#aec7e8" stroke-width="1.6" stroke-linejoin="round" opacity="1"/>
<polyline points="554.5,360.1 653.4,360.1" fill="none" stroke="#ff7f0e" stroke-width="1.9" stroke-linejoin="round" opacity="1"/>
<polyline points="554.5,286.1 560,286.4 565,286 570,286.5 575,286.2 580,286.6 585,286.9 590,286.4 595,287.6 600,287 605,287.2 610,286.9 615,286.3 620,286.6 625,286.8 630,287.3 635,287.6 640,288 645,289 649,289.4 653.4,290" fill="none" stroke="#1f77b4" stroke-width="2.0" stroke-linejoin="round" opacity="1"/>
<circle cx="565.3" cy="268.9" r="2.9" fill="#1f77b4"/>
<text transform="translate(569.4 268.5) scale(0.91 1)" text-anchor="start" font-size="6.5" fill="#222" dominant-baseline="central">established</text>
<circle cx="611.9" cy="268.9" r="2.9" fill="#aec7e8"/>
<text transform="translate(616 268.5) scale(0.91 1)" text-anchor="start" font-size="6.5" fill="#222" dominant-baseline="central">time_wait</text>
<circle cx="565.3" cy="278.6" r="2.9" fill="#ff7f0e"/>
<text transform="translate(569.4 278.2) scale(0.91 1)" text-anchor="start" font-size="6.5" fill="#222" dominant-baseline="central">close_wait</text>
<line x1="40.1" y1="445" x2="138.2" y2="445" stroke="#e6e6e6" stroke-width="0.9"/>
<line x1="97.7" y1="437.5" x2="97.7" y2="470" stroke="#e6e6e6" stroke-width="0.9"/>
<line x1="40.1" y1="437.5" x2="40.1" y2="470" stroke="#8a8a8a" stroke-width="0.9"/>
<text transform="translate(38.1 437.5) scale(0.89 1)" text-anchor="end" font-size="6.5" font-weight="bold" fill="#000" dominant-baseline="central">66728</text>
<text transform="translate(38.1 445) scale(0.89 1)" text-anchor="end" font-size="6.5" fill="#000" dominant-baseline="central">60000</text>
<polyline points="40.1,459.5 42.1,449.8 43.6,458.7 45.1,460.6 46.9,450.6 48.8,466 51.7,453.2 53.2,448.7 55.1,449.5 56.9,466 58.4,447.6 60.3,437.4 61.8,454.7 63.6,457.3 65.1,466 67,456.9 68.6,446.9 70.7,452.4 71.8,450.6 73.7,466 75.1,450.9 76.6,441.3 78.5,453.5 80.3,456.5 82.6,466 84.8,453.9 86.7,452.4 89.3,466 91.7,454.7 93.3,450.9 95.1,456.1 96.8,451.7 98.4,466 100,451.3 101.7,448 103.5,445 105.1,450.9 106.9,466 108.4,452.8 110.3,454.7 111.8,453.5 113.4,450.6 115.1,466 116.8,455.8 118.5,446.9 120.1,460.6 121.6,457.6 123.3,466 124.8,439.4 126.6,440.2 128.5,452.8 130.2,444.3 132.2,466 133.7,450.2 135.2,452.4 137,466 138.9,452.8" fill="none" stroke="#ff8a22" stroke-width="1.3" stroke-linejoin="round" opacity="1"/>
<circle cx="40.1" cy="459.5" r="1.1" fill="#ff8a22" opacity="1"/>
<circle cx="42.1" cy="449.8" r="1.1" fill="#ff8a22" opacity="1"/>
<circle cx="43.6" cy="458.7" r="1.1" fill="#ff8a22" opacity="1"/>
<circle cx="45.1" cy="460.6" r="1.1" fill="#ff8a22" opacity="1"/>
<circle cx="46.9" cy="450.6" r="1.1" fill="#ff8a22" opacity="1"/>
<circle cx="48.8" cy="466" r="1.1" fill="#ff8a22" opacity="1"/>
<circle cx="51.7" cy="453.2" r="1.1" fill="#ff8a22" opacity="1"/>
<circle cx="53.2" cy="448.7" r="1.1" fill="#ff8a22" opacity="1"/>
<circle cx="55.1" cy="449.5" r="1.1" fill="#ff8a22" opacity="1"/>
<circle cx="56.9" cy="466" r="1.1" fill="#ff8a22" opacity="1"/>
<circle cx="58.4" cy="447.6" r="1.1" fill="#ff8a22" opacity="1"/>
<circle cx="60.3" cy="437.4" r="1.1" fill="#ff8a22" opacity="1"/>
<circle cx="61.8" cy="454.7" r="1.1" fill="#ff8a22" opacity="1"/>
<circle cx="63.6" cy="457.3" r="1.1" fill="#ff8a22" opacity="1"/>
<circle cx="65.1" cy="466" r="1.1" fill="#ff8a22" opacity="1"/>
<circle cx="67" cy="456.9" r="1.1" fill="#ff8a22" opacity="1"/>
<circle cx="68.6" cy="446.9" r="1.1" fill="#ff8a22" opacity="1"/>
<circle cx="70.7" cy="452.4" r="1.1" fill="#ff8a22" opacity="1"/>
<circle cx="71.8" cy="450.6" r="1.1" fill="#ff8a22" opacity="1"/>
<circle cx="73.7" cy="466" r="1.1" fill="#ff8a22" opacity="1"/>
<circle cx="75.1" cy="450.9" r="1.1" fill="#ff8a22" opacity="1"/>
<circle cx="76.6" cy="441.3" r="1.1" fill="#ff8a22" opacity="1"/>
<circle cx="78.5" cy="453.5" r="1.1" fill="#ff8a22" opacity="1"/>
<circle cx="80.3" cy="456.5" r="1.1" fill="#ff8a22" opacity="1"/>
<circle cx="82.6" cy="466" r="1.1" fill="#ff8a22" opacity="1"/>
<circle cx="84.8" cy="453.9" r="1.1" fill="#ff8a22" opacity="1"/>
<circle cx="86.7" cy="452.4" r="1.1" fill="#ff8a22" opacity="1"/>
<circle cx="89.3" cy="466" r="1.1" fill="#ff8a22" opacity="1"/>
<circle cx="91.7" cy="454.7" r="1.1" fill="#ff8a22" opacity="1"/>
<circle cx="93.3" cy="450.9" r="1.1" fill="#ff8a22" opacity="1"/>
<circle cx="95.1" cy="456.1" r="1.1" fill="#ff8a22" opacity="1"/>
<circle cx="96.8" cy="451.7" r="1.1" fill="#ff8a22" opacity="1"/>
<circle cx="98.4" cy="466" r="1.1" fill="#ff8a22" opacity="1"/>
<circle cx="100" cy="451.3" r="1.1" fill="#ff8a22" opacity="1"/>
<circle cx="101.7" cy="448" r="1.1" fill="#ff8a22" opacity="1"/>
<circle cx="103.5" cy="445" r="1.1" fill="#ff8a22" opacity="1"/>
<circle cx="105.1" cy="450.9" r="1.1" fill="#ff8a22" opacity="1"/>
<circle cx="106.9" cy="466" r="1.1" fill="#ff8a22" opacity="1"/>
<circle cx="108.4" cy="452.8" r="1.1" fill="#ff8a22" opacity="1"/>
<circle cx="110.3" cy="454.7" r="1.1" fill="#ff8a22" opacity="1"/>
<circle cx="111.8" cy="453.5" r="1.1" fill="#ff8a22" opacity="1"/>
<circle cx="113.4" cy="450.6" r="1.1" fill="#ff8a22" opacity="1"/>
<circle cx="115.1" cy="466" r="1.1" fill="#ff8a22" opacity="1"/>
<circle cx="116.8" cy="455.8" r="1.1" fill="#ff8a22" opacity="1"/>
<circle cx="118.5" cy="446.9" r="1.1" fill="#ff8a22" opacity="1"/>
<circle cx="120.1" cy="460.6" r="1.1" fill="#ff8a22" opacity="1"/>
<circle cx="121.6" cy="457.6" r="1.1" fill="#ff8a22" opacity="1"/>
<circle cx="123.3" cy="466" r="1.1" fill="#ff8a22" opacity="1"/>
<circle cx="124.8" cy="439.4" r="1.1" fill="#ff8a22" opacity="1"/>
<circle cx="126.6" cy="440.2" r="1.1" fill="#ff8a22" opacity="1"/>
<circle cx="128.5" cy="452.8" r="1.1" fill="#ff8a22" opacity="1"/>
<circle cx="130.2" cy="444.3" r="1.1" fill="#ff8a22" opacity="1"/>
<circle cx="132.2" cy="466" r="1.1" fill="#ff8a22" opacity="1"/>
<circle cx="133.7" cy="450.2" r="1.1" fill="#ff8a22" opacity="1"/>
<circle cx="135.2" cy="452.4" r="1.1" fill="#ff8a22" opacity="1"/>
<circle cx="137" cy="466" r="1.1" fill="#ff8a22" opacity="1"/>
<circle cx="138.9" cy="452.8" r="1.1" fill="#ff8a22" opacity="1"/>
<circle cx="68.9" cy="419.9" r="2.9" fill="#1f77b4"/>
<text transform="translate(73 419.5) scale(0.91 1)" text-anchor="start" font-size="6.5" fill="#222" dominant-baseline="central">eth0 in</text>
<circle cx="106.4" cy="419.9" r="2.9" fill="#aec7e8"/>
<text transform="translate(110.5 419.5) scale(0.91 1)" text-anchor="start" font-size="6.5" fill="#222" dominant-baseline="central">lo in</text>
<circle cx="68.9" cy="430" r="2.9" fill="#ff7f0e"/>
<text transform="translate(73 429.6) scale(0.91 1)" text-anchor="start" font-size="6.5" fill="#222" dominant-baseline="central">eth0 out</text>
<circle cx="106.4" cy="430" r="2.9" fill="#ffbb78"/>
<text transform="translate(110.5 429.6) scale(0.91 1)" text-anchor="start" font-size="6.5" fill="#222" dominant-baseline="central">lo out</text>
<line x1="212.3" y1="450.8" x2="310" y2="450.8" stroke="#e6e6e6" stroke-width="0.9"/>
<line x1="267.9" y1="427.6" x2="267.9" y2="470" stroke="#e6e6e6" stroke-width="0.9"/>
<line x1="212.3" y1="427.6" x2="212.3" y2="470" stroke="#8a8a8a" stroke-width="0.9"/>
<text transform="translate(210.3 427.6) scale(0.89 1)" text-anchor="end" font-size="6.5" font-weight="bold" fill="#000" dominant-baseline="central">14</text>
<text transform="translate(210.3 450.8) scale(0.89 1)" text-anchor="end" font-size="6.5" fill="#000" dominant-baseline="central">10</text>
<polygon points="238.6,470 240.2,427.6 241.8,470" fill="#aec7e8" opacity="0.9"/>
<polyline points="238.4,470 240.2,427.6 242,470" fill="none" stroke="#1f77b4" stroke-width="0.8" stroke-linejoin="round" opacity="0.8"/>
<circle cx="240.2" cy="427.8" r="0.9" fill="#1f77b4"/>
<circle cx="269" cy="420.2" r="2.9" fill="#1f77b4"/>
<text transform="translate(273.1 419.8) scale(0.91 1)" text-anchor="start" font-size="6.5" fill="#222" dominant-baseline="central">Series -1</text>
<line x1="383.1" y1="443.3" x2="653" y2="443.3" stroke="#e6e6e6" stroke-width="0.9"/>
<text transform="translate(381.6 427.4) scale(0.89 1)" text-anchor="end" font-size="6.5" font-weight="bold" fill="#000" dominant-baseline="central">122953</text>
<text transform="translate(381.6 443.3) scale(0.89 1)" text-anchor="end" font-size="6.5" fill="#000" dominant-baseline="central">100000</text>
<text transform="translate(381.6 456.4) scale(0.89 1)" text-anchor="end" font-size="6.5" fill="#000" dominant-baseline="central">80000</text>
<rect x="383.1" y="427.4" width="269.9" height="28.2" fill="#ff7f0e" opacity="0.72"/>
<rect x="383.1" y="455.4" width="269.9" height="2.2" fill="#aec7e8" opacity="0.72"/>
<rect x="383.1" y="457.5" width="269.9" height="10" fill="#1f77b4" opacity="0.72"/>
<line x1="427.6" y1="428.5" x2="427.6" y2="454.5" stroke="#f59a52" stroke-width="0.5"/>
<line x1="472.4" y1="428.5" x2="472.4" y2="454.5" stroke="#f59a52" stroke-width="0.5"/>
<line x1="517.2" y1="428.5" x2="517.2" y2="454.5" stroke="#f59a52" stroke-width="0.5"/>
<line x1="562" y1="428.5" x2="562" y2="454.5" stroke="#f59a52" stroke-width="0.5"/>
<line x1="606.8" y1="428.5" x2="606.8" y2="454.5" stroke="#f59a52" stroke-width="0.5"/>
<line x1="383.1" y1="455.2" x2="653" y2="455.2" stroke="#b8d0ec" stroke-width="1.0"/>
<line x1="383.1" y1="457.5" x2="653" y2="457.5" stroke="#3f8ac6" stroke-width="0.9"/>
<circle cx="383.1" cy="427.4" r="1.4" fill="#ffa04c"/>
<circle cx="383.1" cy="454.8" r="1.15" fill="#b3cdec"/>
<circle cx="383.1" cy="457.7" r="1.15" fill="#3c88c7"/>
<circle cx="387.67" cy="427.4" r="1.4" fill="#ffa04c"/>
<circle cx="387.67" cy="454.8" r="1.15" fill="#b3cdec"/>
<circle cx="387.67" cy="457.7" r="1.15" fill="#3c88c7"/>
<circle cx="392.25" cy="427.4" r="1.4" fill="#ffa04c"/>
<circle cx="392.25" cy="454.8" r="1.15" fill="#b3cdec"/>
<circle cx="392.25" cy="457.7" r="1.15" fill="#3c88c7"/>
<circle cx="396.82" cy="427.4" r="1.4" fill="#ffa04c"/>
<circle cx="396.82" cy="454.8" r="1.15" fill="#b3cdec"/>
<circle cx="396.82" cy="457.7" r="1.15" fill="#3c88c7"/>
<circle cx="401.4" cy="427.4" r="1.4" fill="#ffa04c"/>
<circle cx="401.4" cy="454.8" r="1.15" fill="#b3cdec"/>
<circle cx="401.4" cy="457.7" r="1.15" fill="#3c88c7"/>
<circle cx="405.97" cy="427.4" r="1.4" fill="#ffa04c"/>
<circle cx="405.97" cy="454.8" r="1.15" fill="#b3cdec"/>
<circle cx="405.97" cy="457.7" r="1.15" fill="#3c88c7"/>
<circle cx="410.55" cy="427.4" r="1.4" fill="#ffa04c"/>
<circle cx="410.55" cy="454.8" r="1.15" fill="#b3cdec"/>
<circle cx="410.55" cy="457.7" r="1.15" fill="#3c88c7"/>
<circle cx="415.12" cy="427.4" r="1.4" fill="#ffa04c"/>
<circle cx="415.12" cy="454.8" r="1.15" fill="#b3cdec"/>
<circle cx="415.12" cy="457.7" r="1.15" fill="#3c88c7"/>
<circle cx="419.7" cy="427.4" r="1.4" fill="#ffa04c"/>
<circle cx="419.7" cy="454.8" r="1.15" fill="#b3cdec"/>
<circle cx="419.7" cy="457.7" r="1.15" fill="#3c88c7"/>
<circle cx="424.27" cy="427.4" r="1.4" fill="#ffa04c"/>
<circle cx="424.27" cy="454.8" r="1.15" fill="#b3cdec"/>
<circle cx="424.27" cy="457.7" r="1.15" fill="#3c88c7"/>
<circle cx="428.85" cy="427.4" r="1.4" fill="#ffa04c"/>
<circle cx="428.85" cy="454.8" r="1.15" fill="#b3cdec"/>
<circle cx="428.85" cy="457.7" r="1.15" fill="#3c88c7"/>
<circle cx="433.42" cy="427.4" r="1.4" fill="#ffa04c"/>
<circle cx="433.42" cy="454.8" r="1.15" fill="#b3cdec"/>
<circle cx="433.42" cy="457.7" r="1.15" fill="#3c88c7"/>
<circle cx="437.99" cy="427.4" r="1.4" fill="#ffa04c"/>
<circle cx="437.99" cy="454.8" r="1.15" fill="#b3cdec"/>
<circle cx="437.99" cy="457.7" r="1.15" fill="#3c88c7"/>
<circle cx="442.57" cy="427.4" r="1.4" fill="#ffa04c"/>
<circle cx="442.57" cy="454.8" r="1.15" fill="#b3cdec"/>
<circle cx="442.57" cy="457.7" r="1.15" fill="#3c88c7"/>
<circle cx="447.14" cy="427.4" r="1.4" fill="#ffa04c"/>
<circle cx="447.14" cy="454.8" r="1.15" fill="#b3cdec"/>
<circle cx="447.14" cy="457.7" r="1.15" fill="#3c88c7"/>
<circle cx="451.72" cy="427.4" r="1.4" fill="#ffa04c"/>
<circle cx="451.72" cy="454.8" r="1.15" fill="#b3cdec"/>
<circle cx="451.72" cy="457.7" r="1.15" fill="#3c88c7"/>
<circle cx="456.29" cy="427.4" r="1.4" fill="#ffa04c"/>
<circle cx="456.29" cy="454.8" r="1.15" fill="#b3cdec"/>
<circle cx="456.29" cy="457.7" r="1.15" fill="#3c88c7"/>
<circle cx="460.87" cy="427.4" r="1.4" fill="#ffa04c"/>
<circle cx="460.87" cy="454.8" r="1.15" fill="#b3cdec"/>
<circle cx="460.87" cy="457.7" r="1.15" fill="#3c88c7"/>
<circle cx="465.44" cy="427.4" r="1.4" fill="#ffa04c"/>
<circle cx="465.44" cy="454.8" r="1.15" fill="#b3cdec"/>
<circle cx="465.44" cy="457.7" r="1.15" fill="#3c88c7"/>
<circle cx="470.02" cy="427.4" r="1.4" fill="#ffa04c"/>
<circle cx="470.02" cy="454.8" r="1.15" fill="#b3cdec"/>
<circle cx="470.02" cy="457.7" r="1.15" fill="#3c88c7"/>
<circle cx="474.59" cy="427.4" r="1.4" fill="#ffa04c"/>
<circle cx="474.59" cy="454.8" r="1.15" fill="#b3cdec"/>
<circle cx="474.59" cy="457.7" r="1.15" fill="#3c88c7"/>
<circle cx="479.17" cy="427.4" r="1.4" fill="#ffa04c"/>
<circle cx="479.17" cy="454.8" r="1.15" fill="#b3cdec"/>
<circle cx="479.17" cy="457.7" r="1.15" fill="#3c88c7"/>
<circle cx="483.74" cy="427.4" r="1.4" fill="#ffa04c"/>
<circle cx="483.74" cy="454.8" r="1.15" fill="#b3cdec"/>
<circle cx="483.74" cy="457.7" r="1.15" fill="#3c88c7"/>
<circle cx="488.32" cy="427.4" r="1.4" fill="#ffa04c"/>
<circle cx="488.32" cy="454.8" r="1.15" fill="#b3cdec"/>
<circle cx="488.32" cy="457.7" r="1.15" fill="#3c88c7"/>
<circle cx="492.89" cy="427.4" r="1.4" fill="#ffa04c"/>
<circle cx="492.89" cy="454.8" r="1.15" fill="#b3cdec"/>
<circle cx="492.89" cy="457.7" r="1.15" fill="#3c88c7"/>
<circle cx="497.46" cy="427.4" r="1.4" fill="#ffa04c"/>
<circle cx="497.46" cy="454.8" r="1.15" fill="#b3cdec"/>
<circle cx="497.46" cy="457.7" r="1.15" fill="#3c88c7"/>
<circle cx="502.04" cy="427.4" r="1.4" fill="#ffa04c"/>
<circle cx="502.04" cy="454.8" r="1.15" fill="#b3cdec"/>
<circle cx="502.04" cy="457.7" r="1.15" fill="#3c88c7"/>
<circle cx="506.61" cy="427.4" r="1.4" fill="#ffa04c"/>
<circle cx="506.61" cy="454.8" r="1.15" fill="#b3cdec"/>
<circle cx="506.61" cy="457.7" r="1.15" fill="#3c88c7"/>
<circle cx="511.19" cy="427.4" r="1.4" fill="#ffa04c"/>
<circle cx="511.19" cy="454.8" r="1.15" fill="#b3cdec"/>
<circle cx="511.19" cy="457.7" r="1.15" fill="#3c88c7"/>
<circle cx="515.76" cy="427.4" r="1.4" fill="#ffa04c"/>
<circle cx="515.76" cy="454.8" r="1.15" fill="#b3cdec"/>
<circle cx="515.76" cy="457.7" r="1.15" fill="#3c88c7"/>
<circle cx="520.34" cy="427.4" r="1.4" fill="#ffa04c"/>
<circle cx="520.34" cy="454.8" r="1.15" fill="#b3cdec"/>
<circle cx="520.34" cy="457.7" r="1.15" fill="#3c88c7"/>
<circle cx="524.91" cy="427.4" r="1.4" fill="#ffa04c"/>
<circle cx="524.91" cy="454.8" r="1.15" fill="#b3cdec"/>
<circle cx="524.91" cy="457.7" r="1.15" fill="#3c88c7"/>
<circle cx="529.49" cy="427.4" r="1.4" fill="#ffa04c"/>
<circle cx="529.49" cy="454.8" r="1.15" fill="#b3cdec"/>
<circle cx="529.49" cy="457.7" r="1.15" fill="#3c88c7"/>
<circle cx="534.06" cy="427.4" r="1.4" fill="#ffa04c"/>
<circle cx="534.06" cy="454.8" r="1.15" fill="#b3cdec"/>
<circle cx="534.06" cy="457.7" r="1.15" fill="#3c88c7"/>
<circle cx="538.64" cy="427.4" r="1.4" fill="#ffa04c"/>
<circle cx="538.64" cy="454.8" r="1.15" fill="#b3cdec"/>
<circle cx="538.64" cy="457.7" r="1.15" fill="#3c88c7"/>
<circle cx="543.21" cy="427.4" r="1.4" fill="#ffa04c"/>
<circle cx="543.21" cy="454.8" r="1.15" fill="#b3cdec"/>
<circle cx="543.21" cy="457.7" r="1.15" fill="#3c88c7"/>
<circle cx="547.78" cy="427.4" r="1.4" fill="#ffa04c"/>
<circle cx="547.78" cy="454.8" r="1.15" fill="#b3cdec"/>
<circle cx="547.78" cy="457.7" r="1.15" fill="#3c88c7"/>
<circle cx="552.36" cy="427.4" r="1.4" fill="#ffa04c"/>
<circle cx="552.36" cy="454.8" r="1.15" fill="#b3cdec"/>
<circle cx="552.36" cy="457.7" r="1.15" fill="#3c88c7"/>
<circle cx="556.93" cy="427.4" r="1.4" fill="#ffa04c"/>
<circle cx="556.93" cy="454.8" r="1.15" fill="#b3cdec"/>
<circle cx="556.93" cy="457.7" r="1.15" fill="#3c88c7"/>
<circle cx="561.51" cy="427.4" r="1.4" fill="#ffa04c"/>
<circle cx="561.51" cy="454.8" r="1.15" fill="#b3cdec"/>
<circle cx="561.51" cy="457.7" r="1.15" fill="#3c88c7"/>
<circle cx="566.08" cy="427.4" r="1.4" fill="#ffa04c"/>
<circle cx="566.08" cy="454.8" r="1.15" fill="#b3cdec"/>
<circle cx="566.08" cy="457.7" r="1.15" fill="#3c88c7"/>
<circle cx="570.66" cy="427.4" r="1.4" fill="#ffa04c"/>
<circle cx="570.66" cy="454.8" r="1.15" fill="#b3cdec"/>
<circle cx="570.66" cy="457.7" r="1.15" fill="#3c88c7"/>
<circle cx="575.23" cy="427.4" r="1.4" fill="#ffa04c"/>
<circle cx="575.23" cy="454.8" r="1.15" fill="#b3cdec"/>
<circle cx="575.23" cy="457.7" r="1.15" fill="#3c88c7"/>
<circle cx="579.81" cy="427.4" r="1.4" fill="#ffa04c"/>
<circle cx="579.81" cy="454.8" r="1.15" fill="#b3cdec"/>
<circle cx="579.81" cy="457.7" r="1.15" fill="#3c88c7"/>
<circle cx="584.38" cy="427.4" r="1.4" fill="#ffa04c"/>
<circle cx="584.38" cy="454.8" r="1.15" fill="#b3cdec"/>
<circle cx="584.38" cy="457.7" r="1.15" fill="#3c88c7"/>
<circle cx="588.96" cy="427.4" r="1.4" fill="#ffa04c"/>
<circle cx="588.96" cy="454.8" r="1.15" fill="#b3cdec"/>
<circle cx="588.96" cy="457.7" r="1.15" fill="#3c88c7"/>
<circle cx="593.53" cy="427.4" r="1.4" fill="#ffa04c"/>
<circle cx="593.53" cy="454.8" r="1.15" fill="#b3cdec"/>
<circle cx="593.53" cy="457.7" r="1.15" fill="#3c88c7"/>
<circle cx="598.11" cy="427.4" r="1.4" fill="#ffa04c"/>
<circle cx="598.11" cy="454.8" r="1.15" fill="#b3cdec"/>
<circle cx="598.11" cy="457.7" r="1.15" fill="#3c88c7"/>
<circle cx="602.68" cy="427.4" r="1.4" fill="#ffa04c"/>
<circle cx="602.68" cy="454.8" r="1.15" fill="#b3cdec"/>
<circle cx="602.68" cy="457.7" r="1.15" fill="#3c88c7"/>
<circle cx="607.25" cy="427.4" r="1.4" fill="#ffa04c"/>
<circle cx="607.25" cy="454.8" r="1.15" fill="#b3cdec"/>
<circle cx="607.25" cy="457.7" r="1.15" fill="#3c88c7"/>
<circle cx="611.83" cy="427.4" r="1.4" fill="#ffa04c"/>
<circle cx="611.83" cy="454.8" r="1.15" fill="#b3cdec"/>
<circle cx="611.83" cy="457.7" r="1.15" fill="#3c88c7"/>
<circle cx="616.4" cy="427.4" r="1.4" fill="#ffa04c"/>
<circle cx="616.4" cy="454.8" r="1.15" fill="#b3cdec"/>
<circle cx="616.4" cy="457.7" r="1.15" fill="#3c88c7"/>
<circle cx="620.98" cy="427.4" r="1.4" fill="#ffa04c"/>
<circle cx="620.98" cy="454.8" r="1.15" fill="#b3cdec"/>
<circle cx="620.98" cy="457.7" r="1.15" fill="#3c88c7"/>
<circle cx="625.55" cy="427.4" r="1.4" fill="#ffa04c"/>
<circle cx="625.55" cy="454.8" r="1.15" fill="#b3cdec"/>
<circle cx="625.55" cy="457.7" r="1.15" fill="#3c88c7"/>
<circle cx="630.13" cy="427.4" r="1.4" fill="#ffa04c"/>
<circle cx="630.13" cy="454.8" r="1.15" fill="#b3cdec"/>
<circle cx="630.13" cy="457.7" r="1.15" fill="#3c88c7"/>
<circle cx="634.7" cy="427.4" r="1.4" fill="#ffa04c"/>
<circle cx="634.7" cy="454.8" r="1.15" fill="#b3cdec"/>
<circle cx="634.7" cy="457.7" r="1.15" fill="#3c88c7"/>
<circle cx="639.28" cy="427.4" r="1.4" fill="#ffa04c"/>
<circle cx="639.28" cy="454.8" r="1.15" fill="#b3cdec"/>
<circle cx="639.28" cy="457.7" r="1.15" fill="#3c88c7"/>
<circle cx="643.85" cy="427.4" r="1.4" fill="#ffa04c"/>
<circle cx="643.85" cy="454.8" r="1.15" fill="#b3cdec"/>
<circle cx="643.85" cy="457.7" r="1.15" fill="#3c88c7"/>
<circle cx="648.43" cy="427.4" r="1.4" fill="#ffa04c"/>
<circle cx="648.43" cy="454.8" r="1.15" fill="#b3cdec"/>
<circle cx="648.43" cy="457.7" r="1.15" fill="#3c88c7"/>
<circle cx="653" cy="427.4" r="1.4" fill="#ffa04c"/>
<circle cx="653" cy="454.8" r="1.15" fill="#b3cdec"/>
<circle cx="653" cy="457.7" r="1.15" fill="#3c88c7"/>
<line x1="383.1" y1="427.6" x2="653" y2="427.6" stroke="#ffa04c" stroke-width="0.9"/>
<circle cx="504.6" cy="419.8" r="2.9" fill="#1f77b4"/>
<text transform="translate(508.7 419.4) scale(0.91 1)" text-anchor="start" font-size="6.5" fill="#222" dominant-baseline="central">application</text>
<circle cx="550.7" cy="419.8" r="2.9" fill="#aec7e8"/>
<text transform="translate(554.8 419.4) scale(0.91 1)" text-anchor="start" font-size="6.5" fill="#222" dominant-baseline="central">free (cache)</text>
<circle cx="600.1" cy="419.8" r="2.9" fill="#ff7f0e"/>
<text transform="translate(604.2 419.4) scale(0.91 1)" text-anchor="start" font-size="6.5" fill="#222" dominant-baseline="central">free (unused)</text>
<path d="M157.6 89.8L162.2 94.4M162.2 89.8L157.6 94.4" stroke="#868686" stroke-width="1.9"/>
<path d="M670.2 89.8L674.8 94.4M674.8 89.8L670.2 94.4" stroke="#868686" stroke-width="1.9"/>
<path d="M157.6 241.3L162.2 245.9M162.2 241.3L157.6 245.9" stroke="#868686" stroke-width="1.9"/>
<path d="M329.4 241.3L334 245.9M334 241.3L329.4 245.9" stroke="#868686" stroke-width="1.9"/>
<path d="M500.4 241.3L505 245.9M505 241.3L500.4 245.9" stroke="#868686" stroke-width="1.9"/>
<path d="M671.2 241.3L675.8 245.9M675.8 241.3L671.2 245.9" stroke="#868686" stroke-width="1.9"/>
<path d="M157.6 393.3L162.2 397.9M162.2 393.3L157.6 397.9" stroke="#868686" stroke-width="1.9"/>
<path d="M329.4 393.3L334 397.9M334 393.3L329.4 397.9" stroke="#868686" stroke-width="1.9"/>
<path d="M671.2 393.3L675.8 397.9M675.8 393.3L671.2 397.9" stroke="#868686" stroke-width="1.9"/>
</svg>
<div style="position:absolute;left:0;top:463px;width:700px;height:1px;background:rgba(0,0,0,0.55)"></div>
</body></html>
